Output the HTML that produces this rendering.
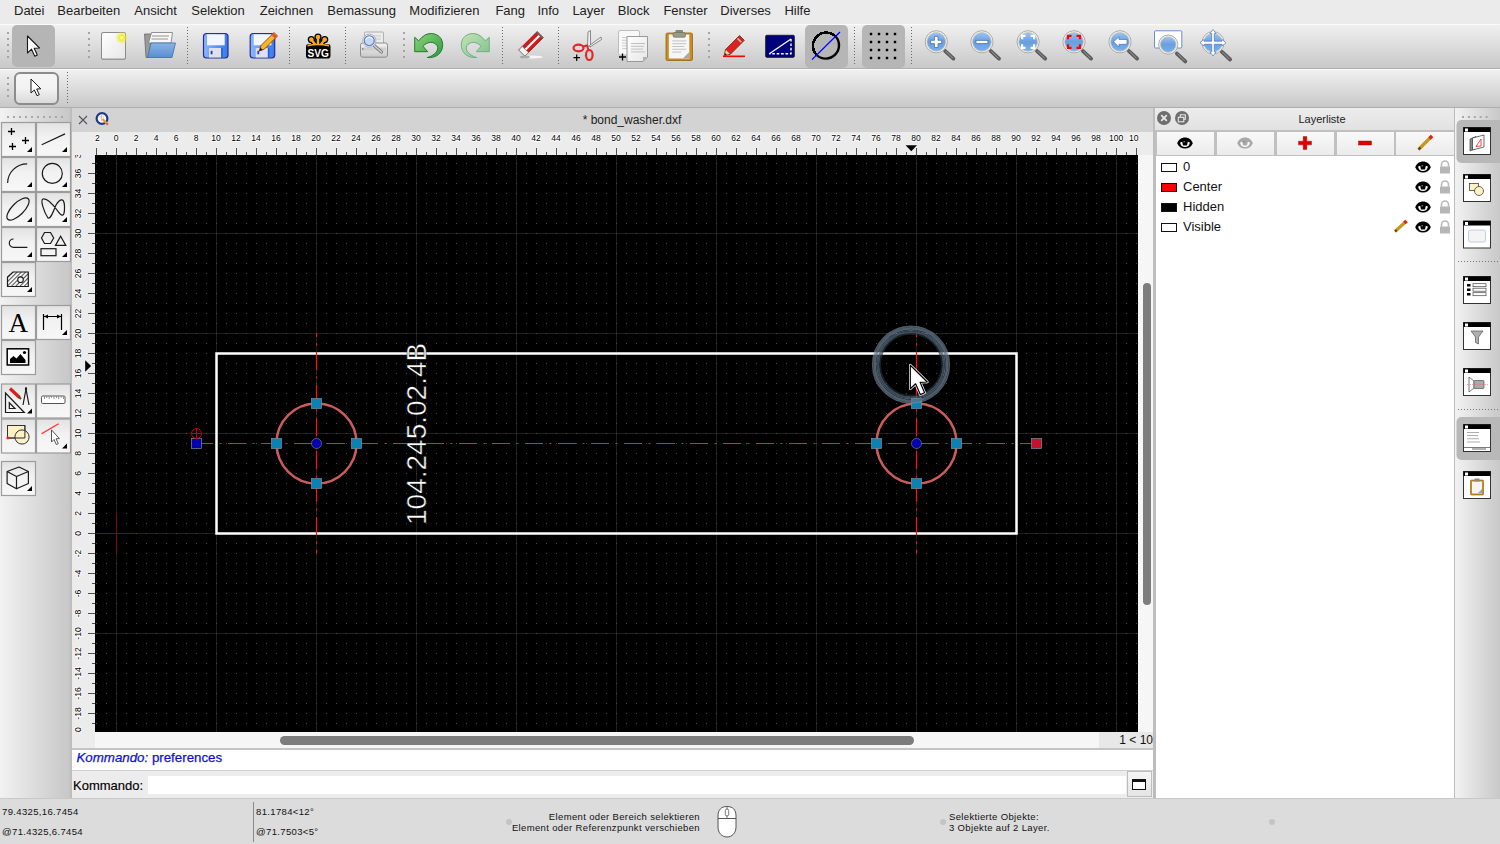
<!DOCTYPE html>
<html><head><meta charset="utf-8">
<style>
html,body{margin:0;padding:0;}
body{width:1500px;height:844px;overflow:hidden;position:relative;background:#ececec;font-family:"Liberation Sans",sans-serif;color:#1a1a1a;}
.a{position:absolute;}
.t{position:absolute;white-space:nowrap;line-height:1;}
svg{position:absolute;overflow:hidden;}
</style></head><body>
<div class="a" style="left:0;top:0;width:1500px;height:24px;background:#ebebeb;"></div><div class="t" style="left:14px;top:4px;font-size:13px;color:#222;">Datei</div><div class="t" style="left:57.3px;top:4px;font-size:13px;color:#222;">Bearbeiten</div><div class="t" style="left:134.3px;top:4px;font-size:13px;color:#222;">Ansicht</div><div class="t" style="left:191.3px;top:4px;font-size:13px;color:#222;">Selektion</div><div class="t" style="left:259.7px;top:4px;font-size:13px;color:#222;">Zeichnen</div><div class="t" style="left:327.3px;top:4px;font-size:13px;color:#222;">Bemassung</div><div class="t" style="left:409.3px;top:4px;font-size:13px;color:#222;">Modifizieren</div><div class="t" style="left:495.4px;top:4px;font-size:13px;color:#222;">Fang</div><div class="t" style="left:537.4px;top:4px;font-size:13px;color:#222;">Info</div><div class="t" style="left:572.4px;top:4px;font-size:13px;color:#222;">Layer</div><div class="t" style="left:617.8px;top:4px;font-size:13px;color:#222;">Block</div><div class="t" style="left:663.4px;top:4px;font-size:13px;color:#222;">Fenster</div><div class="t" style="left:720.3px;top:4px;font-size:13px;color:#222;">Diverses</div><div class="t" style="left:784.4px;top:4px;font-size:13px;color:#222;">Hilfe</div><div class="a" style="left:0;top:24px;width:1500px;height:44px;background:linear-gradient(#f0f0f0,#c8c8c8);border-top:1px solid #fafafa;box-sizing:border-box;"></div><div class="a" style="left:0;top:68px;width:1500px;height:1px;background:#b0b0b0;"></div><div class="a" style="left:0;top:69px;width:1500px;height:38px;background:linear-gradient(#f0f0f0,#c8c8c8);border-top:1px solid #fafafa;box-sizing:border-box;"></div><div class="a" style="left:0;top:107px;width:1500px;height:1px;background:#aeaeae;"></div><div class="a" style="left:0;top:108px;width:71px;height:690px;background:linear-gradient(90deg,#f2f2f2,#c6c6c6);"></div><div class="a" style="left:71px;top:108px;width:1082px;height:24px;background:#d3d3d3;"></div><div class="a" style="left:70px;top:108px;width:2px;height:690px;background:#bdbdbd;"></div><div class="t" style="left:632px;top:114px;font-size:12px;transform:translateX(-50%);color:#222;">* bond_washer.dxf</div><div class="a" style="left:72px;top:132px;width:1081px;height:23px;background:#ececec;"></div><div class="a" style="left:72px;top:155px;width:23px;height:593px;background:#ececec;"></div><div class="a" style="left:1138px;top:155px;width:15px;height:593px;background:#f6f6f6;"></div><div class="a" style="left:95px;top:732px;width:1058px;height:16px;background:#f6f6f6;"></div><svg class="a" style="left:95px;top:155px;" width="1043" height="577" viewBox="0 0 1043 577"><rect x="0" y="0" width="1043" height="577" fill="#000"/><rect x="21" y="0" width="1" height="577" fill="#1f1f1f"/><rect x="121" y="0" width="1" height="577" fill="#1f1f1f"/><rect x="221" y="0" width="1" height="577" fill="#1f1f1f"/><rect x="321" y="0" width="1" height="577" fill="#1f1f1f"/><rect x="421" y="0" width="1" height="577" fill="#1f1f1f"/><rect x="521" y="0" width="1" height="577" fill="#1f1f1f"/><rect x="621" y="0" width="1" height="577" fill="#1f1f1f"/><rect x="721" y="0" width="1" height="577" fill="#1f1f1f"/><rect x="821" y="0" width="1" height="577" fill="#1f1f1f"/><rect x="921" y="0" width="1" height="577" fill="#1f1f1f"/><rect x="1021" y="0" width="1" height="577" fill="#1f1f1f"/><rect x="0" y="478" width="1043" height="1" fill="#1f1f1f"/><rect x="0" y="378" width="1043" height="1" fill="#1f1f1f"/><rect x="0" y="278" width="1043" height="1" fill="#1f1f1f"/><rect x="0" y="178" width="1043" height="1" fill="#1f1f1f"/><rect x="0" y="78" width="1043" height="1" fill="#1f1f1f"/><path d="M1 568h1v1h-1zM1 558h1v1h-1zM1 548h1v1h-1zM1 538h1v1h-1zM1 528h1v1h-1zM1 518h1v1h-1zM1 508h1v1h-1zM1 498h1v1h-1zM1 488h1v1h-1zM1 478h1v1h-1zM1 468h1v1h-1zM1 458h1v1h-1zM1 448h1v1h-1zM1 438h1v1h-1zM1 428h1v1h-1zM1 418h1v1h-1zM1 408h1v1h-1zM1 398h1v1h-1zM1 388h1v1h-1zM1 378h1v1h-1zM1 368h1v1h-1zM1 358h1v1h-1zM1 348h1v1h-1zM1 338h1v1h-1zM1 328h1v1h-1zM1 318h1v1h-1zM1 308h1v1h-1zM1 298h1v1h-1zM1 288h1v1h-1zM1 278h1v1h-1zM1 268h1v1h-1zM1 258h1v1h-1zM1 248h1v1h-1zM1 238h1v1h-1zM1 228h1v1h-1zM1 218h1v1h-1zM1 208h1v1h-1zM1 198h1v1h-1zM1 188h1v1h-1zM1 178h1v1h-1zM1 168h1v1h-1zM1 158h1v1h-1zM1 148h1v1h-1zM1 138h1v1h-1zM1 128h1v1h-1zM1 118h1v1h-1zM1 108h1v1h-1zM1 98h1v1h-1zM1 88h1v1h-1zM1 78h1v1h-1zM1 68h1v1h-1zM1 58h1v1h-1zM1 48h1v1h-1zM1 38h1v1h-1zM1 28h1v1h-1zM1 18h1v1h-1zM1 8h1v1h-1zM11 568h1v1h-1zM11 558h1v1h-1zM11 548h1v1h-1zM11 538h1v1h-1zM11 528h1v1h-1zM11 518h1v1h-1zM11 508h1v1h-1zM11 498h1v1h-1zM11 488h1v1h-1zM11 478h1v1h-1zM11 468h1v1h-1zM11 458h1v1h-1zM11 448h1v1h-1zM11 438h1v1h-1zM11 428h1v1h-1zM11 418h1v1h-1zM11 408h1v1h-1zM11 398h1v1h-1zM11 388h1v1h-1zM11 378h1v1h-1zM11 368h1v1h-1zM11 358h1v1h-1zM11 348h1v1h-1zM11 338h1v1h-1zM11 328h1v1h-1zM11 318h1v1h-1zM11 308h1v1h-1zM11 298h1v1h-1zM11 288h1v1h-1zM11 278h1v1h-1zM11 268h1v1h-1zM11 258h1v1h-1zM11 248h1v1h-1zM11 238h1v1h-1zM11 228h1v1h-1zM11 218h1v1h-1zM11 208h1v1h-1zM11 198h1v1h-1zM11 188h1v1h-1zM11 178h1v1h-1zM11 168h1v1h-1zM11 158h1v1h-1zM11 148h1v1h-1zM11 138h1v1h-1zM11 128h1v1h-1zM11 118h1v1h-1zM11 108h1v1h-1zM11 98h1v1h-1zM11 88h1v1h-1zM11 78h1v1h-1zM11 68h1v1h-1zM11 58h1v1h-1zM11 48h1v1h-1zM11 38h1v1h-1zM11 28h1v1h-1zM11 18h1v1h-1zM11 8h1v1h-1zM21 568h1v1h-1zM21 558h1v1h-1zM21 548h1v1h-1zM21 538h1v1h-1zM21 528h1v1h-1zM21 518h1v1h-1zM21 508h1v1h-1zM21 498h1v1h-1zM21 488h1v1h-1zM21 478h1v1h-1zM21 468h1v1h-1zM21 458h1v1h-1zM21 448h1v1h-1zM21 438h1v1h-1zM21 428h1v1h-1zM21 418h1v1h-1zM21 408h1v1h-1zM21 398h1v1h-1zM21 388h1v1h-1zM21 378h1v1h-1zM21 368h1v1h-1zM21 358h1v1h-1zM21 348h1v1h-1zM21 338h1v1h-1zM21 328h1v1h-1zM21 318h1v1h-1zM21 308h1v1h-1zM21 298h1v1h-1zM21 288h1v1h-1zM21 278h1v1h-1zM21 268h1v1h-1zM21 258h1v1h-1zM21 248h1v1h-1zM21 238h1v1h-1zM21 228h1v1h-1zM21 218h1v1h-1zM21 208h1v1h-1zM21 198h1v1h-1zM21 188h1v1h-1zM21 178h1v1h-1zM21 168h1v1h-1zM21 158h1v1h-1zM21 148h1v1h-1zM21 138h1v1h-1zM21 128h1v1h-1zM21 118h1v1h-1zM21 108h1v1h-1zM21 98h1v1h-1zM21 88h1v1h-1zM21 78h1v1h-1zM21 68h1v1h-1zM21 58h1v1h-1zM21 48h1v1h-1zM21 38h1v1h-1zM21 28h1v1h-1zM21 18h1v1h-1zM21 8h1v1h-1zM31 568h1v1h-1zM31 558h1v1h-1zM31 548h1v1h-1zM31 538h1v1h-1zM31 528h1v1h-1zM31 518h1v1h-1zM31 508h1v1h-1zM31 498h1v1h-1zM31 488h1v1h-1zM31 478h1v1h-1zM31 468h1v1h-1zM31 458h1v1h-1zM31 448h1v1h-1zM31 438h1v1h-1zM31 428h1v1h-1zM31 418h1v1h-1zM31 408h1v1h-1zM31 398h1v1h-1zM31 388h1v1h-1zM31 378h1v1h-1zM31 368h1v1h-1zM31 358h1v1h-1zM31 348h1v1h-1zM31 338h1v1h-1zM31 328h1v1h-1zM31 318h1v1h-1zM31 308h1v1h-1zM31 298h1v1h-1zM31 288h1v1h-1zM31 278h1v1h-1zM31 268h1v1h-1zM31 258h1v1h-1zM31 248h1v1h-1zM31 238h1v1h-1zM31 228h1v1h-1zM31 218h1v1h-1zM31 208h1v1h-1zM31 198h1v1h-1zM31 188h1v1h-1zM31 178h1v1h-1zM31 168h1v1h-1zM31 158h1v1h-1zM31 148h1v1h-1zM31 138h1v1h-1zM31 128h1v1h-1zM31 118h1v1h-1zM31 108h1v1h-1zM31 98h1v1h-1zM31 88h1v1h-1zM31 78h1v1h-1zM31 68h1v1h-1zM31 58h1v1h-1zM31 48h1v1h-1zM31 38h1v1h-1zM31 28h1v1h-1zM31 18h1v1h-1zM31 8h1v1h-1zM41 568h1v1h-1zM41 558h1v1h-1zM41 548h1v1h-1zM41 538h1v1h-1zM41 528h1v1h-1zM41 518h1v1h-1zM41 508h1v1h-1zM41 498h1v1h-1zM41 488h1v1h-1zM41 478h1v1h-1zM41 468h1v1h-1zM41 458h1v1h-1zM41 448h1v1h-1zM41 438h1v1h-1zM41 428h1v1h-1zM41 418h1v1h-1zM41 408h1v1h-1zM41 398h1v1h-1zM41 388h1v1h-1zM41 378h1v1h-1zM41 368h1v1h-1zM41 358h1v1h-1zM41 348h1v1h-1zM41 338h1v1h-1zM41 328h1v1h-1zM41 318h1v1h-1zM41 308h1v1h-1zM41 298h1v1h-1zM41 288h1v1h-1zM41 278h1v1h-1zM41 268h1v1h-1zM41 258h1v1h-1zM41 248h1v1h-1zM41 238h1v1h-1zM41 228h1v1h-1zM41 218h1v1h-1zM41 208h1v1h-1zM41 198h1v1h-1zM41 188h1v1h-1zM41 178h1v1h-1zM41 168h1v1h-1zM41 158h1v1h-1zM41 148h1v1h-1zM41 138h1v1h-1zM41 128h1v1h-1zM41 118h1v1h-1zM41 108h1v1h-1zM41 98h1v1h-1zM41 88h1v1h-1zM41 78h1v1h-1zM41 68h1v1h-1zM41 58h1v1h-1zM41 48h1v1h-1zM41 38h1v1h-1zM41 28h1v1h-1zM41 18h1v1h-1zM41 8h1v1h-1zM51 568h1v1h-1zM51 558h1v1h-1zM51 548h1v1h-1zM51 538h1v1h-1zM51 528h1v1h-1zM51 518h1v1h-1zM51 508h1v1h-1zM51 498h1v1h-1zM51 488h1v1h-1zM51 478h1v1h-1zM51 468h1v1h-1zM51 458h1v1h-1zM51 448h1v1h-1zM51 438h1v1h-1zM51 428h1v1h-1zM51 418h1v1h-1zM51 408h1v1h-1zM51 398h1v1h-1zM51 388h1v1h-1zM51 378h1v1h-1zM51 368h1v1h-1zM51 358h1v1h-1zM51 348h1v1h-1zM51 338h1v1h-1zM51 328h1v1h-1zM51 318h1v1h-1zM51 308h1v1h-1zM51 298h1v1h-1zM51 288h1v1h-1zM51 278h1v1h-1zM51 268h1v1h-1zM51 258h1v1h-1zM51 248h1v1h-1zM51 238h1v1h-1zM51 228h1v1h-1zM51 218h1v1h-1zM51 208h1v1h-1zM51 198h1v1h-1zM51 188h1v1h-1zM51 178h1v1h-1zM51 168h1v1h-1zM51 158h1v1h-1zM51 148h1v1h-1zM51 138h1v1h-1zM51 128h1v1h-1zM51 118h1v1h-1zM51 108h1v1h-1zM51 98h1v1h-1zM51 88h1v1h-1zM51 78h1v1h-1zM51 68h1v1h-1zM51 58h1v1h-1zM51 48h1v1h-1zM51 38h1v1h-1zM51 28h1v1h-1zM51 18h1v1h-1zM51 8h1v1h-1zM61 568h1v1h-1zM61 558h1v1h-1zM61 548h1v1h-1zM61 538h1v1h-1zM61 528h1v1h-1zM61 518h1v1h-1zM61 508h1v1h-1zM61 498h1v1h-1zM61 488h1v1h-1zM61 478h1v1h-1zM61 468h1v1h-1zM61 458h1v1h-1zM61 448h1v1h-1zM61 438h1v1h-1zM61 428h1v1h-1zM61 418h1v1h-1zM61 408h1v1h-1zM61 398h1v1h-1zM61 388h1v1h-1zM61 378h1v1h-1zM61 368h1v1h-1zM61 358h1v1h-1zM61 348h1v1h-1zM61 338h1v1h-1zM61 328h1v1h-1zM61 318h1v1h-1zM61 308h1v1h-1zM61 298h1v1h-1zM61 288h1v1h-1zM61 278h1v1h-1zM61 268h1v1h-1zM61 258h1v1h-1zM61 248h1v1h-1zM61 238h1v1h-1zM61 228h1v1h-1zM61 218h1v1h-1zM61 208h1v1h-1zM61 198h1v1h-1zM61 188h1v1h-1zM61 178h1v1h-1zM61 168h1v1h-1zM61 158h1v1h-1zM61 148h1v1h-1zM61 138h1v1h-1zM61 128h1v1h-1zM61 118h1v1h-1zM61 108h1v1h-1zM61 98h1v1h-1zM61 88h1v1h-1zM61 78h1v1h-1zM61 68h1v1h-1zM61 58h1v1h-1zM61 48h1v1h-1zM61 38h1v1h-1zM61 28h1v1h-1zM61 18h1v1h-1zM61 8h1v1h-1zM71 568h1v1h-1zM71 558h1v1h-1zM71 548h1v1h-1zM71 538h1v1h-1zM71 528h1v1h-1zM71 518h1v1h-1zM71 508h1v1h-1zM71 498h1v1h-1zM71 488h1v1h-1zM71 478h1v1h-1zM71 468h1v1h-1zM71 458h1v1h-1zM71 448h1v1h-1zM71 438h1v1h-1zM71 428h1v1h-1zM71 418h1v1h-1zM71 408h1v1h-1zM71 398h1v1h-1zM71 388h1v1h-1zM71 378h1v1h-1zM71 368h1v1h-1zM71 358h1v1h-1zM71 348h1v1h-1zM71 338h1v1h-1zM71 328h1v1h-1zM71 318h1v1h-1zM71 308h1v1h-1zM71 298h1v1h-1zM71 288h1v1h-1zM71 278h1v1h-1zM71 268h1v1h-1zM71 258h1v1h-1zM71 248h1v1h-1zM71 238h1v1h-1zM71 228h1v1h-1zM71 218h1v1h-1zM71 208h1v1h-1zM71 198h1v1h-1zM71 188h1v1h-1zM71 178h1v1h-1zM71 168h1v1h-1zM71 158h1v1h-1zM71 148h1v1h-1zM71 138h1v1h-1zM71 128h1v1h-1zM71 118h1v1h-1zM71 108h1v1h-1zM71 98h1v1h-1zM71 88h1v1h-1zM71 78h1v1h-1zM71 68h1v1h-1zM71 58h1v1h-1zM71 48h1v1h-1zM71 38h1v1h-1zM71 28h1v1h-1zM71 18h1v1h-1zM71 8h1v1h-1zM81 568h1v1h-1zM81 558h1v1h-1zM81 548h1v1h-1zM81 538h1v1h-1zM81 528h1v1h-1zM81 518h1v1h-1zM81 508h1v1h-1zM81 498h1v1h-1zM81 488h1v1h-1zM81 478h1v1h-1zM81 468h1v1h-1zM81 458h1v1h-1zM81 448h1v1h-1zM81 438h1v1h-1zM81 428h1v1h-1zM81 418h1v1h-1zM81 408h1v1h-1zM81 398h1v1h-1zM81 388h1v1h-1zM81 378h1v1h-1zM81 368h1v1h-1zM81 358h1v1h-1zM81 348h1v1h-1zM81 338h1v1h-1zM81 328h1v1h-1zM81 318h1v1h-1zM81 308h1v1h-1zM81 298h1v1h-1zM81 288h1v1h-1zM81 278h1v1h-1zM81 268h1v1h-1zM81 258h1v1h-1zM81 248h1v1h-1zM81 238h1v1h-1zM81 228h1v1h-1zM81 218h1v1h-1zM81 208h1v1h-1zM81 198h1v1h-1zM81 188h1v1h-1zM81 178h1v1h-1zM81 168h1v1h-1zM81 158h1v1h-1zM81 148h1v1h-1zM81 138h1v1h-1zM81 128h1v1h-1zM81 118h1v1h-1zM81 108h1v1h-1zM81 98h1v1h-1zM81 88h1v1h-1zM81 78h1v1h-1zM81 68h1v1h-1zM81 58h1v1h-1zM81 48h1v1h-1zM81 38h1v1h-1zM81 28h1v1h-1zM81 18h1v1h-1zM81 8h1v1h-1zM91 568h1v1h-1zM91 558h1v1h-1zM91 548h1v1h-1zM91 538h1v1h-1zM91 528h1v1h-1zM91 518h1v1h-1zM91 508h1v1h-1zM91 498h1v1h-1zM91 488h1v1h-1zM91 478h1v1h-1zM91 468h1v1h-1zM91 458h1v1h-1zM91 448h1v1h-1zM91 438h1v1h-1zM91 428h1v1h-1zM91 418h1v1h-1zM91 408h1v1h-1zM91 398h1v1h-1zM91 388h1v1h-1zM91 378h1v1h-1zM91 368h1v1h-1zM91 358h1v1h-1zM91 348h1v1h-1zM91 338h1v1h-1zM91 328h1v1h-1zM91 318h1v1h-1zM91 308h1v1h-1zM91 298h1v1h-1zM91 288h1v1h-1zM91 278h1v1h-1zM91 268h1v1h-1zM91 258h1v1h-1zM91 248h1v1h-1zM91 238h1v1h-1zM91 228h1v1h-1zM91 218h1v1h-1zM91 208h1v1h-1zM91 198h1v1h-1zM91 188h1v1h-1zM91 178h1v1h-1zM91 168h1v1h-1zM91 158h1v1h-1zM91 148h1v1h-1zM91 138h1v1h-1zM91 128h1v1h-1zM91 118h1v1h-1zM91 108h1v1h-1zM91 98h1v1h-1zM91 88h1v1h-1zM91 78h1v1h-1zM91 68h1v1h-1zM91 58h1v1h-1zM91 48h1v1h-1zM91 38h1v1h-1zM91 28h1v1h-1zM91 18h1v1h-1zM91 8h1v1h-1zM101 568h1v1h-1zM101 558h1v1h-1zM101 548h1v1h-1zM101 538h1v1h-1zM101 528h1v1h-1zM101 518h1v1h-1zM101 508h1v1h-1zM101 498h1v1h-1zM101 488h1v1h-1zM101 478h1v1h-1zM101 468h1v1h-1zM101 458h1v1h-1zM101 448h1v1h-1zM101 438h1v1h-1zM101 428h1v1h-1zM101 418h1v1h-1zM101 408h1v1h-1zM101 398h1v1h-1zM101 388h1v1h-1zM101 378h1v1h-1zM101 368h1v1h-1zM101 358h1v1h-1zM101 348h1v1h-1zM101 338h1v1h-1zM101 328h1v1h-1zM101 318h1v1h-1zM101 308h1v1h-1zM101 298h1v1h-1zM101 288h1v1h-1zM101 278h1v1h-1zM101 268h1v1h-1zM101 258h1v1h-1zM101 248h1v1h-1zM101 238h1v1h-1zM101 228h1v1h-1zM101 218h1v1h-1zM101 208h1v1h-1zM101 198h1v1h-1zM101 188h1v1h-1zM101 178h1v1h-1zM101 168h1v1h-1zM101 158h1v1h-1zM101 148h1v1h-1zM101 138h1v1h-1zM101 128h1v1h-1zM101 118h1v1h-1zM101 108h1v1h-1zM101 98h1v1h-1zM101 88h1v1h-1zM101 78h1v1h-1zM101 68h1v1h-1zM101 58h1v1h-1zM101 48h1v1h-1zM101 38h1v1h-1zM101 28h1v1h-1zM101 18h1v1h-1zM101 8h1v1h-1zM111 568h1v1h-1zM111 558h1v1h-1zM111 548h1v1h-1zM111 538h1v1h-1zM111 528h1v1h-1zM111 518h1v1h-1zM111 508h1v1h-1zM111 498h1v1h-1zM111 488h1v1h-1zM111 478h1v1h-1zM111 468h1v1h-1zM111 458h1v1h-1zM111 448h1v1h-1zM111 438h1v1h-1zM111 428h1v1h-1zM111 418h1v1h-1zM111 408h1v1h-1zM111 398h1v1h-1zM111 388h1v1h-1zM111 378h1v1h-1zM111 368h1v1h-1zM111 358h1v1h-1zM111 348h1v1h-1zM111 338h1v1h-1zM111 328h1v1h-1zM111 318h1v1h-1zM111 308h1v1h-1zM111 298h1v1h-1zM111 288h1v1h-1zM111 278h1v1h-1zM111 268h1v1h-1zM111 258h1v1h-1zM111 248h1v1h-1zM111 238h1v1h-1zM111 228h1v1h-1zM111 218h1v1h-1zM111 208h1v1h-1zM111 198h1v1h-1zM111 188h1v1h-1zM111 178h1v1h-1zM111 168h1v1h-1zM111 158h1v1h-1zM111 148h1v1h-1zM111 138h1v1h-1zM111 128h1v1h-1zM111 118h1v1h-1zM111 108h1v1h-1zM111 98h1v1h-1zM111 88h1v1h-1zM111 78h1v1h-1zM111 68h1v1h-1zM111 58h1v1h-1zM111 48h1v1h-1zM111 38h1v1h-1zM111 28h1v1h-1zM111 18h1v1h-1zM111 8h1v1h-1zM121 568h1v1h-1zM121 558h1v1h-1zM121 548h1v1h-1zM121 538h1v1h-1zM121 528h1v1h-1zM121 518h1v1h-1zM121 508h1v1h-1zM121 498h1v1h-1zM121 488h1v1h-1zM121 478h1v1h-1zM121 468h1v1h-1zM121 458h1v1h-1zM121 448h1v1h-1zM121 438h1v1h-1zM121 428h1v1h-1zM121 418h1v1h-1zM121 408h1v1h-1zM121 398h1v1h-1zM121 388h1v1h-1zM121 378h1v1h-1zM121 368h1v1h-1zM121 358h1v1h-1zM121 348h1v1h-1zM121 338h1v1h-1zM121 328h1v1h-1zM121 318h1v1h-1zM121 308h1v1h-1zM121 298h1v1h-1zM121 288h1v1h-1zM121 278h1v1h-1zM121 268h1v1h-1zM121 258h1v1h-1zM121 248h1v1h-1zM121 238h1v1h-1zM121 228h1v1h-1zM121 218h1v1h-1zM121 208h1v1h-1zM121 198h1v1h-1zM121 188h1v1h-1zM121 178h1v1h-1zM121 168h1v1h-1zM121 158h1v1h-1zM121 148h1v1h-1zM121 138h1v1h-1zM121 128h1v1h-1zM121 118h1v1h-1zM121 108h1v1h-1zM121 98h1v1h-1zM121 88h1v1h-1zM121 78h1v1h-1zM121 68h1v1h-1zM121 58h1v1h-1zM121 48h1v1h-1zM121 38h1v1h-1zM121 28h1v1h-1zM121 18h1v1h-1zM121 8h1v1h-1zM131 568h1v1h-1zM131 558h1v1h-1zM131 548h1v1h-1zM131 538h1v1h-1zM131 528h1v1h-1zM131 518h1v1h-1zM131 508h1v1h-1zM131 498h1v1h-1zM131 488h1v1h-1zM131 478h1v1h-1zM131 468h1v1h-1zM131 458h1v1h-1zM131 448h1v1h-1zM131 438h1v1h-1zM131 428h1v1h-1zM131 418h1v1h-1zM131 408h1v1h-1zM131 398h1v1h-1zM131 388h1v1h-1zM131 378h1v1h-1zM131 368h1v1h-1zM131 358h1v1h-1zM131 348h1v1h-1zM131 338h1v1h-1zM131 328h1v1h-1zM131 318h1v1h-1zM131 308h1v1h-1zM131 298h1v1h-1zM131 288h1v1h-1zM131 278h1v1h-1zM131 268h1v1h-1zM131 258h1v1h-1zM131 248h1v1h-1zM131 238h1v1h-1zM131 228h1v1h-1zM131 218h1v1h-1zM131 208h1v1h-1zM131 198h1v1h-1zM131 188h1v1h-1zM131 178h1v1h-1zM131 168h1v1h-1zM131 158h1v1h-1zM131 148h1v1h-1zM131 138h1v1h-1zM131 128h1v1h-1zM131 118h1v1h-1zM131 108h1v1h-1zM131 98h1v1h-1zM131 88h1v1h-1zM131 78h1v1h-1zM131 68h1v1h-1zM131 58h1v1h-1zM131 48h1v1h-1zM131 38h1v1h-1zM131 28h1v1h-1zM131 18h1v1h-1zM131 8h1v1h-1zM141 568h1v1h-1zM141 558h1v1h-1zM141 548h1v1h-1zM141 538h1v1h-1zM141 528h1v1h-1zM141 518h1v1h-1zM141 508h1v1h-1zM141 498h1v1h-1zM141 488h1v1h-1zM141 478h1v1h-1zM141 468h1v1h-1zM141 458h1v1h-1zM141 448h1v1h-1zM141 438h1v1h-1zM141 428h1v1h-1zM141 418h1v1h-1zM141 408h1v1h-1zM141 398h1v1h-1zM141 388h1v1h-1zM141 378h1v1h-1zM141 368h1v1h-1zM141 358h1v1h-1zM141 348h1v1h-1zM141 338h1v1h-1zM141 328h1v1h-1zM141 318h1v1h-1zM141 308h1v1h-1zM141 298h1v1h-1zM141 288h1v1h-1zM141 278h1v1h-1zM141 268h1v1h-1zM141 258h1v1h-1zM141 248h1v1h-1zM141 238h1v1h-1zM141 228h1v1h-1zM141 218h1v1h-1zM141 208h1v1h-1zM141 198h1v1h-1zM141 188h1v1h-1zM141 178h1v1h-1zM141 168h1v1h-1zM141 158h1v1h-1zM141 148h1v1h-1zM141 138h1v1h-1zM141 128h1v1h-1zM141 118h1v1h-1zM141 108h1v1h-1zM141 98h1v1h-1zM141 88h1v1h-1zM141 78h1v1h-1zM141 68h1v1h-1zM141 58h1v1h-1zM141 48h1v1h-1zM141 38h1v1h-1zM141 28h1v1h-1zM141 18h1v1h-1zM141 8h1v1h-1zM151 568h1v1h-1zM151 558h1v1h-1zM151 548h1v1h-1zM151 538h1v1h-1zM151 528h1v1h-1zM151 518h1v1h-1zM151 508h1v1h-1zM151 498h1v1h-1zM151 488h1v1h-1zM151 478h1v1h-1zM151 468h1v1h-1zM151 458h1v1h-1zM151 448h1v1h-1zM151 438h1v1h-1zM151 428h1v1h-1zM151 418h1v1h-1zM151 408h1v1h-1zM151 398h1v1h-1zM151 388h1v1h-1zM151 378h1v1h-1zM151 368h1v1h-1zM151 358h1v1h-1zM151 348h1v1h-1zM151 338h1v1h-1zM151 328h1v1h-1zM151 318h1v1h-1zM151 308h1v1h-1zM151 298h1v1h-1zM151 288h1v1h-1zM151 278h1v1h-1zM151 268h1v1h-1zM151 258h1v1h-1zM151 248h1v1h-1zM151 238h1v1h-1zM151 228h1v1h-1zM151 218h1v1h-1zM151 208h1v1h-1zM151 198h1v1h-1zM151 188h1v1h-1zM151 178h1v1h-1zM151 168h1v1h-1zM151 158h1v1h-1zM151 148h1v1h-1zM151 138h1v1h-1zM151 128h1v1h-1zM151 118h1v1h-1zM151 108h1v1h-1zM151 98h1v1h-1zM151 88h1v1h-1zM151 78h1v1h-1zM151 68h1v1h-1zM151 58h1v1h-1zM151 48h1v1h-1zM151 38h1v1h-1zM151 28h1v1h-1zM151 18h1v1h-1zM151 8h1v1h-1zM161 568h1v1h-1zM161 558h1v1h-1zM161 548h1v1h-1zM161 538h1v1h-1zM161 528h1v1h-1zM161 518h1v1h-1zM161 508h1v1h-1zM161 498h1v1h-1zM161 488h1v1h-1zM161 478h1v1h-1zM161 468h1v1h-1zM161 458h1v1h-1zM161 448h1v1h-1zM161 438h1v1h-1zM161 428h1v1h-1zM161 418h1v1h-1zM161 408h1v1h-1zM161 398h1v1h-1zM161 388h1v1h-1zM161 378h1v1h-1zM161 368h1v1h-1zM161 358h1v1h-1zM161 348h1v1h-1zM161 338h1v1h-1zM161 328h1v1h-1zM161 318h1v1h-1zM161 308h1v1h-1zM161 298h1v1h-1zM161 288h1v1h-1zM161 278h1v1h-1zM161 268h1v1h-1zM161 258h1v1h-1zM161 248h1v1h-1zM161 238h1v1h-1zM161 228h1v1h-1zM161 218h1v1h-1zM161 208h1v1h-1zM161 198h1v1h-1zM161 188h1v1h-1zM161 178h1v1h-1zM161 168h1v1h-1zM161 158h1v1h-1zM161 148h1v1h-1zM161 138h1v1h-1zM161 128h1v1h-1zM161 118h1v1h-1zM161 108h1v1h-1zM161 98h1v1h-1zM161 88h1v1h-1zM161 78h1v1h-1zM161 68h1v1h-1zM161 58h1v1h-1zM161 48h1v1h-1zM161 38h1v1h-1zM161 28h1v1h-1zM161 18h1v1h-1zM161 8h1v1h-1zM171 568h1v1h-1zM171 558h1v1h-1zM171 548h1v1h-1zM171 538h1v1h-1zM171 528h1v1h-1zM171 518h1v1h-1zM171 508h1v1h-1zM171 498h1v1h-1zM171 488h1v1h-1zM171 478h1v1h-1zM171 468h1v1h-1zM171 458h1v1h-1zM171 448h1v1h-1zM171 438h1v1h-1zM171 428h1v1h-1zM171 418h1v1h-1zM171 408h1v1h-1zM171 398h1v1h-1zM171 388h1v1h-1zM171 378h1v1h-1zM171 368h1v1h-1zM171 358h1v1h-1zM171 348h1v1h-1zM171 338h1v1h-1zM171 328h1v1h-1zM171 318h1v1h-1zM171 308h1v1h-1zM171 298h1v1h-1zM171 288h1v1h-1zM171 278h1v1h-1zM171 268h1v1h-1zM171 258h1v1h-1zM171 248h1v1h-1zM171 238h1v1h-1zM171 228h1v1h-1zM171 218h1v1h-1zM171 208h1v1h-1zM171 198h1v1h-1zM171 188h1v1h-1zM171 178h1v1h-1zM171 168h1v1h-1zM171 158h1v1h-1zM171 148h1v1h-1zM171 138h1v1h-1zM171 128h1v1h-1zM171 118h1v1h-1zM171 108h1v1h-1zM171 98h1v1h-1zM171 88h1v1h-1zM171 78h1v1h-1zM171 68h1v1h-1zM171 58h1v1h-1zM171 48h1v1h-1zM171 38h1v1h-1zM171 28h1v1h-1zM171 18h1v1h-1zM171 8h1v1h-1zM181 568h1v1h-1zM181 558h1v1h-1zM181 548h1v1h-1zM181 538h1v1h-1zM181 528h1v1h-1zM181 518h1v1h-1zM181 508h1v1h-1zM181 498h1v1h-1zM181 488h1v1h-1zM181 478h1v1h-1zM181 468h1v1h-1zM181 458h1v1h-1zM181 448h1v1h-1zM181 438h1v1h-1zM181 428h1v1h-1zM181 418h1v1h-1zM181 408h1v1h-1zM181 398h1v1h-1zM181 388h1v1h-1zM181 378h1v1h-1zM181 368h1v1h-1zM181 358h1v1h-1zM181 348h1v1h-1zM181 338h1v1h-1zM181 328h1v1h-1zM181 318h1v1h-1zM181 308h1v1h-1zM181 298h1v1h-1zM181 288h1v1h-1zM181 278h1v1h-1zM181 268h1v1h-1zM181 258h1v1h-1zM181 248h1v1h-1zM181 238h1v1h-1zM181 228h1v1h-1zM181 218h1v1h-1zM181 208h1v1h-1zM181 198h1v1h-1zM181 188h1v1h-1zM181 178h1v1h-1zM181 168h1v1h-1zM181 158h1v1h-1zM181 148h1v1h-1zM181 138h1v1h-1zM181 128h1v1h-1zM181 118h1v1h-1zM181 108h1v1h-1zM181 98h1v1h-1zM181 88h1v1h-1zM181 78h1v1h-1zM181 68h1v1h-1zM181 58h1v1h-1zM181 48h1v1h-1zM181 38h1v1h-1zM181 28h1v1h-1zM181 18h1v1h-1zM181 8h1v1h-1zM191 568h1v1h-1zM191 558h1v1h-1zM191 548h1v1h-1zM191 538h1v1h-1zM191 528h1v1h-1zM191 518h1v1h-1zM191 508h1v1h-1zM191 498h1v1h-1zM191 488h1v1h-1zM191 478h1v1h-1zM191 468h1v1h-1zM191 458h1v1h-1zM191 448h1v1h-1zM191 438h1v1h-1zM191 428h1v1h-1zM191 418h1v1h-1zM191 408h1v1h-1zM191 398h1v1h-1zM191 388h1v1h-1zM191 378h1v1h-1zM191 368h1v1h-1zM191 358h1v1h-1zM191 348h1v1h-1zM191 338h1v1h-1zM191 328h1v1h-1zM191 318h1v1h-1zM191 308h1v1h-1zM191 298h1v1h-1zM191 288h1v1h-1zM191 278h1v1h-1zM191 268h1v1h-1zM191 258h1v1h-1zM191 248h1v1h-1zM191 238h1v1h-1zM191 228h1v1h-1zM191 218h1v1h-1zM191 208h1v1h-1zM191 198h1v1h-1zM191 188h1v1h-1zM191 178h1v1h-1zM191 168h1v1h-1zM191 158h1v1h-1zM191 148h1v1h-1zM191 138h1v1h-1zM191 128h1v1h-1zM191 118h1v1h-1zM191 108h1v1h-1zM191 98h1v1h-1zM191 88h1v1h-1zM191 78h1v1h-1zM191 68h1v1h-1zM191 58h1v1h-1zM191 48h1v1h-1zM191 38h1v1h-1zM191 28h1v1h-1zM191 18h1v1h-1zM191 8h1v1h-1zM201 568h1v1h-1zM201 558h1v1h-1zM201 548h1v1h-1zM201 538h1v1h-1zM201 528h1v1h-1zM201 518h1v1h-1zM201 508h1v1h-1zM201 498h1v1h-1zM201 488h1v1h-1zM201 478h1v1h-1zM201 468h1v1h-1zM201 458h1v1h-1zM201 448h1v1h-1zM201 438h1v1h-1zM201 428h1v1h-1zM201 418h1v1h-1zM201 408h1v1h-1zM201 398h1v1h-1zM201 388h1v1h-1zM201 378h1v1h-1zM201 368h1v1h-1zM201 358h1v1h-1zM201 348h1v1h-1zM201 338h1v1h-1zM201 328h1v1h-1zM201 318h1v1h-1zM201 308h1v1h-1zM201 298h1v1h-1zM201 288h1v1h-1zM201 278h1v1h-1zM201 268h1v1h-1zM201 258h1v1h-1zM201 248h1v1h-1zM201 238h1v1h-1zM201 228h1v1h-1zM201 218h1v1h-1zM201 208h1v1h-1zM201 198h1v1h-1zM201 188h1v1h-1zM201 178h1v1h-1zM201 168h1v1h-1zM201 158h1v1h-1zM201 148h1v1h-1zM201 138h1v1h-1zM201 128h1v1h-1zM201 118h1v1h-1zM201 108h1v1h-1zM201 98h1v1h-1zM201 88h1v1h-1zM201 78h1v1h-1zM201 68h1v1h-1zM201 58h1v1h-1zM201 48h1v1h-1zM201 38h1v1h-1zM201 28h1v1h-1zM201 18h1v1h-1zM201 8h1v1h-1zM211 568h1v1h-1zM211 558h1v1h-1zM211 548h1v1h-1zM211 538h1v1h-1zM211 528h1v1h-1zM211 518h1v1h-1zM211 508h1v1h-1zM211 498h1v1h-1zM211 488h1v1h-1zM211 478h1v1h-1zM211 468h1v1h-1zM211 458h1v1h-1zM211 448h1v1h-1zM211 438h1v1h-1zM211 428h1v1h-1zM211 418h1v1h-1zM211 408h1v1h-1zM211 398h1v1h-1zM211 388h1v1h-1zM211 378h1v1h-1zM211 368h1v1h-1zM211 358h1v1h-1zM211 348h1v1h-1zM211 338h1v1h-1zM211 328h1v1h-1zM211 318h1v1h-1zM211 308h1v1h-1zM211 298h1v1h-1zM211 288h1v1h-1zM211 278h1v1h-1zM211 268h1v1h-1zM211 258h1v1h-1zM211 248h1v1h-1zM211 238h1v1h-1zM211 228h1v1h-1zM211 218h1v1h-1zM211 208h1v1h-1zM211 198h1v1h-1zM211 188h1v1h-1zM211 178h1v1h-1zM211 168h1v1h-1zM211 158h1v1h-1zM211 148h1v1h-1zM211 138h1v1h-1zM211 128h1v1h-1zM211 118h1v1h-1zM211 108h1v1h-1zM211 98h1v1h-1zM211 88h1v1h-1zM211 78h1v1h-1zM211 68h1v1h-1zM211 58h1v1h-1zM211 48h1v1h-1zM211 38h1v1h-1zM211 28h1v1h-1zM211 18h1v1h-1zM211 8h1v1h-1zM221 568h1v1h-1zM221 558h1v1h-1zM221 548h1v1h-1zM221 538h1v1h-1zM221 528h1v1h-1zM221 518h1v1h-1zM221 508h1v1h-1zM221 498h1v1h-1zM221 488h1v1h-1zM221 478h1v1h-1zM221 468h1v1h-1zM221 458h1v1h-1zM221 448h1v1h-1zM221 438h1v1h-1zM221 428h1v1h-1zM221 418h1v1h-1zM221 408h1v1h-1zM221 398h1v1h-1zM221 388h1v1h-1zM221 378h1v1h-1zM221 368h1v1h-1zM221 358h1v1h-1zM221 348h1v1h-1zM221 338h1v1h-1zM221 328h1v1h-1zM221 318h1v1h-1zM221 308h1v1h-1zM221 298h1v1h-1zM221 288h1v1h-1zM221 278h1v1h-1zM221 268h1v1h-1zM221 258h1v1h-1zM221 248h1v1h-1zM221 238h1v1h-1zM221 228h1v1h-1zM221 218h1v1h-1zM221 208h1v1h-1zM221 198h1v1h-1zM221 188h1v1h-1zM221 178h1v1h-1zM221 168h1v1h-1zM221 158h1v1h-1zM221 148h1v1h-1zM221 138h1v1h-1zM221 128h1v1h-1zM221 118h1v1h-1zM221 108h1v1h-1zM221 98h1v1h-1zM221 88h1v1h-1zM221 78h1v1h-1zM221 68h1v1h-1zM221 58h1v1h-1zM221 48h1v1h-1zM221 38h1v1h-1zM221 28h1v1h-1zM221 18h1v1h-1zM221 8h1v1h-1zM231 568h1v1h-1zM231 558h1v1h-1zM231 548h1v1h-1zM231 538h1v1h-1zM231 528h1v1h-1zM231 518h1v1h-1zM231 508h1v1h-1zM231 498h1v1h-1zM231 488h1v1h-1zM231 478h1v1h-1zM231 468h1v1h-1zM231 458h1v1h-1zM231 448h1v1h-1zM231 438h1v1h-1zM231 428h1v1h-1zM231 418h1v1h-1zM231 408h1v1h-1zM231 398h1v1h-1zM231 388h1v1h-1zM231 378h1v1h-1zM231 368h1v1h-1zM231 358h1v1h-1zM231 348h1v1h-1zM231 338h1v1h-1zM231 328h1v1h-1zM231 318h1v1h-1zM231 308h1v1h-1zM231 298h1v1h-1zM231 288h1v1h-1zM231 278h1v1h-1zM231 268h1v1h-1zM231 258h1v1h-1zM231 248h1v1h-1zM231 238h1v1h-1zM231 228h1v1h-1zM231 218h1v1h-1zM231 208h1v1h-1zM231 198h1v1h-1zM231 188h1v1h-1zM231 178h1v1h-1zM231 168h1v1h-1zM231 158h1v1h-1zM231 148h1v1h-1zM231 138h1v1h-1zM231 128h1v1h-1zM231 118h1v1h-1zM231 108h1v1h-1zM231 98h1v1h-1zM231 88h1v1h-1zM231 78h1v1h-1zM231 68h1v1h-1zM231 58h1v1h-1zM231 48h1v1h-1zM231 38h1v1h-1zM231 28h1v1h-1zM231 18h1v1h-1zM231 8h1v1h-1zM241 568h1v1h-1zM241 558h1v1h-1zM241 548h1v1h-1zM241 538h1v1h-1zM241 528h1v1h-1zM241 518h1v1h-1zM241 508h1v1h-1zM241 498h1v1h-1zM241 488h1v1h-1zM241 478h1v1h-1zM241 468h1v1h-1zM241 458h1v1h-1zM241 448h1v1h-1zM241 438h1v1h-1zM241 428h1v1h-1zM241 418h1v1h-1zM241 408h1v1h-1zM241 398h1v1h-1zM241 388h1v1h-1zM241 378h1v1h-1zM241 368h1v1h-1zM241 358h1v1h-1zM241 348h1v1h-1zM241 338h1v1h-1zM241 328h1v1h-1zM241 318h1v1h-1zM241 308h1v1h-1zM241 298h1v1h-1zM241 288h1v1h-1zM241 278h1v1h-1zM241 268h1v1h-1zM241 258h1v1h-1zM241 248h1v1h-1zM241 238h1v1h-1zM241 228h1v1h-1zM241 218h1v1h-1zM241 208h1v1h-1zM241 198h1v1h-1zM241 188h1v1h-1zM241 178h1v1h-1zM241 168h1v1h-1zM241 158h1v1h-1zM241 148h1v1h-1zM241 138h1v1h-1zM241 128h1v1h-1zM241 118h1v1h-1zM241 108h1v1h-1zM241 98h1v1h-1zM241 88h1v1h-1zM241 78h1v1h-1zM241 68h1v1h-1zM241 58h1v1h-1zM241 48h1v1h-1zM241 38h1v1h-1zM241 28h1v1h-1zM241 18h1v1h-1zM241 8h1v1h-1zM251 568h1v1h-1zM251 558h1v1h-1zM251 548h1v1h-1zM251 538h1v1h-1zM251 528h1v1h-1zM251 518h1v1h-1zM251 508h1v1h-1zM251 498h1v1h-1zM251 488h1v1h-1zM251 478h1v1h-1zM251 468h1v1h-1zM251 458h1v1h-1zM251 448h1v1h-1zM251 438h1v1h-1zM251 428h1v1h-1zM251 418h1v1h-1zM251 408h1v1h-1zM251 398h1v1h-1zM251 388h1v1h-1zM251 378h1v1h-1zM251 368h1v1h-1zM251 358h1v1h-1zM251 348h1v1h-1zM251 338h1v1h-1zM251 328h1v1h-1zM251 318h1v1h-1zM251 308h1v1h-1zM251 298h1v1h-1zM251 288h1v1h-1zM251 278h1v1h-1zM251 268h1v1h-1zM251 258h1v1h-1zM251 248h1v1h-1zM251 238h1v1h-1zM251 228h1v1h-1zM251 218h1v1h-1zM251 208h1v1h-1zM251 198h1v1h-1zM251 188h1v1h-1zM251 178h1v1h-1zM251 168h1v1h-1zM251 158h1v1h-1zM251 148h1v1h-1zM251 138h1v1h-1zM251 128h1v1h-1zM251 118h1v1h-1zM251 108h1v1h-1zM251 98h1v1h-1zM251 88h1v1h-1zM251 78h1v1h-1zM251 68h1v1h-1zM251 58h1v1h-1zM251 48h1v1h-1zM251 38h1v1h-1zM251 28h1v1h-1zM251 18h1v1h-1zM251 8h1v1h-1zM261 568h1v1h-1zM261 558h1v1h-1zM261 548h1v1h-1zM261 538h1v1h-1zM261 528h1v1h-1zM261 518h1v1h-1zM261 508h1v1h-1zM261 498h1v1h-1zM261 488h1v1h-1zM261 478h1v1h-1zM261 468h1v1h-1zM261 458h1v1h-1zM261 448h1v1h-1zM261 438h1v1h-1zM261 428h1v1h-1zM261 418h1v1h-1zM261 408h1v1h-1zM261 398h1v1h-1zM261 388h1v1h-1zM261 378h1v1h-1zM261 368h1v1h-1zM261 358h1v1h-1zM261 348h1v1h-1zM261 338h1v1h-1zM261 328h1v1h-1zM261 318h1v1h-1zM261 308h1v1h-1zM261 298h1v1h-1zM261 288h1v1h-1zM261 278h1v1h-1zM261 268h1v1h-1zM261 258h1v1h-1zM261 248h1v1h-1zM261 238h1v1h-1zM261 228h1v1h-1zM261 218h1v1h-1zM261 208h1v1h-1zM261 198h1v1h-1zM261 188h1v1h-1zM261 178h1v1h-1zM261 168h1v1h-1zM261 158h1v1h-1zM261 148h1v1h-1zM261 138h1v1h-1zM261 128h1v1h-1zM261 118h1v1h-1zM261 108h1v1h-1zM261 98h1v1h-1zM261 88h1v1h-1zM261 78h1v1h-1zM261 68h1v1h-1zM261 58h1v1h-1zM261 48h1v1h-1zM261 38h1v1h-1zM261 28h1v1h-1zM261 18h1v1h-1zM261 8h1v1h-1zM271 568h1v1h-1zM271 558h1v1h-1zM271 548h1v1h-1zM271 538h1v1h-1zM271 528h1v1h-1zM271 518h1v1h-1zM271 508h1v1h-1zM271 498h1v1h-1zM271 488h1v1h-1zM271 478h1v1h-1zM271 468h1v1h-1zM271 458h1v1h-1zM271 448h1v1h-1zM271 438h1v1h-1zM271 428h1v1h-1zM271 418h1v1h-1zM271 408h1v1h-1zM271 398h1v1h-1zM271 388h1v1h-1zM271 378h1v1h-1zM271 368h1v1h-1zM271 358h1v1h-1zM271 348h1v1h-1zM271 338h1v1h-1zM271 328h1v1h-1zM271 318h1v1h-1zM271 308h1v1h-1zM271 298h1v1h-1zM271 288h1v1h-1zM271 278h1v1h-1zM271 268h1v1h-1zM271 258h1v1h-1zM271 248h1v1h-1zM271 238h1v1h-1zM271 228h1v1h-1zM271 218h1v1h-1zM271 208h1v1h-1zM271 198h1v1h-1zM271 188h1v1h-1zM271 178h1v1h-1zM271 168h1v1h-1zM271 158h1v1h-1zM271 148h1v1h-1zM271 138h1v1h-1zM271 128h1v1h-1zM271 118h1v1h-1zM271 108h1v1h-1zM271 98h1v1h-1zM271 88h1v1h-1zM271 78h1v1h-1zM271 68h1v1h-1zM271 58h1v1h-1zM271 48h1v1h-1zM271 38h1v1h-1zM271 28h1v1h-1zM271 18h1v1h-1zM271 8h1v1h-1zM281 568h1v1h-1zM281 558h1v1h-1zM281 548h1v1h-1zM281 538h1v1h-1zM281 528h1v1h-1zM281 518h1v1h-1zM281 508h1v1h-1zM281 498h1v1h-1zM281 488h1v1h-1zM281 478h1v1h-1zM281 468h1v1h-1zM281 458h1v1h-1zM281 448h1v1h-1zM281 438h1v1h-1zM281 428h1v1h-1zM281 418h1v1h-1zM281 408h1v1h-1zM281 398h1v1h-1zM281 388h1v1h-1zM281 378h1v1h-1zM281 368h1v1h-1zM281 358h1v1h-1zM281 348h1v1h-1zM281 338h1v1h-1zM281 328h1v1h-1zM281 318h1v1h-1zM281 308h1v1h-1zM281 298h1v1h-1zM281 288h1v1h-1zM281 278h1v1h-1zM281 268h1v1h-1zM281 258h1v1h-1zM281 248h1v1h-1zM281 238h1v1h-1zM281 228h1v1h-1zM281 218h1v1h-1zM281 208h1v1h-1zM281 198h1v1h-1zM281 188h1v1h-1zM281 178h1v1h-1zM281 168h1v1h-1zM281 158h1v1h-1zM281 148h1v1h-1zM281 138h1v1h-1zM281 128h1v1h-1zM281 118h1v1h-1zM281 108h1v1h-1zM281 98h1v1h-1zM281 88h1v1h-1zM281 78h1v1h-1zM281 68h1v1h-1zM281 58h1v1h-1zM281 48h1v1h-1zM281 38h1v1h-1zM281 28h1v1h-1zM281 18h1v1h-1zM281 8h1v1h-1zM291 568h1v1h-1zM291 558h1v1h-1zM291 548h1v1h-1zM291 538h1v1h-1zM291 528h1v1h-1zM291 518h1v1h-1zM291 508h1v1h-1zM291 498h1v1h-1zM291 488h1v1h-1zM291 478h1v1h-1zM291 468h1v1h-1zM291 458h1v1h-1zM291 448h1v1h-1zM291 438h1v1h-1zM291 428h1v1h-1zM291 418h1v1h-1zM291 408h1v1h-1zM291 398h1v1h-1zM291 388h1v1h-1zM291 378h1v1h-1zM291 368h1v1h-1zM291 358h1v1h-1zM291 348h1v1h-1zM291 338h1v1h-1zM291 328h1v1h-1zM291 318h1v1h-1zM291 308h1v1h-1zM291 298h1v1h-1zM291 288h1v1h-1zM291 278h1v1h-1zM291 268h1v1h-1zM291 258h1v1h-1zM291 248h1v1h-1zM291 238h1v1h-1zM291 228h1v1h-1zM291 218h1v1h-1zM291 208h1v1h-1zM291 198h1v1h-1zM291 188h1v1h-1zM291 178h1v1h-1zM291 168h1v1h-1zM291 158h1v1h-1zM291 148h1v1h-1zM291 138h1v1h-1zM291 128h1v1h-1zM291 118h1v1h-1zM291 108h1v1h-1zM291 98h1v1h-1zM291 88h1v1h-1zM291 78h1v1h-1zM291 68h1v1h-1zM291 58h1v1h-1zM291 48h1v1h-1zM291 38h1v1h-1zM291 28h1v1h-1zM291 18h1v1h-1zM291 8h1v1h-1zM301 568h1v1h-1zM301 558h1v1h-1zM301 548h1v1h-1zM301 538h1v1h-1zM301 528h1v1h-1zM301 518h1v1h-1zM301 508h1v1h-1zM301 498h1v1h-1zM301 488h1v1h-1zM301 478h1v1h-1zM301 468h1v1h-1zM301 458h1v1h-1zM301 448h1v1h-1zM301 438h1v1h-1zM301 428h1v1h-1zM301 418h1v1h-1zM301 408h1v1h-1zM301 398h1v1h-1zM301 388h1v1h-1zM301 378h1v1h-1zM301 368h1v1h-1zM301 358h1v1h-1zM301 348h1v1h-1zM301 338h1v1h-1zM301 328h1v1h-1zM301 318h1v1h-1zM301 308h1v1h-1zM301 298h1v1h-1zM301 288h1v1h-1zM301 278h1v1h-1zM301 268h1v1h-1zM301 258h1v1h-1zM301 248h1v1h-1zM301 238h1v1h-1zM301 228h1v1h-1zM301 218h1v1h-1zM301 208h1v1h-1zM301 198h1v1h-1zM301 188h1v1h-1zM301 178h1v1h-1zM301 168h1v1h-1zM301 158h1v1h-1zM301 148h1v1h-1zM301 138h1v1h-1zM301 128h1v1h-1zM301 118h1v1h-1zM301 108h1v1h-1zM301 98h1v1h-1zM301 88h1v1h-1zM301 78h1v1h-1zM301 68h1v1h-1zM301 58h1v1h-1zM301 48h1v1h-1zM301 38h1v1h-1zM301 28h1v1h-1zM301 18h1v1h-1zM301 8h1v1h-1zM311 568h1v1h-1zM311 558h1v1h-1zM311 548h1v1h-1zM311 538h1v1h-1zM311 528h1v1h-1zM311 518h1v1h-1zM311 508h1v1h-1zM311 498h1v1h-1zM311 488h1v1h-1zM311 478h1v1h-1zM311 468h1v1h-1zM311 458h1v1h-1zM311 448h1v1h-1zM311 438h1v1h-1zM311 428h1v1h-1zM311 418h1v1h-1zM311 408h1v1h-1zM311 398h1v1h-1zM311 388h1v1h-1zM311 378h1v1h-1zM311 368h1v1h-1zM311 358h1v1h-1zM311 348h1v1h-1zM311 338h1v1h-1zM311 328h1v1h-1zM311 318h1v1h-1zM311 308h1v1h-1zM311 298h1v1h-1zM311 288h1v1h-1zM311 278h1v1h-1zM311 268h1v1h-1zM311 258h1v1h-1zM311 248h1v1h-1zM311 238h1v1h-1zM311 228h1v1h-1zM311 218h1v1h-1zM311 208h1v1h-1zM311 198h1v1h-1zM311 188h1v1h-1zM311 178h1v1h-1zM311 168h1v1h-1zM311 158h1v1h-1zM311 148h1v1h-1zM311 138h1v1h-1zM311 128h1v1h-1zM311 118h1v1h-1zM311 108h1v1h-1zM311 98h1v1h-1zM311 88h1v1h-1zM311 78h1v1h-1zM311 68h1v1h-1zM311 58h1v1h-1zM311 48h1v1h-1zM311 38h1v1h-1zM311 28h1v1h-1zM311 18h1v1h-1zM311 8h1v1h-1zM321 568h1v1h-1zM321 558h1v1h-1zM321 548h1v1h-1zM321 538h1v1h-1zM321 528h1v1h-1zM321 518h1v1h-1zM321 508h1v1h-1zM321 498h1v1h-1zM321 488h1v1h-1zM321 478h1v1h-1zM321 468h1v1h-1zM321 458h1v1h-1zM321 448h1v1h-1zM321 438h1v1h-1zM321 428h1v1h-1zM321 418h1v1h-1zM321 408h1v1h-1zM321 398h1v1h-1zM321 388h1v1h-1zM321 378h1v1h-1zM321 368h1v1h-1zM321 358h1v1h-1zM321 348h1v1h-1zM321 338h1v1h-1zM321 328h1v1h-1zM321 318h1v1h-1zM321 308h1v1h-1zM321 298h1v1h-1zM321 288h1v1h-1zM321 278h1v1h-1zM321 268h1v1h-1zM321 258h1v1h-1zM321 248h1v1h-1zM321 238h1v1h-1zM321 228h1v1h-1zM321 218h1v1h-1zM321 208h1v1h-1zM321 198h1v1h-1zM321 188h1v1h-1zM321 178h1v1h-1zM321 168h1v1h-1zM321 158h1v1h-1zM321 148h1v1h-1zM321 138h1v1h-1zM321 128h1v1h-1zM321 118h1v1h-1zM321 108h1v1h-1zM321 98h1v1h-1zM321 88h1v1h-1zM321 78h1v1h-1zM321 68h1v1h-1zM321 58h1v1h-1zM321 48h1v1h-1zM321 38h1v1h-1zM321 28h1v1h-1zM321 18h1v1h-1zM321 8h1v1h-1zM331 568h1v1h-1zM331 558h1v1h-1zM331 548h1v1h-1zM331 538h1v1h-1zM331 528h1v1h-1zM331 518h1v1h-1zM331 508h1v1h-1zM331 498h1v1h-1zM331 488h1v1h-1zM331 478h1v1h-1zM331 468h1v1h-1zM331 458h1v1h-1zM331 448h1v1h-1zM331 438h1v1h-1zM331 428h1v1h-1zM331 418h1v1h-1zM331 408h1v1h-1zM331 398h1v1h-1zM331 388h1v1h-1zM331 378h1v1h-1zM331 368h1v1h-1zM331 358h1v1h-1zM331 348h1v1h-1zM331 338h1v1h-1zM331 328h1v1h-1zM331 318h1v1h-1zM331 308h1v1h-1zM331 298h1v1h-1zM331 288h1v1h-1zM331 278h1v1h-1zM331 268h1v1h-1zM331 258h1v1h-1zM331 248h1v1h-1zM331 238h1v1h-1zM331 228h1v1h-1zM331 218h1v1h-1zM331 208h1v1h-1zM331 198h1v1h-1zM331 188h1v1h-1zM331 178h1v1h-1zM331 168h1v1h-1zM331 158h1v1h-1zM331 148h1v1h-1zM331 138h1v1h-1zM331 128h1v1h-1zM331 118h1v1h-1zM331 108h1v1h-1zM331 98h1v1h-1zM331 88h1v1h-1zM331 78h1v1h-1zM331 68h1v1h-1zM331 58h1v1h-1zM331 48h1v1h-1zM331 38h1v1h-1zM331 28h1v1h-1zM331 18h1v1h-1zM331 8h1v1h-1zM341 568h1v1h-1zM341 558h1v1h-1zM341 548h1v1h-1zM341 538h1v1h-1zM341 528h1v1h-1zM341 518h1v1h-1zM341 508h1v1h-1zM341 498h1v1h-1zM341 488h1v1h-1zM341 478h1v1h-1zM341 468h1v1h-1zM341 458h1v1h-1zM341 448h1v1h-1zM341 438h1v1h-1zM341 428h1v1h-1zM341 418h1v1h-1zM341 408h1v1h-1zM341 398h1v1h-1zM341 388h1v1h-1zM341 378h1v1h-1zM341 368h1v1h-1zM341 358h1v1h-1zM341 348h1v1h-1zM341 338h1v1h-1zM341 328h1v1h-1zM341 318h1v1h-1zM341 308h1v1h-1zM341 298h1v1h-1zM341 288h1v1h-1zM341 278h1v1h-1zM341 268h1v1h-1zM341 258h1v1h-1zM341 248h1v1h-1zM341 238h1v1h-1zM341 228h1v1h-1zM341 218h1v1h-1zM341 208h1v1h-1zM341 198h1v1h-1zM341 188h1v1h-1zM341 178h1v1h-1zM341 168h1v1h-1zM341 158h1v1h-1zM341 148h1v1h-1zM341 138h1v1h-1zM341 128h1v1h-1zM341 118h1v1h-1zM341 108h1v1h-1zM341 98h1v1h-1zM341 88h1v1h-1zM341 78h1v1h-1zM341 68h1v1h-1zM341 58h1v1h-1zM341 48h1v1h-1zM341 38h1v1h-1zM341 28h1v1h-1zM341 18h1v1h-1zM341 8h1v1h-1zM351 568h1v1h-1zM351 558h1v1h-1zM351 548h1v1h-1zM351 538h1v1h-1zM351 528h1v1h-1zM351 518h1v1h-1zM351 508h1v1h-1zM351 498h1v1h-1zM351 488h1v1h-1zM351 478h1v1h-1zM351 468h1v1h-1zM351 458h1v1h-1zM351 448h1v1h-1zM351 438h1v1h-1zM351 428h1v1h-1zM351 418h1v1h-1zM351 408h1v1h-1zM351 398h1v1h-1zM351 388h1v1h-1zM351 378h1v1h-1zM351 368h1v1h-1zM351 358h1v1h-1zM351 348h1v1h-1zM351 338h1v1h-1zM351 328h1v1h-1zM351 318h1v1h-1zM351 308h1v1h-1zM351 298h1v1h-1zM351 288h1v1h-1zM351 278h1v1h-1zM351 268h1v1h-1zM351 258h1v1h-1zM351 248h1v1h-1zM351 238h1v1h-1zM351 228h1v1h-1zM351 218h1v1h-1zM351 208h1v1h-1zM351 198h1v1h-1zM351 188h1v1h-1zM351 178h1v1h-1zM351 168h1v1h-1zM351 158h1v1h-1zM351 148h1v1h-1zM351 138h1v1h-1zM351 128h1v1h-1zM351 118h1v1h-1zM351 108h1v1h-1zM351 98h1v1h-1zM351 88h1v1h-1zM351 78h1v1h-1zM351 68h1v1h-1zM351 58h1v1h-1zM351 48h1v1h-1zM351 38h1v1h-1zM351 28h1v1h-1zM351 18h1v1h-1zM351 8h1v1h-1zM361 568h1v1h-1zM361 558h1v1h-1zM361 548h1v1h-1zM361 538h1v1h-1zM361 528h1v1h-1zM361 518h1v1h-1zM361 508h1v1h-1zM361 498h1v1h-1zM361 488h1v1h-1zM361 478h1v1h-1zM361 468h1v1h-1zM361 458h1v1h-1zM361 448h1v1h-1zM361 438h1v1h-1zM361 428h1v1h-1zM361 418h1v1h-1zM361 408h1v1h-1zM361 398h1v1h-1zM361 388h1v1h-1zM361 378h1v1h-1zM361 368h1v1h-1zM361 358h1v1h-1zM361 348h1v1h-1zM361 338h1v1h-1zM361 328h1v1h-1zM361 318h1v1h-1zM361 308h1v1h-1zM361 298h1v1h-1zM361 288h1v1h-1zM361 278h1v1h-1zM361 268h1v1h-1zM361 258h1v1h-1zM361 248h1v1h-1zM361 238h1v1h-1zM361 228h1v1h-1zM361 218h1v1h-1zM361 208h1v1h-1zM361 198h1v1h-1zM361 188h1v1h-1zM361 178h1v1h-1zM361 168h1v1h-1zM361 158h1v1h-1zM361 148h1v1h-1zM361 138h1v1h-1zM361 128h1v1h-1zM361 118h1v1h-1zM361 108h1v1h-1zM361 98h1v1h-1zM361 88h1v1h-1zM361 78h1v1h-1zM361 68h1v1h-1zM361 58h1v1h-1zM361 48h1v1h-1zM361 38h1v1h-1zM361 28h1v1h-1zM361 18h1v1h-1zM361 8h1v1h-1zM371 568h1v1h-1zM371 558h1v1h-1zM371 548h1v1h-1zM371 538h1v1h-1zM371 528h1v1h-1zM371 518h1v1h-1zM371 508h1v1h-1zM371 498h1v1h-1zM371 488h1v1h-1zM371 478h1v1h-1zM371 468h1v1h-1zM371 458h1v1h-1zM371 448h1v1h-1zM371 438h1v1h-1zM371 428h1v1h-1zM371 418h1v1h-1zM371 408h1v1h-1zM371 398h1v1h-1zM371 388h1v1h-1zM371 378h1v1h-1zM371 368h1v1h-1zM371 358h1v1h-1zM371 348h1v1h-1zM371 338h1v1h-1zM371 328h1v1h-1zM371 318h1v1h-1zM371 308h1v1h-1zM371 298h1v1h-1zM371 288h1v1h-1zM371 278h1v1h-1zM371 268h1v1h-1zM371 258h1v1h-1zM371 248h1v1h-1zM371 238h1v1h-1zM371 228h1v1h-1zM371 218h1v1h-1zM371 208h1v1h-1zM371 198h1v1h-1zM371 188h1v1h-1zM371 178h1v1h-1zM371 168h1v1h-1zM371 158h1v1h-1zM371 148h1v1h-1zM371 138h1v1h-1zM371 128h1v1h-1zM371 118h1v1h-1zM371 108h1v1h-1zM371 98h1v1h-1zM371 88h1v1h-1zM371 78h1v1h-1zM371 68h1v1h-1zM371 58h1v1h-1zM371 48h1v1h-1zM371 38h1v1h-1zM371 28h1v1h-1zM371 18h1v1h-1zM371 8h1v1h-1zM381 568h1v1h-1zM381 558h1v1h-1zM381 548h1v1h-1zM381 538h1v1h-1zM381 528h1v1h-1zM381 518h1v1h-1zM381 508h1v1h-1zM381 498h1v1h-1zM381 488h1v1h-1zM381 478h1v1h-1zM381 468h1v1h-1zM381 458h1v1h-1zM381 448h1v1h-1zM381 438h1v1h-1zM381 428h1v1h-1zM381 418h1v1h-1zM381 408h1v1h-1zM381 398h1v1h-1zM381 388h1v1h-1zM381 378h1v1h-1zM381 368h1v1h-1zM381 358h1v1h-1zM381 348h1v1h-1zM381 338h1v1h-1zM381 328h1v1h-1zM381 318h1v1h-1zM381 308h1v1h-1zM381 298h1v1h-1zM381 288h1v1h-1zM381 278h1v1h-1zM381 268h1v1h-1zM381 258h1v1h-1zM381 248h1v1h-1zM381 238h1v1h-1zM381 228h1v1h-1zM381 218h1v1h-1zM381 208h1v1h-1zM381 198h1v1h-1zM381 188h1v1h-1zM381 178h1v1h-1zM381 168h1v1h-1zM381 158h1v1h-1zM381 148h1v1h-1zM381 138h1v1h-1zM381 128h1v1h-1zM381 118h1v1h-1zM381 108h1v1h-1zM381 98h1v1h-1zM381 88h1v1h-1zM381 78h1v1h-1zM381 68h1v1h-1zM381 58h1v1h-1zM381 48h1v1h-1zM381 38h1v1h-1zM381 28h1v1h-1zM381 18h1v1h-1zM381 8h1v1h-1zM391 568h1v1h-1zM391 558h1v1h-1zM391 548h1v1h-1zM391 538h1v1h-1zM391 528h1v1h-1zM391 518h1v1h-1zM391 508h1v1h-1zM391 498h1v1h-1zM391 488h1v1h-1zM391 478h1v1h-1zM391 468h1v1h-1zM391 458h1v1h-1zM391 448h1v1h-1zM391 438h1v1h-1zM391 428h1v1h-1zM391 418h1v1h-1zM391 408h1v1h-1zM391 398h1v1h-1zM391 388h1v1h-1zM391 378h1v1h-1zM391 368h1v1h-1zM391 358h1v1h-1zM391 348h1v1h-1zM391 338h1v1h-1zM391 328h1v1h-1zM391 318h1v1h-1zM391 308h1v1h-1zM391 298h1v1h-1zM391 288h1v1h-1zM391 278h1v1h-1zM391 268h1v1h-1zM391 258h1v1h-1zM391 248h1v1h-1zM391 238h1v1h-1zM391 228h1v1h-1zM391 218h1v1h-1zM391 208h1v1h-1zM391 198h1v1h-1zM391 188h1v1h-1zM391 178h1v1h-1zM391 168h1v1h-1zM391 158h1v1h-1zM391 148h1v1h-1zM391 138h1v1h-1zM391 128h1v1h-1zM391 118h1v1h-1zM391 108h1v1h-1zM391 98h1v1h-1zM391 88h1v1h-1zM391 78h1v1h-1zM391 68h1v1h-1zM391 58h1v1h-1zM391 48h1v1h-1zM391 38h1v1h-1zM391 28h1v1h-1zM391 18h1v1h-1zM391 8h1v1h-1zM401 568h1v1h-1zM401 558h1v1h-1zM401 548h1v1h-1zM401 538h1v1h-1zM401 528h1v1h-1zM401 518h1v1h-1zM401 508h1v1h-1zM401 498h1v1h-1zM401 488h1v1h-1zM401 478h1v1h-1zM401 468h1v1h-1zM401 458h1v1h-1zM401 448h1v1h-1zM401 438h1v1h-1zM401 428h1v1h-1zM401 418h1v1h-1zM401 408h1v1h-1zM401 398h1v1h-1zM401 388h1v1h-1zM401 378h1v1h-1zM401 368h1v1h-1zM401 358h1v1h-1zM401 348h1v1h-1zM401 338h1v1h-1zM401 328h1v1h-1zM401 318h1v1h-1zM401 308h1v1h-1zM401 298h1v1h-1zM401 288h1v1h-1zM401 278h1v1h-1zM401 268h1v1h-1zM401 258h1v1h-1zM401 248h1v1h-1zM401 238h1v1h-1zM401 228h1v1h-1zM401 218h1v1h-1zM401 208h1v1h-1zM401 198h1v1h-1zM401 188h1v1h-1zM401 178h1v1h-1zM401 168h1v1h-1zM401 158h1v1h-1zM401 148h1v1h-1zM401 138h1v1h-1zM401 128h1v1h-1zM401 118h1v1h-1zM401 108h1v1h-1zM401 98h1v1h-1zM401 88h1v1h-1zM401 78h1v1h-1zM401 68h1v1h-1zM401 58h1v1h-1zM401 48h1v1h-1zM401 38h1v1h-1zM401 28h1v1h-1zM401 18h1v1h-1zM401 8h1v1h-1zM411 568h1v1h-1zM411 558h1v1h-1zM411 548h1v1h-1zM411 538h1v1h-1zM411 528h1v1h-1zM411 518h1v1h-1zM411 508h1v1h-1zM411 498h1v1h-1zM411 488h1v1h-1zM411 478h1v1h-1zM411 468h1v1h-1zM411 458h1v1h-1zM411 448h1v1h-1zM411 438h1v1h-1zM411 428h1v1h-1zM411 418h1v1h-1zM411 408h1v1h-1zM411 398h1v1h-1zM411 388h1v1h-1zM411 378h1v1h-1zM411 368h1v1h-1zM411 358h1v1h-1zM411 348h1v1h-1zM411 338h1v1h-1zM411 328h1v1h-1zM411 318h1v1h-1zM411 308h1v1h-1zM411 298h1v1h-1zM411 288h1v1h-1zM411 278h1v1h-1zM411 268h1v1h-1zM411 258h1v1h-1zM411 248h1v1h-1zM411 238h1v1h-1zM411 228h1v1h-1zM411 218h1v1h-1zM411 208h1v1h-1zM411 198h1v1h-1zM411 188h1v1h-1zM411 178h1v1h-1zM411 168h1v1h-1zM411 158h1v1h-1zM411 148h1v1h-1zM411 138h1v1h-1zM411 128h1v1h-1zM411 118h1v1h-1zM411 108h1v1h-1zM411 98h1v1h-1zM411 88h1v1h-1zM411 78h1v1h-1zM411 68h1v1h-1zM411 58h1v1h-1zM411 48h1v1h-1zM411 38h1v1h-1zM411 28h1v1h-1zM411 18h1v1h-1zM411 8h1v1h-1zM421 568h1v1h-1zM421 558h1v1h-1zM421 548h1v1h-1zM421 538h1v1h-1zM421 528h1v1h-1zM421 518h1v1h-1zM421 508h1v1h-1zM421 498h1v1h-1zM421 488h1v1h-1zM421 478h1v1h-1zM421 468h1v1h-1zM421 458h1v1h-1zM421 448h1v1h-1zM421 438h1v1h-1zM421 428h1v1h-1zM421 418h1v1h-1zM421 408h1v1h-1zM421 398h1v1h-1zM421 388h1v1h-1zM421 378h1v1h-1zM421 368h1v1h-1zM421 358h1v1h-1zM421 348h1v1h-1zM421 338h1v1h-1zM421 328h1v1h-1zM421 318h1v1h-1zM421 308h1v1h-1zM421 298h1v1h-1zM421 288h1v1h-1zM421 278h1v1h-1zM421 268h1v1h-1zM421 258h1v1h-1zM421 248h1v1h-1zM421 238h1v1h-1zM421 228h1v1h-1zM421 218h1v1h-1zM421 208h1v1h-1zM421 198h1v1h-1zM421 188h1v1h-1zM421 178h1v1h-1zM421 168h1v1h-1zM421 158h1v1h-1zM421 148h1v1h-1zM421 138h1v1h-1zM421 128h1v1h-1zM421 118h1v1h-1zM421 108h1v1h-1zM421 98h1v1h-1zM421 88h1v1h-1zM421 78h1v1h-1zM421 68h1v1h-1zM421 58h1v1h-1zM421 48h1v1h-1zM421 38h1v1h-1zM421 28h1v1h-1zM421 18h1v1h-1zM421 8h1v1h-1zM431 568h1v1h-1zM431 558h1v1h-1zM431 548h1v1h-1zM431 538h1v1h-1zM431 528h1v1h-1zM431 518h1v1h-1zM431 508h1v1h-1zM431 498h1v1h-1zM431 488h1v1h-1zM431 478h1v1h-1zM431 468h1v1h-1zM431 458h1v1h-1zM431 448h1v1h-1zM431 438h1v1h-1zM431 428h1v1h-1zM431 418h1v1h-1zM431 408h1v1h-1zM431 398h1v1h-1zM431 388h1v1h-1zM431 378h1v1h-1zM431 368h1v1h-1zM431 358h1v1h-1zM431 348h1v1h-1zM431 338h1v1h-1zM431 328h1v1h-1zM431 318h1v1h-1zM431 308h1v1h-1zM431 298h1v1h-1zM431 288h1v1h-1zM431 278h1v1h-1zM431 268h1v1h-1zM431 258h1v1h-1zM431 248h1v1h-1zM431 238h1v1h-1zM431 228h1v1h-1zM431 218h1v1h-1zM431 208h1v1h-1zM431 198h1v1h-1zM431 188h1v1h-1zM431 178h1v1h-1zM431 168h1v1h-1zM431 158h1v1h-1zM431 148h1v1h-1zM431 138h1v1h-1zM431 128h1v1h-1zM431 118h1v1h-1zM431 108h1v1h-1zM431 98h1v1h-1zM431 88h1v1h-1zM431 78h1v1h-1zM431 68h1v1h-1zM431 58h1v1h-1zM431 48h1v1h-1zM431 38h1v1h-1zM431 28h1v1h-1zM431 18h1v1h-1zM431 8h1v1h-1zM441 568h1v1h-1zM441 558h1v1h-1zM441 548h1v1h-1zM441 538h1v1h-1zM441 528h1v1h-1zM441 518h1v1h-1zM441 508h1v1h-1zM441 498h1v1h-1zM441 488h1v1h-1zM441 478h1v1h-1zM441 468h1v1h-1zM441 458h1v1h-1zM441 448h1v1h-1zM441 438h1v1h-1zM441 428h1v1h-1zM441 418h1v1h-1zM441 408h1v1h-1zM441 398h1v1h-1zM441 388h1v1h-1zM441 378h1v1h-1zM441 368h1v1h-1zM441 358h1v1h-1zM441 348h1v1h-1zM441 338h1v1h-1zM441 328h1v1h-1zM441 318h1v1h-1zM441 308h1v1h-1zM441 298h1v1h-1zM441 288h1v1h-1zM441 278h1v1h-1zM441 268h1v1h-1zM441 258h1v1h-1zM441 248h1v1h-1zM441 238h1v1h-1zM441 228h1v1h-1zM441 218h1v1h-1zM441 208h1v1h-1zM441 198h1v1h-1zM441 188h1v1h-1zM441 178h1v1h-1zM441 168h1v1h-1zM441 158h1v1h-1zM441 148h1v1h-1zM441 138h1v1h-1zM441 128h1v1h-1zM441 118h1v1h-1zM441 108h1v1h-1zM441 98h1v1h-1zM441 88h1v1h-1zM441 78h1v1h-1zM441 68h1v1h-1zM441 58h1v1h-1zM441 48h1v1h-1zM441 38h1v1h-1zM441 28h1v1h-1zM441 18h1v1h-1zM441 8h1v1h-1zM451 568h1v1h-1zM451 558h1v1h-1zM451 548h1v1h-1zM451 538h1v1h-1zM451 528h1v1h-1zM451 518h1v1h-1zM451 508h1v1h-1zM451 498h1v1h-1zM451 488h1v1h-1zM451 478h1v1h-1zM451 468h1v1h-1zM451 458h1v1h-1zM451 448h1v1h-1zM451 438h1v1h-1zM451 428h1v1h-1zM451 418h1v1h-1zM451 408h1v1h-1zM451 398h1v1h-1zM451 388h1v1h-1zM451 378h1v1h-1zM451 368h1v1h-1zM451 358h1v1h-1zM451 348h1v1h-1zM451 338h1v1h-1zM451 328h1v1h-1zM451 318h1v1h-1zM451 308h1v1h-1zM451 298h1v1h-1zM451 288h1v1h-1zM451 278h1v1h-1zM451 268h1v1h-1zM451 258h1v1h-1zM451 248h1v1h-1zM451 238h1v1h-1zM451 228h1v1h-1zM451 218h1v1h-1zM451 208h1v1h-1zM451 198h1v1h-1zM451 188h1v1h-1zM451 178h1v1h-1zM451 168h1v1h-1zM451 158h1v1h-1zM451 148h1v1h-1zM451 138h1v1h-1zM451 128h1v1h-1zM451 118h1v1h-1zM451 108h1v1h-1zM451 98h1v1h-1zM451 88h1v1h-1zM451 78h1v1h-1zM451 68h1v1h-1zM451 58h1v1h-1zM451 48h1v1h-1zM451 38h1v1h-1zM451 28h1v1h-1zM451 18h1v1h-1zM451 8h1v1h-1zM461 568h1v1h-1zM461 558h1v1h-1zM461 548h1v1h-1zM461 538h1v1h-1zM461 528h1v1h-1zM461 518h1v1h-1zM461 508h1v1h-1zM461 498h1v1h-1zM461 488h1v1h-1zM461 478h1v1h-1zM461 468h1v1h-1zM461 458h1v1h-1zM461 448h1v1h-1zM461 438h1v1h-1zM461 428h1v1h-1zM461 418h1v1h-1zM461 408h1v1h-1zM461 398h1v1h-1zM461 388h1v1h-1zM461 378h1v1h-1zM461 368h1v1h-1zM461 358h1v1h-1zM461 348h1v1h-1zM461 338h1v1h-1zM461 328h1v1h-1zM461 318h1v1h-1zM461 308h1v1h-1zM461 298h1v1h-1zM461 288h1v1h-1zM461 278h1v1h-1zM461 268h1v1h-1zM461 258h1v1h-1zM461 248h1v1h-1zM461 238h1v1h-1zM461 228h1v1h-1zM461 218h1v1h-1zM461 208h1v1h-1zM461 198h1v1h-1zM461 188h1v1h-1zM461 178h1v1h-1zM461 168h1v1h-1zM461 158h1v1h-1zM461 148h1v1h-1zM461 138h1v1h-1zM461 128h1v1h-1zM461 118h1v1h-1zM461 108h1v1h-1zM461 98h1v1h-1zM461 88h1v1h-1zM461 78h1v1h-1zM461 68h1v1h-1zM461 58h1v1h-1zM461 48h1v1h-1zM461 38h1v1h-1zM461 28h1v1h-1zM461 18h1v1h-1zM461 8h1v1h-1zM471 568h1v1h-1zM471 558h1v1h-1zM471 548h1v1h-1zM471 538h1v1h-1zM471 528h1v1h-1zM471 518h1v1h-1zM471 508h1v1h-1zM471 498h1v1h-1zM471 488h1v1h-1zM471 478h1v1h-1zM471 468h1v1h-1zM471 458h1v1h-1zM471 448h1v1h-1zM471 438h1v1h-1zM471 428h1v1h-1zM471 418h1v1h-1zM471 408h1v1h-1zM471 398h1v1h-1zM471 388h1v1h-1zM471 378h1v1h-1zM471 368h1v1h-1zM471 358h1v1h-1zM471 348h1v1h-1zM471 338h1v1h-1zM471 328h1v1h-1zM471 318h1v1h-1zM471 308h1v1h-1zM471 298h1v1h-1zM471 288h1v1h-1zM471 278h1v1h-1zM471 268h1v1h-1zM471 258h1v1h-1zM471 248h1v1h-1zM471 238h1v1h-1zM471 228h1v1h-1zM471 218h1v1h-1zM471 208h1v1h-1zM471 198h1v1h-1zM471 188h1v1h-1zM471 178h1v1h-1zM471 168h1v1h-1zM471 158h1v1h-1zM471 148h1v1h-1zM471 138h1v1h-1zM471 128h1v1h-1zM471 118h1v1h-1zM471 108h1v1h-1zM471 98h1v1h-1zM471 88h1v1h-1zM471 78h1v1h-1zM471 68h1v1h-1zM471 58h1v1h-1zM471 48h1v1h-1zM471 38h1v1h-1zM471 28h1v1h-1zM471 18h1v1h-1zM471 8h1v1h-1zM481 568h1v1h-1zM481 558h1v1h-1zM481 548h1v1h-1zM481 538h1v1h-1zM481 528h1v1h-1zM481 518h1v1h-1zM481 508h1v1h-1zM481 498h1v1h-1zM481 488h1v1h-1zM481 478h1v1h-1zM481 468h1v1h-1zM481 458h1v1h-1zM481 448h1v1h-1zM481 438h1v1h-1zM481 428h1v1h-1zM481 418h1v1h-1zM481 408h1v1h-1zM481 398h1v1h-1zM481 388h1v1h-1zM481 378h1v1h-1zM481 368h1v1h-1zM481 358h1v1h-1zM481 348h1v1h-1zM481 338h1v1h-1zM481 328h1v1h-1zM481 318h1v1h-1zM481 308h1v1h-1zM481 298h1v1h-1zM481 288h1v1h-1zM481 278h1v1h-1zM481 268h1v1h-1zM481 258h1v1h-1zM481 248h1v1h-1zM481 238h1v1h-1zM481 228h1v1h-1zM481 218h1v1h-1zM481 208h1v1h-1zM481 198h1v1h-1zM481 188h1v1h-1zM481 178h1v1h-1zM481 168h1v1h-1zM481 158h1v1h-1zM481 148h1v1h-1zM481 138h1v1h-1zM481 128h1v1h-1zM481 118h1v1h-1zM481 108h1v1h-1zM481 98h1v1h-1zM481 88h1v1h-1zM481 78h1v1h-1zM481 68h1v1h-1zM481 58h1v1h-1zM481 48h1v1h-1zM481 38h1v1h-1zM481 28h1v1h-1zM481 18h1v1h-1zM481 8h1v1h-1zM491 568h1v1h-1zM491 558h1v1h-1zM491 548h1v1h-1zM491 538h1v1h-1zM491 528h1v1h-1zM491 518h1v1h-1zM491 508h1v1h-1zM491 498h1v1h-1zM491 488h1v1h-1zM491 478h1v1h-1zM491 468h1v1h-1zM491 458h1v1h-1zM491 448h1v1h-1zM491 438h1v1h-1zM491 428h1v1h-1zM491 418h1v1h-1zM491 408h1v1h-1zM491 398h1v1h-1zM491 388h1v1h-1zM491 378h1v1h-1zM491 368h1v1h-1zM491 358h1v1h-1zM491 348h1v1h-1zM491 338h1v1h-1zM491 328h1v1h-1zM491 318h1v1h-1zM491 308h1v1h-1zM491 298h1v1h-1zM491 288h1v1h-1zM491 278h1v1h-1zM491 268h1v1h-1zM491 258h1v1h-1zM491 248h1v1h-1zM491 238h1v1h-1zM491 228h1v1h-1zM491 218h1v1h-1zM491 208h1v1h-1zM491 198h1v1h-1zM491 188h1v1h-1zM491 178h1v1h-1zM491 168h1v1h-1zM491 158h1v1h-1zM491 148h1v1h-1zM491 138h1v1h-1zM491 128h1v1h-1zM491 118h1v1h-1zM491 108h1v1h-1zM491 98h1v1h-1zM491 88h1v1h-1zM491 78h1v1h-1zM491 68h1v1h-1zM491 58h1v1h-1zM491 48h1v1h-1zM491 38h1v1h-1zM491 28h1v1h-1zM491 18h1v1h-1zM491 8h1v1h-1zM501 568h1v1h-1zM501 558h1v1h-1zM501 548h1v1h-1zM501 538h1v1h-1zM501 528h1v1h-1zM501 518h1v1h-1zM501 508h1v1h-1zM501 498h1v1h-1zM501 488h1v1h-1zM501 478h1v1h-1zM501 468h1v1h-1zM501 458h1v1h-1zM501 448h1v1h-1zM501 438h1v1h-1zM501 428h1v1h-1zM501 418h1v1h-1zM501 408h1v1h-1zM501 398h1v1h-1zM501 388h1v1h-1zM501 378h1v1h-1zM501 368h1v1h-1zM501 358h1v1h-1zM501 348h1v1h-1zM501 338h1v1h-1zM501 328h1v1h-1zM501 318h1v1h-1zM501 308h1v1h-1zM501 298h1v1h-1zM501 288h1v1h-1zM501 278h1v1h-1zM501 268h1v1h-1zM501 258h1v1h-1zM501 248h1v1h-1zM501 238h1v1h-1zM501 228h1v1h-1zM501 218h1v1h-1zM501 208h1v1h-1zM501 198h1v1h-1zM501 188h1v1h-1zM501 178h1v1h-1zM501 168h1v1h-1zM501 158h1v1h-1zM501 148h1v1h-1zM501 138h1v1h-1zM501 128h1v1h-1zM501 118h1v1h-1zM501 108h1v1h-1zM501 98h1v1h-1zM501 88h1v1h-1zM501 78h1v1h-1zM501 68h1v1h-1zM501 58h1v1h-1zM501 48h1v1h-1zM501 38h1v1h-1zM501 28h1v1h-1zM501 18h1v1h-1zM501 8h1v1h-1zM511 568h1v1h-1zM511 558h1v1h-1zM511 548h1v1h-1zM511 538h1v1h-1zM511 528h1v1h-1zM511 518h1v1h-1zM511 508h1v1h-1zM511 498h1v1h-1zM511 488h1v1h-1zM511 478h1v1h-1zM511 468h1v1h-1zM511 458h1v1h-1zM511 448h1v1h-1zM511 438h1v1h-1zM511 428h1v1h-1zM511 418h1v1h-1zM511 408h1v1h-1zM511 398h1v1h-1zM511 388h1v1h-1zM511 378h1v1h-1zM511 368h1v1h-1zM511 358h1v1h-1zM511 348h1v1h-1zM511 338h1v1h-1zM511 328h1v1h-1zM511 318h1v1h-1zM511 308h1v1h-1zM511 298h1v1h-1zM511 288h1v1h-1zM511 278h1v1h-1zM511 268h1v1h-1zM511 258h1v1h-1zM511 248h1v1h-1zM511 238h1v1h-1zM511 228h1v1h-1zM511 218h1v1h-1zM511 208h1v1h-1zM511 198h1v1h-1zM511 188h1v1h-1zM511 178h1v1h-1zM511 168h1v1h-1zM511 158h1v1h-1zM511 148h1v1h-1zM511 138h1v1h-1zM511 128h1v1h-1zM511 118h1v1h-1zM511 108h1v1h-1zM511 98h1v1h-1zM511 88h1v1h-1zM511 78h1v1h-1zM511 68h1v1h-1zM511 58h1v1h-1zM511 48h1v1h-1zM511 38h1v1h-1zM511 28h1v1h-1zM511 18h1v1h-1zM511 8h1v1h-1zM521 568h1v1h-1zM521 558h1v1h-1zM521 548h1v1h-1zM521 538h1v1h-1zM521 528h1v1h-1zM521 518h1v1h-1zM521 508h1v1h-1zM521 498h1v1h-1zM521 488h1v1h-1zM521 478h1v1h-1zM521 468h1v1h-1zM521 458h1v1h-1zM521 448h1v1h-1zM521 438h1v1h-1zM521 428h1v1h-1zM521 418h1v1h-1zM521 408h1v1h-1zM521 398h1v1h-1zM521 388h1v1h-1zM521 378h1v1h-1zM521 368h1v1h-1zM521 358h1v1h-1zM521 348h1v1h-1zM521 338h1v1h-1zM521 328h1v1h-1zM521 318h1v1h-1zM521 308h1v1h-1zM521 298h1v1h-1zM521 288h1v1h-1zM521 278h1v1h-1zM521 268h1v1h-1zM521 258h1v1h-1zM521 248h1v1h-1zM521 238h1v1h-1zM521 228h1v1h-1zM521 218h1v1h-1zM521 208h1v1h-1zM521 198h1v1h-1zM521 188h1v1h-1zM521 178h1v1h-1zM521 168h1v1h-1zM521 158h1v1h-1zM521 148h1v1h-1zM521 138h1v1h-1zM521 128h1v1h-1zM521 118h1v1h-1zM521 108h1v1h-1zM521 98h1v1h-1zM521 88h1v1h-1zM521 78h1v1h-1zM521 68h1v1h-1zM521 58h1v1h-1zM521 48h1v1h-1zM521 38h1v1h-1zM521 28h1v1h-1zM521 18h1v1h-1zM521 8h1v1h-1zM531 568h1v1h-1zM531 558h1v1h-1zM531 548h1v1h-1zM531 538h1v1h-1zM531 528h1v1h-1zM531 518h1v1h-1zM531 508h1v1h-1zM531 498h1v1h-1zM531 488h1v1h-1zM531 478h1v1h-1zM531 468h1v1h-1zM531 458h1v1h-1zM531 448h1v1h-1zM531 438h1v1h-1zM531 428h1v1h-1zM531 418h1v1h-1zM531 408h1v1h-1zM531 398h1v1h-1zM531 388h1v1h-1zM531 378h1v1h-1zM531 368h1v1h-1zM531 358h1v1h-1zM531 348h1v1h-1zM531 338h1v1h-1zM531 328h1v1h-1zM531 318h1v1h-1zM531 308h1v1h-1zM531 298h1v1h-1zM531 288h1v1h-1zM531 278h1v1h-1zM531 268h1v1h-1zM531 258h1v1h-1zM531 248h1v1h-1zM531 238h1v1h-1zM531 228h1v1h-1zM531 218h1v1h-1zM531 208h1v1h-1zM531 198h1v1h-1zM531 188h1v1h-1zM531 178h1v1h-1zM531 168h1v1h-1zM531 158h1v1h-1zM531 148h1v1h-1zM531 138h1v1h-1zM531 128h1v1h-1zM531 118h1v1h-1zM531 108h1v1h-1zM531 98h1v1h-1zM531 88h1v1h-1zM531 78h1v1h-1zM531 68h1v1h-1zM531 58h1v1h-1zM531 48h1v1h-1zM531 38h1v1h-1zM531 28h1v1h-1zM531 18h1v1h-1zM531 8h1v1h-1zM541 568h1v1h-1zM541 558h1v1h-1zM541 548h1v1h-1zM541 538h1v1h-1zM541 528h1v1h-1zM541 518h1v1h-1zM541 508h1v1h-1zM541 498h1v1h-1zM541 488h1v1h-1zM541 478h1v1h-1zM541 468h1v1h-1zM541 458h1v1h-1zM541 448h1v1h-1zM541 438h1v1h-1zM541 428h1v1h-1zM541 418h1v1h-1zM541 408h1v1h-1zM541 398h1v1h-1zM541 388h1v1h-1zM541 378h1v1h-1zM541 368h1v1h-1zM541 358h1v1h-1zM541 348h1v1h-1zM541 338h1v1h-1zM541 328h1v1h-1zM541 318h1v1h-1zM541 308h1v1h-1zM541 298h1v1h-1zM541 288h1v1h-1zM541 278h1v1h-1zM541 268h1v1h-1zM541 258h1v1h-1zM541 248h1v1h-1zM541 238h1v1h-1zM541 228h1v1h-1zM541 218h1v1h-1zM541 208h1v1h-1zM541 198h1v1h-1zM541 188h1v1h-1zM541 178h1v1h-1zM541 168h1v1h-1zM541 158h1v1h-1zM541 148h1v1h-1zM541 138h1v1h-1zM541 128h1v1h-1zM541 118h1v1h-1zM541 108h1v1h-1zM541 98h1v1h-1zM541 88h1v1h-1zM541 78h1v1h-1zM541 68h1v1h-1zM541 58h1v1h-1zM541 48h1v1h-1zM541 38h1v1h-1zM541 28h1v1h-1zM541 18h1v1h-1zM541 8h1v1h-1zM551 568h1v1h-1zM551 558h1v1h-1zM551 548h1v1h-1zM551 538h1v1h-1zM551 528h1v1h-1zM551 518h1v1h-1zM551 508h1v1h-1zM551 498h1v1h-1zM551 488h1v1h-1zM551 478h1v1h-1zM551 468h1v1h-1zM551 458h1v1h-1zM551 448h1v1h-1zM551 438h1v1h-1zM551 428h1v1h-1zM551 418h1v1h-1zM551 408h1v1h-1zM551 398h1v1h-1zM551 388h1v1h-1zM551 378h1v1h-1zM551 368h1v1h-1zM551 358h1v1h-1zM551 348h1v1h-1zM551 338h1v1h-1zM551 328h1v1h-1zM551 318h1v1h-1zM551 308h1v1h-1zM551 298h1v1h-1zM551 288h1v1h-1zM551 278h1v1h-1zM551 268h1v1h-1zM551 258h1v1h-1zM551 248h1v1h-1zM551 238h1v1h-1zM551 228h1v1h-1zM551 218h1v1h-1zM551 208h1v1h-1zM551 198h1v1h-1zM551 188h1v1h-1zM551 178h1v1h-1zM551 168h1v1h-1zM551 158h1v1h-1zM551 148h1v1h-1zM551 138h1v1h-1zM551 128h1v1h-1zM551 118h1v1h-1zM551 108h1v1h-1zM551 98h1v1h-1zM551 88h1v1h-1zM551 78h1v1h-1zM551 68h1v1h-1zM551 58h1v1h-1zM551 48h1v1h-1zM551 38h1v1h-1zM551 28h1v1h-1zM551 18h1v1h-1zM551 8h1v1h-1zM561 568h1v1h-1zM561 558h1v1h-1zM561 548h1v1h-1zM561 538h1v1h-1zM561 528h1v1h-1zM561 518h1v1h-1zM561 508h1v1h-1zM561 498h1v1h-1zM561 488h1v1h-1zM561 478h1v1h-1zM561 468h1v1h-1zM561 458h1v1h-1zM561 448h1v1h-1zM561 438h1v1h-1zM561 428h1v1h-1zM561 418h1v1h-1zM561 408h1v1h-1zM561 398h1v1h-1zM561 388h1v1h-1zM561 378h1v1h-1zM561 368h1v1h-1zM561 358h1v1h-1zM561 348h1v1h-1zM561 338h1v1h-1zM561 328h1v1h-1zM561 318h1v1h-1zM561 308h1v1h-1zM561 298h1v1h-1zM561 288h1v1h-1zM561 278h1v1h-1zM561 268h1v1h-1zM561 258h1v1h-1zM561 248h1v1h-1zM561 238h1v1h-1zM561 228h1v1h-1zM561 218h1v1h-1zM561 208h1v1h-1zM561 198h1v1h-1zM561 188h1v1h-1zM561 178h1v1h-1zM561 168h1v1h-1zM561 158h1v1h-1zM561 148h1v1h-1zM561 138h1v1h-1zM561 128h1v1h-1zM561 118h1v1h-1zM561 108h1v1h-1zM561 98h1v1h-1zM561 88h1v1h-1zM561 78h1v1h-1zM561 68h1v1h-1zM561 58h1v1h-1zM561 48h1v1h-1zM561 38h1v1h-1zM561 28h1v1h-1zM561 18h1v1h-1zM561 8h1v1h-1zM571 568h1v1h-1zM571 558h1v1h-1zM571 548h1v1h-1zM571 538h1v1h-1zM571 528h1v1h-1zM571 518h1v1h-1zM571 508h1v1h-1zM571 498h1v1h-1zM571 488h1v1h-1zM571 478h1v1h-1zM571 468h1v1h-1zM571 458h1v1h-1zM571 448h1v1h-1zM571 438h1v1h-1zM571 428h1v1h-1zM571 418h1v1h-1zM571 408h1v1h-1zM571 398h1v1h-1zM571 388h1v1h-1zM571 378h1v1h-1zM571 368h1v1h-1zM571 358h1v1h-1zM571 348h1v1h-1zM571 338h1v1h-1zM571 328h1v1h-1zM571 318h1v1h-1zM571 308h1v1h-1zM571 298h1v1h-1zM571 288h1v1h-1zM571 278h1v1h-1zM571 268h1v1h-1zM571 258h1v1h-1zM571 248h1v1h-1zM571 238h1v1h-1zM571 228h1v1h-1zM571 218h1v1h-1zM571 208h1v1h-1zM571 198h1v1h-1zM571 188h1v1h-1zM571 178h1v1h-1zM571 168h1v1h-1zM571 158h1v1h-1zM571 148h1v1h-1zM571 138h1v1h-1zM571 128h1v1h-1zM571 118h1v1h-1zM571 108h1v1h-1zM571 98h1v1h-1zM571 88h1v1h-1zM571 78h1v1h-1zM571 68h1v1h-1zM571 58h1v1h-1zM571 48h1v1h-1zM571 38h1v1h-1zM571 28h1v1h-1zM571 18h1v1h-1zM571 8h1v1h-1zM581 568h1v1h-1zM581 558h1v1h-1zM581 548h1v1h-1zM581 538h1v1h-1zM581 528h1v1h-1zM581 518h1v1h-1zM581 508h1v1h-1zM581 498h1v1h-1zM581 488h1v1h-1zM581 478h1v1h-1zM581 468h1v1h-1zM581 458h1v1h-1zM581 448h1v1h-1zM581 438h1v1h-1zM581 428h1v1h-1zM581 418h1v1h-1zM581 408h1v1h-1zM581 398h1v1h-1zM581 388h1v1h-1zM581 378h1v1h-1zM581 368h1v1h-1zM581 358h1v1h-1zM581 348h1v1h-1zM581 338h1v1h-1zM581 328h1v1h-1zM581 318h1v1h-1zM581 308h1v1h-1zM581 298h1v1h-1zM581 288h1v1h-1zM581 278h1v1h-1zM581 268h1v1h-1zM581 258h1v1h-1zM581 248h1v1h-1zM581 238h1v1h-1zM581 228h1v1h-1zM581 218h1v1h-1zM581 208h1v1h-1zM581 198h1v1h-1zM581 188h1v1h-1zM581 178h1v1h-1zM581 168h1v1h-1zM581 158h1v1h-1zM581 148h1v1h-1zM581 138h1v1h-1zM581 128h1v1h-1zM581 118h1v1h-1zM581 108h1v1h-1zM581 98h1v1h-1zM581 88h1v1h-1zM581 78h1v1h-1zM581 68h1v1h-1zM581 58h1v1h-1zM581 48h1v1h-1zM581 38h1v1h-1zM581 28h1v1h-1zM581 18h1v1h-1zM581 8h1v1h-1zM591 568h1v1h-1zM591 558h1v1h-1zM591 548h1v1h-1zM591 538h1v1h-1zM591 528h1v1h-1zM591 518h1v1h-1zM591 508h1v1h-1zM591 498h1v1h-1zM591 488h1v1h-1zM591 478h1v1h-1zM591 468h1v1h-1zM591 458h1v1h-1zM591 448h1v1h-1zM591 438h1v1h-1zM591 428h1v1h-1zM591 418h1v1h-1zM591 408h1v1h-1zM591 398h1v1h-1zM591 388h1v1h-1zM591 378h1v1h-1zM591 368h1v1h-1zM591 358h1v1h-1zM591 348h1v1h-1zM591 338h1v1h-1zM591 328h1v1h-1zM591 318h1v1h-1zM591 308h1v1h-1zM591 298h1v1h-1zM591 288h1v1h-1zM591 278h1v1h-1zM591 268h1v1h-1zM591 258h1v1h-1zM591 248h1v1h-1zM591 238h1v1h-1zM591 228h1v1h-1zM591 218h1v1h-1zM591 208h1v1h-1zM591 198h1v1h-1zM591 188h1v1h-1zM591 178h1v1h-1zM591 168h1v1h-1zM591 158h1v1h-1zM591 148h1v1h-1zM591 138h1v1h-1zM591 128h1v1h-1zM591 118h1v1h-1zM591 108h1v1h-1zM591 98h1v1h-1zM591 88h1v1h-1zM591 78h1v1h-1zM591 68h1v1h-1zM591 58h1v1h-1zM591 48h1v1h-1zM591 38h1v1h-1zM591 28h1v1h-1zM591 18h1v1h-1zM591 8h1v1h-1zM601 568h1v1h-1zM601 558h1v1h-1zM601 548h1v1h-1zM601 538h1v1h-1zM601 528h1v1h-1zM601 518h1v1h-1zM601 508h1v1h-1zM601 498h1v1h-1zM601 488h1v1h-1zM601 478h1v1h-1zM601 468h1v1h-1zM601 458h1v1h-1zM601 448h1v1h-1zM601 438h1v1h-1zM601 428h1v1h-1zM601 418h1v1h-1zM601 408h1v1h-1zM601 398h1v1h-1zM601 388h1v1h-1zM601 378h1v1h-1zM601 368h1v1h-1zM601 358h1v1h-1zM601 348h1v1h-1zM601 338h1v1h-1zM601 328h1v1h-1zM601 318h1v1h-1zM601 308h1v1h-1zM601 298h1v1h-1zM601 288h1v1h-1zM601 278h1v1h-1zM601 268h1v1h-1zM601 258h1v1h-1zM601 248h1v1h-1zM601 238h1v1h-1zM601 228h1v1h-1zM601 218h1v1h-1zM601 208h1v1h-1zM601 198h1v1h-1zM601 188h1v1h-1zM601 178h1v1h-1zM601 168h1v1h-1zM601 158h1v1h-1zM601 148h1v1h-1zM601 138h1v1h-1zM601 128h1v1h-1zM601 118h1v1h-1zM601 108h1v1h-1zM601 98h1v1h-1zM601 88h1v1h-1zM601 78h1v1h-1zM601 68h1v1h-1zM601 58h1v1h-1zM601 48h1v1h-1zM601 38h1v1h-1zM601 28h1v1h-1zM601 18h1v1h-1zM601 8h1v1h-1zM611 568h1v1h-1zM611 558h1v1h-1zM611 548h1v1h-1zM611 538h1v1h-1zM611 528h1v1h-1zM611 518h1v1h-1zM611 508h1v1h-1zM611 498h1v1h-1zM611 488h1v1h-1zM611 478h1v1h-1zM611 468h1v1h-1zM611 458h1v1h-1zM611 448h1v1h-1zM611 438h1v1h-1zM611 428h1v1h-1zM611 418h1v1h-1zM611 408h1v1h-1zM611 398h1v1h-1zM611 388h1v1h-1zM611 378h1v1h-1zM611 368h1v1h-1zM611 358h1v1h-1zM611 348h1v1h-1zM611 338h1v1h-1zM611 328h1v1h-1zM611 318h1v1h-1zM611 308h1v1h-1zM611 298h1v1h-1zM611 288h1v1h-1zM611 278h1v1h-1zM611 268h1v1h-1zM611 258h1v1h-1zM611 248h1v1h-1zM611 238h1v1h-1zM611 228h1v1h-1zM611 218h1v1h-1zM611 208h1v1h-1zM611 198h1v1h-1zM611 188h1v1h-1zM611 178h1v1h-1zM611 168h1v1h-1zM611 158h1v1h-1zM611 148h1v1h-1zM611 138h1v1h-1zM611 128h1v1h-1zM611 118h1v1h-1zM611 108h1v1h-1zM611 98h1v1h-1zM611 88h1v1h-1zM611 78h1v1h-1zM611 68h1v1h-1zM611 58h1v1h-1zM611 48h1v1h-1zM611 38h1v1h-1zM611 28h1v1h-1zM611 18h1v1h-1zM611 8h1v1h-1zM621 568h1v1h-1zM621 558h1v1h-1zM621 548h1v1h-1zM621 538h1v1h-1zM621 528h1v1h-1zM621 518h1v1h-1zM621 508h1v1h-1zM621 498h1v1h-1zM621 488h1v1h-1zM621 478h1v1h-1zM621 468h1v1h-1zM621 458h1v1h-1zM621 448h1v1h-1zM621 438h1v1h-1zM621 428h1v1h-1zM621 418h1v1h-1zM621 408h1v1h-1zM621 398h1v1h-1zM621 388h1v1h-1zM621 378h1v1h-1zM621 368h1v1h-1zM621 358h1v1h-1zM621 348h1v1h-1zM621 338h1v1h-1zM621 328h1v1h-1zM621 318h1v1h-1zM621 308h1v1h-1zM621 298h1v1h-1zM621 288h1v1h-1zM621 278h1v1h-1zM621 268h1v1h-1zM621 258h1v1h-1zM621 248h1v1h-1zM621 238h1v1h-1zM621 228h1v1h-1zM621 218h1v1h-1zM621 208h1v1h-1zM621 198h1v1h-1zM621 188h1v1h-1zM621 178h1v1h-1zM621 168h1v1h-1zM621 158h1v1h-1zM621 148h1v1h-1zM621 138h1v1h-1zM621 128h1v1h-1zM621 118h1v1h-1zM621 108h1v1h-1zM621 98h1v1h-1zM621 88h1v1h-1zM621 78h1v1h-1zM621 68h1v1h-1zM621 58h1v1h-1zM621 48h1v1h-1zM621 38h1v1h-1zM621 28h1v1h-1zM621 18h1v1h-1zM621 8h1v1h-1zM631 568h1v1h-1zM631 558h1v1h-1zM631 548h1v1h-1zM631 538h1v1h-1zM631 528h1v1h-1zM631 518h1v1h-1zM631 508h1v1h-1zM631 498h1v1h-1zM631 488h1v1h-1zM631 478h1v1h-1zM631 468h1v1h-1zM631 458h1v1h-1zM631 448h1v1h-1zM631 438h1v1h-1zM631 428h1v1h-1zM631 418h1v1h-1zM631 408h1v1h-1zM631 398h1v1h-1zM631 388h1v1h-1zM631 378h1v1h-1zM631 368h1v1h-1zM631 358h1v1h-1zM631 348h1v1h-1zM631 338h1v1h-1zM631 328h1v1h-1zM631 318h1v1h-1zM631 308h1v1h-1zM631 298h1v1h-1zM631 288h1v1h-1zM631 278h1v1h-1zM631 268h1v1h-1zM631 258h1v1h-1zM631 248h1v1h-1zM631 238h1v1h-1zM631 228h1v1h-1zM631 218h1v1h-1zM631 208h1v1h-1zM631 198h1v1h-1zM631 188h1v1h-1zM631 178h1v1h-1zM631 168h1v1h-1zM631 158h1v1h-1zM631 148h1v1h-1zM631 138h1v1h-1zM631 128h1v1h-1zM631 118h1v1h-1zM631 108h1v1h-1zM631 98h1v1h-1zM631 88h1v1h-1zM631 78h1v1h-1zM631 68h1v1h-1zM631 58h1v1h-1zM631 48h1v1h-1zM631 38h1v1h-1zM631 28h1v1h-1zM631 18h1v1h-1zM631 8h1v1h-1zM641 568h1v1h-1zM641 558h1v1h-1zM641 548h1v1h-1zM641 538h1v1h-1zM641 528h1v1h-1zM641 518h1v1h-1zM641 508h1v1h-1zM641 498h1v1h-1zM641 488h1v1h-1zM641 478h1v1h-1zM641 468h1v1h-1zM641 458h1v1h-1zM641 448h1v1h-1zM641 438h1v1h-1zM641 428h1v1h-1zM641 418h1v1h-1zM641 408h1v1h-1zM641 398h1v1h-1zM641 388h1v1h-1zM641 378h1v1h-1zM641 368h1v1h-1zM641 358h1v1h-1zM641 348h1v1h-1zM641 338h1v1h-1zM641 328h1v1h-1zM641 318h1v1h-1zM641 308h1v1h-1zM641 298h1v1h-1zM641 288h1v1h-1zM641 278h1v1h-1zM641 268h1v1h-1zM641 258h1v1h-1zM641 248h1v1h-1zM641 238h1v1h-1zM641 228h1v1h-1zM641 218h1v1h-1zM641 208h1v1h-1zM641 198h1v1h-1zM641 188h1v1h-1zM641 178h1v1h-1zM641 168h1v1h-1zM641 158h1v1h-1zM641 148h1v1h-1zM641 138h1v1h-1zM641 128h1v1h-1zM641 118h1v1h-1zM641 108h1v1h-1zM641 98h1v1h-1zM641 88h1v1h-1zM641 78h1v1h-1zM641 68h1v1h-1zM641 58h1v1h-1zM641 48h1v1h-1zM641 38h1v1h-1zM641 28h1v1h-1zM641 18h1v1h-1zM641 8h1v1h-1zM651 568h1v1h-1zM651 558h1v1h-1zM651 548h1v1h-1zM651 538h1v1h-1zM651 528h1v1h-1zM651 518h1v1h-1zM651 508h1v1h-1zM651 498h1v1h-1zM651 488h1v1h-1zM651 478h1v1h-1zM651 468h1v1h-1zM651 458h1v1h-1zM651 448h1v1h-1zM651 438h1v1h-1zM651 428h1v1h-1zM651 418h1v1h-1zM651 408h1v1h-1zM651 398h1v1h-1zM651 388h1v1h-1zM651 378h1v1h-1zM651 368h1v1h-1zM651 358h1v1h-1zM651 348h1v1h-1zM651 338h1v1h-1zM651 328h1v1h-1zM651 318h1v1h-1zM651 308h1v1h-1zM651 298h1v1h-1zM651 288h1v1h-1zM651 278h1v1h-1zM651 268h1v1h-1zM651 258h1v1h-1zM651 248h1v1h-1zM651 238h1v1h-1zM651 228h1v1h-1zM651 218h1v1h-1zM651 208h1v1h-1zM651 198h1v1h-1zM651 188h1v1h-1zM651 178h1v1h-1zM651 168h1v1h-1zM651 158h1v1h-1zM651 148h1v1h-1zM651 138h1v1h-1zM651 128h1v1h-1zM651 118h1v1h-1zM651 108h1v1h-1zM651 98h1v1h-1zM651 88h1v1h-1zM651 78h1v1h-1zM651 68h1v1h-1zM651 58h1v1h-1zM651 48h1v1h-1zM651 38h1v1h-1zM651 28h1v1h-1zM651 18h1v1h-1zM651 8h1v1h-1zM661 568h1v1h-1zM661 558h1v1h-1zM661 548h1v1h-1zM661 538h1v1h-1zM661 528h1v1h-1zM661 518h1v1h-1zM661 508h1v1h-1zM661 498h1v1h-1zM661 488h1v1h-1zM661 478h1v1h-1zM661 468h1v1h-1zM661 458h1v1h-1zM661 448h1v1h-1zM661 438h1v1h-1zM661 428h1v1h-1zM661 418h1v1h-1zM661 408h1v1h-1zM661 398h1v1h-1zM661 388h1v1h-1zM661 378h1v1h-1zM661 368h1v1h-1zM661 358h1v1h-1zM661 348h1v1h-1zM661 338h1v1h-1zM661 328h1v1h-1zM661 318h1v1h-1zM661 308h1v1h-1zM661 298h1v1h-1zM661 288h1v1h-1zM661 278h1v1h-1zM661 268h1v1h-1zM661 258h1v1h-1zM661 248h1v1h-1zM661 238h1v1h-1zM661 228h1v1h-1zM661 218h1v1h-1zM661 208h1v1h-1zM661 198h1v1h-1zM661 188h1v1h-1zM661 178h1v1h-1zM661 168h1v1h-1zM661 158h1v1h-1zM661 148h1v1h-1zM661 138h1v1h-1zM661 128h1v1h-1zM661 118h1v1h-1zM661 108h1v1h-1zM661 98h1v1h-1zM661 88h1v1h-1zM661 78h1v1h-1zM661 68h1v1h-1zM661 58h1v1h-1zM661 48h1v1h-1zM661 38h1v1h-1zM661 28h1v1h-1zM661 18h1v1h-1zM661 8h1v1h-1zM671 568h1v1h-1zM671 558h1v1h-1zM671 548h1v1h-1zM671 538h1v1h-1zM671 528h1v1h-1zM671 518h1v1h-1zM671 508h1v1h-1zM671 498h1v1h-1zM671 488h1v1h-1zM671 478h1v1h-1zM671 468h1v1h-1zM671 458h1v1h-1zM671 448h1v1h-1zM671 438h1v1h-1zM671 428h1v1h-1zM671 418h1v1h-1zM671 408h1v1h-1zM671 398h1v1h-1zM671 388h1v1h-1zM671 378h1v1h-1zM671 368h1v1h-1zM671 358h1v1h-1zM671 348h1v1h-1zM671 338h1v1h-1zM671 328h1v1h-1zM671 318h1v1h-1zM671 308h1v1h-1zM671 298h1v1h-1zM671 288h1v1h-1zM671 278h1v1h-1zM671 268h1v1h-1zM671 258h1v1h-1zM671 248h1v1h-1zM671 238h1v1h-1zM671 228h1v1h-1zM671 218h1v1h-1zM671 208h1v1h-1zM671 198h1v1h-1zM671 188h1v1h-1zM671 178h1v1h-1zM671 168h1v1h-1zM671 158h1v1h-1zM671 148h1v1h-1zM671 138h1v1h-1zM671 128h1v1h-1zM671 118h1v1h-1zM671 108h1v1h-1zM671 98h1v1h-1zM671 88h1v1h-1zM671 78h1v1h-1zM671 68h1v1h-1zM671 58h1v1h-1zM671 48h1v1h-1zM671 38h1v1h-1zM671 28h1v1h-1zM671 18h1v1h-1zM671 8h1v1h-1zM681 568h1v1h-1zM681 558h1v1h-1zM681 548h1v1h-1zM681 538h1v1h-1zM681 528h1v1h-1zM681 518h1v1h-1zM681 508h1v1h-1zM681 498h1v1h-1zM681 488h1v1h-1zM681 478h1v1h-1zM681 468h1v1h-1zM681 458h1v1h-1zM681 448h1v1h-1zM681 438h1v1h-1zM681 428h1v1h-1zM681 418h1v1h-1zM681 408h1v1h-1zM681 398h1v1h-1zM681 388h1v1h-1zM681 378h1v1h-1zM681 368h1v1h-1zM681 358h1v1h-1zM681 348h1v1h-1zM681 338h1v1h-1zM681 328h1v1h-1zM681 318h1v1h-1zM681 308h1v1h-1zM681 298h1v1h-1zM681 288h1v1h-1zM681 278h1v1h-1zM681 268h1v1h-1zM681 258h1v1h-1zM681 248h1v1h-1zM681 238h1v1h-1zM681 228h1v1h-1zM681 218h1v1h-1zM681 208h1v1h-1zM681 198h1v1h-1zM681 188h1v1h-1zM681 178h1v1h-1zM681 168h1v1h-1zM681 158h1v1h-1zM681 148h1v1h-1zM681 138h1v1h-1zM681 128h1v1h-1zM681 118h1v1h-1zM681 108h1v1h-1zM681 98h1v1h-1zM681 88h1v1h-1zM681 78h1v1h-1zM681 68h1v1h-1zM681 58h1v1h-1zM681 48h1v1h-1zM681 38h1v1h-1zM681 28h1v1h-1zM681 18h1v1h-1zM681 8h1v1h-1zM691 568h1v1h-1zM691 558h1v1h-1zM691 548h1v1h-1zM691 538h1v1h-1zM691 528h1v1h-1zM691 518h1v1h-1zM691 508h1v1h-1zM691 498h1v1h-1zM691 488h1v1h-1zM691 478h1v1h-1zM691 468h1v1h-1zM691 458h1v1h-1zM691 448h1v1h-1zM691 438h1v1h-1zM691 428h1v1h-1zM691 418h1v1h-1zM691 408h1v1h-1zM691 398h1v1h-1zM691 388h1v1h-1zM691 378h1v1h-1zM691 368h1v1h-1zM691 358h1v1h-1zM691 348h1v1h-1zM691 338h1v1h-1zM691 328h1v1h-1zM691 318h1v1h-1zM691 308h1v1h-1zM691 298h1v1h-1zM691 288h1v1h-1zM691 278h1v1h-1zM691 268h1v1h-1zM691 258h1v1h-1zM691 248h1v1h-1zM691 238h1v1h-1zM691 228h1v1h-1zM691 218h1v1h-1zM691 208h1v1h-1zM691 198h1v1h-1zM691 188h1v1h-1zM691 178h1v1h-1zM691 168h1v1h-1zM691 158h1v1h-1zM691 148h1v1h-1zM691 138h1v1h-1zM691 128h1v1h-1zM691 118h1v1h-1zM691 108h1v1h-1zM691 98h1v1h-1zM691 88h1v1h-1zM691 78h1v1h-1zM691 68h1v1h-1zM691 58h1v1h-1zM691 48h1v1h-1zM691 38h1v1h-1zM691 28h1v1h-1zM691 18h1v1h-1zM691 8h1v1h-1zM701 568h1v1h-1zM701 558h1v1h-1zM701 548h1v1h-1zM701 538h1v1h-1zM701 528h1v1h-1zM701 518h1v1h-1zM701 508h1v1h-1zM701 498h1v1h-1zM701 488h1v1h-1zM701 478h1v1h-1zM701 468h1v1h-1zM701 458h1v1h-1zM701 448h1v1h-1zM701 438h1v1h-1zM701 428h1v1h-1zM701 418h1v1h-1zM701 408h1v1h-1zM701 398h1v1h-1zM701 388h1v1h-1zM701 378h1v1h-1zM701 368h1v1h-1zM701 358h1v1h-1zM701 348h1v1h-1zM701 338h1v1h-1zM701 328h1v1h-1zM701 318h1v1h-1zM701 308h1v1h-1zM701 298h1v1h-1zM701 288h1v1h-1zM701 278h1v1h-1zM701 268h1v1h-1zM701 258h1v1h-1zM701 248h1v1h-1zM701 238h1v1h-1zM701 228h1v1h-1zM701 218h1v1h-1zM701 208h1v1h-1zM701 198h1v1h-1zM701 188h1v1h-1zM701 178h1v1h-1zM701 168h1v1h-1zM701 158h1v1h-1zM701 148h1v1h-1zM701 138h1v1h-1zM701 128h1v1h-1zM701 118h1v1h-1zM701 108h1v1h-1zM701 98h1v1h-1zM701 88h1v1h-1zM701 78h1v1h-1zM701 68h1v1h-1zM701 58h1v1h-1zM701 48h1v1h-1zM701 38h1v1h-1zM701 28h1v1h-1zM701 18h1v1h-1zM701 8h1v1h-1zM711 568h1v1h-1zM711 558h1v1h-1zM711 548h1v1h-1zM711 538h1v1h-1zM711 528h1v1h-1zM711 518h1v1h-1zM711 508h1v1h-1zM711 498h1v1h-1zM711 488h1v1h-1zM711 478h1v1h-1zM711 468h1v1h-1zM711 458h1v1h-1zM711 448h1v1h-1zM711 438h1v1h-1zM711 428h1v1h-1zM711 418h1v1h-1zM711 408h1v1h-1zM711 398h1v1h-1zM711 388h1v1h-1zM711 378h1v1h-1zM711 368h1v1h-1zM711 358h1v1h-1zM711 348h1v1h-1zM711 338h1v1h-1zM711 328h1v1h-1zM711 318h1v1h-1zM711 308h1v1h-1zM711 298h1v1h-1zM711 288h1v1h-1zM711 278h1v1h-1zM711 268h1v1h-1zM711 258h1v1h-1zM711 248h1v1h-1zM711 238h1v1h-1zM711 228h1v1h-1zM711 218h1v1h-1zM711 208h1v1h-1zM711 198h1v1h-1zM711 188h1v1h-1zM711 178h1v1h-1zM711 168h1v1h-1zM711 158h1v1h-1zM711 148h1v1h-1zM711 138h1v1h-1zM711 128h1v1h-1zM711 118h1v1h-1zM711 108h1v1h-1zM711 98h1v1h-1zM711 88h1v1h-1zM711 78h1v1h-1zM711 68h1v1h-1zM711 58h1v1h-1zM711 48h1v1h-1zM711 38h1v1h-1zM711 28h1v1h-1zM711 18h1v1h-1zM711 8h1v1h-1zM721 568h1v1h-1zM721 558h1v1h-1zM721 548h1v1h-1zM721 538h1v1h-1zM721 528h1v1h-1zM721 518h1v1h-1zM721 508h1v1h-1zM721 498h1v1h-1zM721 488h1v1h-1zM721 478h1v1h-1zM721 468h1v1h-1zM721 458h1v1h-1zM721 448h1v1h-1zM721 438h1v1h-1zM721 428h1v1h-1zM721 418h1v1h-1zM721 408h1v1h-1zM721 398h1v1h-1zM721 388h1v1h-1zM721 378h1v1h-1zM721 368h1v1h-1zM721 358h1v1h-1zM721 348h1v1h-1zM721 338h1v1h-1zM721 328h1v1h-1zM721 318h1v1h-1zM721 308h1v1h-1zM721 298h1v1h-1zM721 288h1v1h-1zM721 278h1v1h-1zM721 268h1v1h-1zM721 258h1v1h-1zM721 248h1v1h-1zM721 238h1v1h-1zM721 228h1v1h-1zM721 218h1v1h-1zM721 208h1v1h-1zM721 198h1v1h-1zM721 188h1v1h-1zM721 178h1v1h-1zM721 168h1v1h-1zM721 158h1v1h-1zM721 148h1v1h-1zM721 138h1v1h-1zM721 128h1v1h-1zM721 118h1v1h-1zM721 108h1v1h-1zM721 98h1v1h-1zM721 88h1v1h-1zM721 78h1v1h-1zM721 68h1v1h-1zM721 58h1v1h-1zM721 48h1v1h-1zM721 38h1v1h-1zM721 28h1v1h-1zM721 18h1v1h-1zM721 8h1v1h-1zM731 568h1v1h-1zM731 558h1v1h-1zM731 548h1v1h-1zM731 538h1v1h-1zM731 528h1v1h-1zM731 518h1v1h-1zM731 508h1v1h-1zM731 498h1v1h-1zM731 488h1v1h-1zM731 478h1v1h-1zM731 468h1v1h-1zM731 458h1v1h-1zM731 448h1v1h-1zM731 438h1v1h-1zM731 428h1v1h-1zM731 418h1v1h-1zM731 408h1v1h-1zM731 398h1v1h-1zM731 388h1v1h-1zM731 378h1v1h-1zM731 368h1v1h-1zM731 358h1v1h-1zM731 348h1v1h-1zM731 338h1v1h-1zM731 328h1v1h-1zM731 318h1v1h-1zM731 308h1v1h-1zM731 298h1v1h-1zM731 288h1v1h-1zM731 278h1v1h-1zM731 268h1v1h-1zM731 258h1v1h-1zM731 248h1v1h-1zM731 238h1v1h-1zM731 228h1v1h-1zM731 218h1v1h-1zM731 208h1v1h-1zM731 198h1v1h-1zM731 188h1v1h-1zM731 178h1v1h-1zM731 168h1v1h-1zM731 158h1v1h-1zM731 148h1v1h-1zM731 138h1v1h-1zM731 128h1v1h-1zM731 118h1v1h-1zM731 108h1v1h-1zM731 98h1v1h-1zM731 88h1v1h-1zM731 78h1v1h-1zM731 68h1v1h-1zM731 58h1v1h-1zM731 48h1v1h-1zM731 38h1v1h-1zM731 28h1v1h-1zM731 18h1v1h-1zM731 8h1v1h-1zM741 568h1v1h-1zM741 558h1v1h-1zM741 548h1v1h-1zM741 538h1v1h-1zM741 528h1v1h-1zM741 518h1v1h-1zM741 508h1v1h-1zM741 498h1v1h-1zM741 488h1v1h-1zM741 478h1v1h-1zM741 468h1v1h-1zM741 458h1v1h-1zM741 448h1v1h-1zM741 438h1v1h-1zM741 428h1v1h-1zM741 418h1v1h-1zM741 408h1v1h-1zM741 398h1v1h-1zM741 388h1v1h-1zM741 378h1v1h-1zM741 368h1v1h-1zM741 358h1v1h-1zM741 348h1v1h-1zM741 338h1v1h-1zM741 328h1v1h-1zM741 318h1v1h-1zM741 308h1v1h-1zM741 298h1v1h-1zM741 288h1v1h-1zM741 278h1v1h-1zM741 268h1v1h-1zM741 258h1v1h-1zM741 248h1v1h-1zM741 238h1v1h-1zM741 228h1v1h-1zM741 218h1v1h-1zM741 208h1v1h-1zM741 198h1v1h-1zM741 188h1v1h-1zM741 178h1v1h-1zM741 168h1v1h-1zM741 158h1v1h-1zM741 148h1v1h-1zM741 138h1v1h-1zM741 128h1v1h-1zM741 118h1v1h-1zM741 108h1v1h-1zM741 98h1v1h-1zM741 88h1v1h-1zM741 78h1v1h-1zM741 68h1v1h-1zM741 58h1v1h-1zM741 48h1v1h-1zM741 38h1v1h-1zM741 28h1v1h-1zM741 18h1v1h-1zM741 8h1v1h-1zM751 568h1v1h-1zM751 558h1v1h-1zM751 548h1v1h-1zM751 538h1v1h-1zM751 528h1v1h-1zM751 518h1v1h-1zM751 508h1v1h-1zM751 498h1v1h-1zM751 488h1v1h-1zM751 478h1v1h-1zM751 468h1v1h-1zM751 458h1v1h-1zM751 448h1v1h-1zM751 438h1v1h-1zM751 428h1v1h-1zM751 418h1v1h-1zM751 408h1v1h-1zM751 398h1v1h-1zM751 388h1v1h-1zM751 378h1v1h-1zM751 368h1v1h-1zM751 358h1v1h-1zM751 348h1v1h-1zM751 338h1v1h-1zM751 328h1v1h-1zM751 318h1v1h-1zM751 308h1v1h-1zM751 298h1v1h-1zM751 288h1v1h-1zM751 278h1v1h-1zM751 268h1v1h-1zM751 258h1v1h-1zM751 248h1v1h-1zM751 238h1v1h-1zM751 228h1v1h-1zM751 218h1v1h-1zM751 208h1v1h-1zM751 198h1v1h-1zM751 188h1v1h-1zM751 178h1v1h-1zM751 168h1v1h-1zM751 158h1v1h-1zM751 148h1v1h-1zM751 138h1v1h-1zM751 128h1v1h-1zM751 118h1v1h-1zM751 108h1v1h-1zM751 98h1v1h-1zM751 88h1v1h-1zM751 78h1v1h-1zM751 68h1v1h-1zM751 58h1v1h-1zM751 48h1v1h-1zM751 38h1v1h-1zM751 28h1v1h-1zM751 18h1v1h-1zM751 8h1v1h-1zM761 568h1v1h-1zM761 558h1v1h-1zM761 548h1v1h-1zM761 538h1v1h-1zM761 528h1v1h-1zM761 518h1v1h-1zM761 508h1v1h-1zM761 498h1v1h-1zM761 488h1v1h-1zM761 478h1v1h-1zM761 468h1v1h-1zM761 458h1v1h-1zM761 448h1v1h-1zM761 438h1v1h-1zM761 428h1v1h-1zM761 418h1v1h-1zM761 408h1v1h-1zM761 398h1v1h-1zM761 388h1v1h-1zM761 378h1v1h-1zM761 368h1v1h-1zM761 358h1v1h-1zM761 348h1v1h-1zM761 338h1v1h-1zM761 328h1v1h-1zM761 318h1v1h-1zM761 308h1v1h-1zM761 298h1v1h-1zM761 288h1v1h-1zM761 278h1v1h-1zM761 268h1v1h-1zM761 258h1v1h-1zM761 248h1v1h-1zM761 238h1v1h-1zM761 228h1v1h-1zM761 218h1v1h-1zM761 208h1v1h-1zM761 198h1v1h-1zM761 188h1v1h-1zM761 178h1v1h-1zM761 168h1v1h-1zM761 158h1v1h-1zM761 148h1v1h-1zM761 138h1v1h-1zM761 128h1v1h-1zM761 118h1v1h-1zM761 108h1v1h-1zM761 98h1v1h-1zM761 88h1v1h-1zM761 78h1v1h-1zM761 68h1v1h-1zM761 58h1v1h-1zM761 48h1v1h-1zM761 38h1v1h-1zM761 28h1v1h-1zM761 18h1v1h-1zM761 8h1v1h-1zM771 568h1v1h-1zM771 558h1v1h-1zM771 548h1v1h-1zM771 538h1v1h-1zM771 528h1v1h-1zM771 518h1v1h-1zM771 508h1v1h-1zM771 498h1v1h-1zM771 488h1v1h-1zM771 478h1v1h-1zM771 468h1v1h-1zM771 458h1v1h-1zM771 448h1v1h-1zM771 438h1v1h-1zM771 428h1v1h-1zM771 418h1v1h-1zM771 408h1v1h-1zM771 398h1v1h-1zM771 388h1v1h-1zM771 378h1v1h-1zM771 368h1v1h-1zM771 358h1v1h-1zM771 348h1v1h-1zM771 338h1v1h-1zM771 328h1v1h-1zM771 318h1v1h-1zM771 308h1v1h-1zM771 298h1v1h-1zM771 288h1v1h-1zM771 278h1v1h-1zM771 268h1v1h-1zM771 258h1v1h-1zM771 248h1v1h-1zM771 238h1v1h-1zM771 228h1v1h-1zM771 218h1v1h-1zM771 208h1v1h-1zM771 198h1v1h-1zM771 188h1v1h-1zM771 178h1v1h-1zM771 168h1v1h-1zM771 158h1v1h-1zM771 148h1v1h-1zM771 138h1v1h-1zM771 128h1v1h-1zM771 118h1v1h-1zM771 108h1v1h-1zM771 98h1v1h-1zM771 88h1v1h-1zM771 78h1v1h-1zM771 68h1v1h-1zM771 58h1v1h-1zM771 48h1v1h-1zM771 38h1v1h-1zM771 28h1v1h-1zM771 18h1v1h-1zM771 8h1v1h-1zM781 568h1v1h-1zM781 558h1v1h-1zM781 548h1v1h-1zM781 538h1v1h-1zM781 528h1v1h-1zM781 518h1v1h-1zM781 508h1v1h-1zM781 498h1v1h-1zM781 488h1v1h-1zM781 478h1v1h-1zM781 468h1v1h-1zM781 458h1v1h-1zM781 448h1v1h-1zM781 438h1v1h-1zM781 428h1v1h-1zM781 418h1v1h-1zM781 408h1v1h-1zM781 398h1v1h-1zM781 388h1v1h-1zM781 378h1v1h-1zM781 368h1v1h-1zM781 358h1v1h-1zM781 348h1v1h-1zM781 338h1v1h-1zM781 328h1v1h-1zM781 318h1v1h-1zM781 308h1v1h-1zM781 298h1v1h-1zM781 288h1v1h-1zM781 278h1v1h-1zM781 268h1v1h-1zM781 258h1v1h-1zM781 248h1v1h-1zM781 238h1v1h-1zM781 228h1v1h-1zM781 218h1v1h-1zM781 208h1v1h-1zM781 198h1v1h-1zM781 188h1v1h-1zM781 178h1v1h-1zM781 168h1v1h-1zM781 158h1v1h-1zM781 148h1v1h-1zM781 138h1v1h-1zM781 128h1v1h-1zM781 118h1v1h-1zM781 108h1v1h-1zM781 98h1v1h-1zM781 88h1v1h-1zM781 78h1v1h-1zM781 68h1v1h-1zM781 58h1v1h-1zM781 48h1v1h-1zM781 38h1v1h-1zM781 28h1v1h-1zM781 18h1v1h-1zM781 8h1v1h-1zM791 568h1v1h-1zM791 558h1v1h-1zM791 548h1v1h-1zM791 538h1v1h-1zM791 528h1v1h-1zM791 518h1v1h-1zM791 508h1v1h-1zM791 498h1v1h-1zM791 488h1v1h-1zM791 478h1v1h-1zM791 468h1v1h-1zM791 458h1v1h-1zM791 448h1v1h-1zM791 438h1v1h-1zM791 428h1v1h-1zM791 418h1v1h-1zM791 408h1v1h-1zM791 398h1v1h-1zM791 388h1v1h-1zM791 378h1v1h-1zM791 368h1v1h-1zM791 358h1v1h-1zM791 348h1v1h-1zM791 338h1v1h-1zM791 328h1v1h-1zM791 318h1v1h-1zM791 308h1v1h-1zM791 298h1v1h-1zM791 288h1v1h-1zM791 278h1v1h-1zM791 268h1v1h-1zM791 258h1v1h-1zM791 248h1v1h-1zM791 238h1v1h-1zM791 228h1v1h-1zM791 218h1v1h-1zM791 208h1v1h-1zM791 198h1v1h-1zM791 188h1v1h-1zM791 178h1v1h-1zM791 168h1v1h-1zM791 158h1v1h-1zM791 148h1v1h-1zM791 138h1v1h-1zM791 128h1v1h-1zM791 118h1v1h-1zM791 108h1v1h-1zM791 98h1v1h-1zM791 88h1v1h-1zM791 78h1v1h-1zM791 68h1v1h-1zM791 58h1v1h-1zM791 48h1v1h-1zM791 38h1v1h-1zM791 28h1v1h-1zM791 18h1v1h-1zM791 8h1v1h-1zM801 568h1v1h-1zM801 558h1v1h-1zM801 548h1v1h-1zM801 538h1v1h-1zM801 528h1v1h-1zM801 518h1v1h-1zM801 508h1v1h-1zM801 498h1v1h-1zM801 488h1v1h-1zM801 478h1v1h-1zM801 468h1v1h-1zM801 458h1v1h-1zM801 448h1v1h-1zM801 438h1v1h-1zM801 428h1v1h-1zM801 418h1v1h-1zM801 408h1v1h-1zM801 398h1v1h-1zM801 388h1v1h-1zM801 378h1v1h-1zM801 368h1v1h-1zM801 358h1v1h-1zM801 348h1v1h-1zM801 338h1v1h-1zM801 328h1v1h-1zM801 318h1v1h-1zM801 308h1v1h-1zM801 298h1v1h-1zM801 288h1v1h-1zM801 278h1v1h-1zM801 268h1v1h-1zM801 258h1v1h-1zM801 248h1v1h-1zM801 238h1v1h-1zM801 228h1v1h-1zM801 218h1v1h-1zM801 208h1v1h-1zM801 198h1v1h-1zM801 188h1v1h-1zM801 178h1v1h-1zM801 168h1v1h-1zM801 158h1v1h-1zM801 148h1v1h-1zM801 138h1v1h-1zM801 128h1v1h-1zM801 118h1v1h-1zM801 108h1v1h-1zM801 98h1v1h-1zM801 88h1v1h-1zM801 78h1v1h-1zM801 68h1v1h-1zM801 58h1v1h-1zM801 48h1v1h-1zM801 38h1v1h-1zM801 28h1v1h-1zM801 18h1v1h-1zM801 8h1v1h-1zM811 568h1v1h-1zM811 558h1v1h-1zM811 548h1v1h-1zM811 538h1v1h-1zM811 528h1v1h-1zM811 518h1v1h-1zM811 508h1v1h-1zM811 498h1v1h-1zM811 488h1v1h-1zM811 478h1v1h-1zM811 468h1v1h-1zM811 458h1v1h-1zM811 448h1v1h-1zM811 438h1v1h-1zM811 428h1v1h-1zM811 418h1v1h-1zM811 408h1v1h-1zM811 398h1v1h-1zM811 388h1v1h-1zM811 378h1v1h-1zM811 368h1v1h-1zM811 358h1v1h-1zM811 348h1v1h-1zM811 338h1v1h-1zM811 328h1v1h-1zM811 318h1v1h-1zM811 308h1v1h-1zM811 298h1v1h-1zM811 288h1v1h-1zM811 278h1v1h-1zM811 268h1v1h-1zM811 258h1v1h-1zM811 248h1v1h-1zM811 238h1v1h-1zM811 228h1v1h-1zM811 218h1v1h-1zM811 208h1v1h-1zM811 198h1v1h-1zM811 188h1v1h-1zM811 178h1v1h-1zM811 168h1v1h-1zM811 158h1v1h-1zM811 148h1v1h-1zM811 138h1v1h-1zM811 128h1v1h-1zM811 118h1v1h-1zM811 108h1v1h-1zM811 98h1v1h-1zM811 88h1v1h-1zM811 78h1v1h-1zM811 68h1v1h-1zM811 58h1v1h-1zM811 48h1v1h-1zM811 38h1v1h-1zM811 28h1v1h-1zM811 18h1v1h-1zM811 8h1v1h-1zM821 568h1v1h-1zM821 558h1v1h-1zM821 548h1v1h-1zM821 538h1v1h-1zM821 528h1v1h-1zM821 518h1v1h-1zM821 508h1v1h-1zM821 498h1v1h-1zM821 488h1v1h-1zM821 478h1v1h-1zM821 468h1v1h-1zM821 458h1v1h-1zM821 448h1v1h-1zM821 438h1v1h-1zM821 428h1v1h-1zM821 418h1v1h-1zM821 408h1v1h-1zM821 398h1v1h-1zM821 388h1v1h-1zM821 378h1v1h-1zM821 368h1v1h-1zM821 358h1v1h-1zM821 348h1v1h-1zM821 338h1v1h-1zM821 328h1v1h-1zM821 318h1v1h-1zM821 308h1v1h-1zM821 298h1v1h-1zM821 288h1v1h-1zM821 278h1v1h-1zM821 268h1v1h-1zM821 258h1v1h-1zM821 248h1v1h-1zM821 238h1v1h-1zM821 228h1v1h-1zM821 218h1v1h-1zM821 208h1v1h-1zM821 198h1v1h-1zM821 188h1v1h-1zM821 178h1v1h-1zM821 168h1v1h-1zM821 158h1v1h-1zM821 148h1v1h-1zM821 138h1v1h-1zM821 128h1v1h-1zM821 118h1v1h-1zM821 108h1v1h-1zM821 98h1v1h-1zM821 88h1v1h-1zM821 78h1v1h-1zM821 68h1v1h-1zM821 58h1v1h-1zM821 48h1v1h-1zM821 38h1v1h-1zM821 28h1v1h-1zM821 18h1v1h-1zM821 8h1v1h-1zM831 568h1v1h-1zM831 558h1v1h-1zM831 548h1v1h-1zM831 538h1v1h-1zM831 528h1v1h-1zM831 518h1v1h-1zM831 508h1v1h-1zM831 498h1v1h-1zM831 488h1v1h-1zM831 478h1v1h-1zM831 468h1v1h-1zM831 458h1v1h-1zM831 448h1v1h-1zM831 438h1v1h-1zM831 428h1v1h-1zM831 418h1v1h-1zM831 408h1v1h-1zM831 398h1v1h-1zM831 388h1v1h-1zM831 378h1v1h-1zM831 368h1v1h-1zM831 358h1v1h-1zM831 348h1v1h-1zM831 338h1v1h-1zM831 328h1v1h-1zM831 318h1v1h-1zM831 308h1v1h-1zM831 298h1v1h-1zM831 288h1v1h-1zM831 278h1v1h-1zM831 268h1v1h-1zM831 258h1v1h-1zM831 248h1v1h-1zM831 238h1v1h-1zM831 228h1v1h-1zM831 218h1v1h-1zM831 208h1v1h-1zM831 198h1v1h-1zM831 188h1v1h-1zM831 178h1v1h-1zM831 168h1v1h-1zM831 158h1v1h-1zM831 148h1v1h-1zM831 138h1v1h-1zM831 128h1v1h-1zM831 118h1v1h-1zM831 108h1v1h-1zM831 98h1v1h-1zM831 88h1v1h-1zM831 78h1v1h-1zM831 68h1v1h-1zM831 58h1v1h-1zM831 48h1v1h-1zM831 38h1v1h-1zM831 28h1v1h-1zM831 18h1v1h-1zM831 8h1v1h-1zM841 568h1v1h-1zM841 558h1v1h-1zM841 548h1v1h-1zM841 538h1v1h-1zM841 528h1v1h-1zM841 518h1v1h-1zM841 508h1v1h-1zM841 498h1v1h-1zM841 488h1v1h-1zM841 478h1v1h-1zM841 468h1v1h-1zM841 458h1v1h-1zM841 448h1v1h-1zM841 438h1v1h-1zM841 428h1v1h-1zM841 418h1v1h-1zM841 408h1v1h-1zM841 398h1v1h-1zM841 388h1v1h-1zM841 378h1v1h-1zM841 368h1v1h-1zM841 358h1v1h-1zM841 348h1v1h-1zM841 338h1v1h-1zM841 328h1v1h-1zM841 318h1v1h-1zM841 308h1v1h-1zM841 298h1v1h-1zM841 288h1v1h-1zM841 278h1v1h-1zM841 268h1v1h-1zM841 258h1v1h-1zM841 248h1v1h-1zM841 238h1v1h-1zM841 228h1v1h-1zM841 218h1v1h-1zM841 208h1v1h-1zM841 198h1v1h-1zM841 188h1v1h-1zM841 178h1v1h-1zM841 168h1v1h-1zM841 158h1v1h-1zM841 148h1v1h-1zM841 138h1v1h-1zM841 128h1v1h-1zM841 118h1v1h-1zM841 108h1v1h-1zM841 98h1v1h-1zM841 88h1v1h-1zM841 78h1v1h-1zM841 68h1v1h-1zM841 58h1v1h-1zM841 48h1v1h-1zM841 38h1v1h-1zM841 28h1v1h-1zM841 18h1v1h-1zM841 8h1v1h-1zM851 568h1v1h-1zM851 558h1v1h-1zM851 548h1v1h-1zM851 538h1v1h-1zM851 528h1v1h-1zM851 518h1v1h-1zM851 508h1v1h-1zM851 498h1v1h-1zM851 488h1v1h-1zM851 478h1v1h-1zM851 468h1v1h-1zM851 458h1v1h-1zM851 448h1v1h-1zM851 438h1v1h-1zM851 428h1v1h-1zM851 418h1v1h-1zM851 408h1v1h-1zM851 398h1v1h-1zM851 388h1v1h-1zM851 378h1v1h-1zM851 368h1v1h-1zM851 358h1v1h-1zM851 348h1v1h-1zM851 338h1v1h-1zM851 328h1v1h-1zM851 318h1v1h-1zM851 308h1v1h-1zM851 298h1v1h-1zM851 288h1v1h-1zM851 278h1v1h-1zM851 268h1v1h-1zM851 258h1v1h-1zM851 248h1v1h-1zM851 238h1v1h-1zM851 228h1v1h-1zM851 218h1v1h-1zM851 208h1v1h-1zM851 198h1v1h-1zM851 188h1v1h-1zM851 178h1v1h-1zM851 168h1v1h-1zM851 158h1v1h-1zM851 148h1v1h-1zM851 138h1v1h-1zM851 128h1v1h-1zM851 118h1v1h-1zM851 108h1v1h-1zM851 98h1v1h-1zM851 88h1v1h-1zM851 78h1v1h-1zM851 68h1v1h-1zM851 58h1v1h-1zM851 48h1v1h-1zM851 38h1v1h-1zM851 28h1v1h-1zM851 18h1v1h-1zM851 8h1v1h-1zM861 568h1v1h-1zM861 558h1v1h-1zM861 548h1v1h-1zM861 538h1v1h-1zM861 528h1v1h-1zM861 518h1v1h-1zM861 508h1v1h-1zM861 498h1v1h-1zM861 488h1v1h-1zM861 478h1v1h-1zM861 468h1v1h-1zM861 458h1v1h-1zM861 448h1v1h-1zM861 438h1v1h-1zM861 428h1v1h-1zM861 418h1v1h-1zM861 408h1v1h-1zM861 398h1v1h-1zM861 388h1v1h-1zM861 378h1v1h-1zM861 368h1v1h-1zM861 358h1v1h-1zM861 348h1v1h-1zM861 338h1v1h-1zM861 328h1v1h-1zM861 318h1v1h-1zM861 308h1v1h-1zM861 298h1v1h-1zM861 288h1v1h-1zM861 278h1v1h-1zM861 268h1v1h-1zM861 258h1v1h-1zM861 248h1v1h-1zM861 238h1v1h-1zM861 228h1v1h-1zM861 218h1v1h-1zM861 208h1v1h-1zM861 198h1v1h-1zM861 188h1v1h-1zM861 178h1v1h-1zM861 168h1v1h-1zM861 158h1v1h-1zM861 148h1v1h-1zM861 138h1v1h-1zM861 128h1v1h-1zM861 118h1v1h-1zM861 108h1v1h-1zM861 98h1v1h-1zM861 88h1v1h-1zM861 78h1v1h-1zM861 68h1v1h-1zM861 58h1v1h-1zM861 48h1v1h-1zM861 38h1v1h-1zM861 28h1v1h-1zM861 18h1v1h-1zM861 8h1v1h-1zM871 568h1v1h-1zM871 558h1v1h-1zM871 548h1v1h-1zM871 538h1v1h-1zM871 528h1v1h-1zM871 518h1v1h-1zM871 508h1v1h-1zM871 498h1v1h-1zM871 488h1v1h-1zM871 478h1v1h-1zM871 468h1v1h-1zM871 458h1v1h-1zM871 448h1v1h-1zM871 438h1v1h-1zM871 428h1v1h-1zM871 418h1v1h-1zM871 408h1v1h-1zM871 398h1v1h-1zM871 388h1v1h-1zM871 378h1v1h-1zM871 368h1v1h-1zM871 358h1v1h-1zM871 348h1v1h-1zM871 338h1v1h-1zM871 328h1v1h-1zM871 318h1v1h-1zM871 308h1v1h-1zM871 298h1v1h-1zM871 288h1v1h-1zM871 278h1v1h-1zM871 268h1v1h-1zM871 258h1v1h-1zM871 248h1v1h-1zM871 238h1v1h-1zM871 228h1v1h-1zM871 218h1v1h-1zM871 208h1v1h-1zM871 198h1v1h-1zM871 188h1v1h-1zM871 178h1v1h-1zM871 168h1v1h-1zM871 158h1v1h-1zM871 148h1v1h-1zM871 138h1v1h-1zM871 128h1v1h-1zM871 118h1v1h-1zM871 108h1v1h-1zM871 98h1v1h-1zM871 88h1v1h-1zM871 78h1v1h-1zM871 68h1v1h-1zM871 58h1v1h-1zM871 48h1v1h-1zM871 38h1v1h-1zM871 28h1v1h-1zM871 18h1v1h-1zM871 8h1v1h-1zM881 568h1v1h-1zM881 558h1v1h-1zM881 548h1v1h-1zM881 538h1v1h-1zM881 528h1v1h-1zM881 518h1v1h-1zM881 508h1v1h-1zM881 498h1v1h-1zM881 488h1v1h-1zM881 478h1v1h-1zM881 468h1v1h-1zM881 458h1v1h-1zM881 448h1v1h-1zM881 438h1v1h-1zM881 428h1v1h-1zM881 418h1v1h-1zM881 408h1v1h-1zM881 398h1v1h-1zM881 388h1v1h-1zM881 378h1v1h-1zM881 368h1v1h-1zM881 358h1v1h-1zM881 348h1v1h-1zM881 338h1v1h-1zM881 328h1v1h-1zM881 318h1v1h-1zM881 308h1v1h-1zM881 298h1v1h-1zM881 288h1v1h-1zM881 278h1v1h-1zM881 268h1v1h-1zM881 258h1v1h-1zM881 248h1v1h-1zM881 238h1v1h-1zM881 228h1v1h-1zM881 218h1v1h-1zM881 208h1v1h-1zM881 198h1v1h-1zM881 188h1v1h-1zM881 178h1v1h-1zM881 168h1v1h-1zM881 158h1v1h-1zM881 148h1v1h-1zM881 138h1v1h-1zM881 128h1v1h-1zM881 118h1v1h-1zM881 108h1v1h-1zM881 98h1v1h-1zM881 88h1v1h-1zM881 78h1v1h-1zM881 68h1v1h-1zM881 58h1v1h-1zM881 48h1v1h-1zM881 38h1v1h-1zM881 28h1v1h-1zM881 18h1v1h-1zM881 8h1v1h-1zM891 568h1v1h-1zM891 558h1v1h-1zM891 548h1v1h-1zM891 538h1v1h-1zM891 528h1v1h-1zM891 518h1v1h-1zM891 508h1v1h-1zM891 498h1v1h-1zM891 488h1v1h-1zM891 478h1v1h-1zM891 468h1v1h-1zM891 458h1v1h-1zM891 448h1v1h-1zM891 438h1v1h-1zM891 428h1v1h-1zM891 418h1v1h-1zM891 408h1v1h-1zM891 398h1v1h-1zM891 388h1v1h-1zM891 378h1v1h-1zM891 368h1v1h-1zM891 358h1v1h-1zM891 348h1v1h-1zM891 338h1v1h-1zM891 328h1v1h-1zM891 318h1v1h-1zM891 308h1v1h-1zM891 298h1v1h-1zM891 288h1v1h-1zM891 278h1v1h-1zM891 268h1v1h-1zM891 258h1v1h-1zM891 248h1v1h-1zM891 238h1v1h-1zM891 228h1v1h-1zM891 218h1v1h-1zM891 208h1v1h-1zM891 198h1v1h-1zM891 188h1v1h-1zM891 178h1v1h-1zM891 168h1v1h-1zM891 158h1v1h-1zM891 148h1v1h-1zM891 138h1v1h-1zM891 128h1v1h-1zM891 118h1v1h-1zM891 108h1v1h-1zM891 98h1v1h-1zM891 88h1v1h-1zM891 78h1v1h-1zM891 68h1v1h-1zM891 58h1v1h-1zM891 48h1v1h-1zM891 38h1v1h-1zM891 28h1v1h-1zM891 18h1v1h-1zM891 8h1v1h-1zM901 568h1v1h-1zM901 558h1v1h-1zM901 548h1v1h-1zM901 538h1v1h-1zM901 528h1v1h-1zM901 518h1v1h-1zM901 508h1v1h-1zM901 498h1v1h-1zM901 488h1v1h-1zM901 478h1v1h-1zM901 468h1v1h-1zM901 458h1v1h-1zM901 448h1v1h-1zM901 438h1v1h-1zM901 428h1v1h-1zM901 418h1v1h-1zM901 408h1v1h-1zM901 398h1v1h-1zM901 388h1v1h-1zM901 378h1v1h-1zM901 368h1v1h-1zM901 358h1v1h-1zM901 348h1v1h-1zM901 338h1v1h-1zM901 328h1v1h-1zM901 318h1v1h-1zM901 308h1v1h-1zM901 298h1v1h-1zM901 288h1v1h-1zM901 278h1v1h-1zM901 268h1v1h-1zM901 258h1v1h-1zM901 248h1v1h-1zM901 238h1v1h-1zM901 228h1v1h-1zM901 218h1v1h-1zM901 208h1v1h-1zM901 198h1v1h-1zM901 188h1v1h-1zM901 178h1v1h-1zM901 168h1v1h-1zM901 158h1v1h-1zM901 148h1v1h-1zM901 138h1v1h-1zM901 128h1v1h-1zM901 118h1v1h-1zM901 108h1v1h-1zM901 98h1v1h-1zM901 88h1v1h-1zM901 78h1v1h-1zM901 68h1v1h-1zM901 58h1v1h-1zM901 48h1v1h-1zM901 38h1v1h-1zM901 28h1v1h-1zM901 18h1v1h-1zM901 8h1v1h-1zM911 568h1v1h-1zM911 558h1v1h-1zM911 548h1v1h-1zM911 538h1v1h-1zM911 528h1v1h-1zM911 518h1v1h-1zM911 508h1v1h-1zM911 498h1v1h-1zM911 488h1v1h-1zM911 478h1v1h-1zM911 468h1v1h-1zM911 458h1v1h-1zM911 448h1v1h-1zM911 438h1v1h-1zM911 428h1v1h-1zM911 418h1v1h-1zM911 408h1v1h-1zM911 398h1v1h-1zM911 388h1v1h-1zM911 378h1v1h-1zM911 368h1v1h-1zM911 358h1v1h-1zM911 348h1v1h-1zM911 338h1v1h-1zM911 328h1v1h-1zM911 318h1v1h-1zM911 308h1v1h-1zM911 298h1v1h-1zM911 288h1v1h-1zM911 278h1v1h-1zM911 268h1v1h-1zM911 258h1v1h-1zM911 248h1v1h-1zM911 238h1v1h-1zM911 228h1v1h-1zM911 218h1v1h-1zM911 208h1v1h-1zM911 198h1v1h-1zM911 188h1v1h-1zM911 178h1v1h-1zM911 168h1v1h-1zM911 158h1v1h-1zM911 148h1v1h-1zM911 138h1v1h-1zM911 128h1v1h-1zM911 118h1v1h-1zM911 108h1v1h-1zM911 98h1v1h-1zM911 88h1v1h-1zM911 78h1v1h-1zM911 68h1v1h-1zM911 58h1v1h-1zM911 48h1v1h-1zM911 38h1v1h-1zM911 28h1v1h-1zM911 18h1v1h-1zM911 8h1v1h-1zM921 568h1v1h-1zM921 558h1v1h-1zM921 548h1v1h-1zM921 538h1v1h-1zM921 528h1v1h-1zM921 518h1v1h-1zM921 508h1v1h-1zM921 498h1v1h-1zM921 488h1v1h-1zM921 478h1v1h-1zM921 468h1v1h-1zM921 458h1v1h-1zM921 448h1v1h-1zM921 438h1v1h-1zM921 428h1v1h-1zM921 418h1v1h-1zM921 408h1v1h-1zM921 398h1v1h-1zM921 388h1v1h-1zM921 378h1v1h-1zM921 368h1v1h-1zM921 358h1v1h-1zM921 348h1v1h-1zM921 338h1v1h-1zM921 328h1v1h-1zM921 318h1v1h-1zM921 308h1v1h-1zM921 298h1v1h-1zM921 288h1v1h-1zM921 278h1v1h-1zM921 268h1v1h-1zM921 258h1v1h-1zM921 248h1v1h-1zM921 238h1v1h-1zM921 228h1v1h-1zM921 218h1v1h-1zM921 208h1v1h-1zM921 198h1v1h-1zM921 188h1v1h-1zM921 178h1v1h-1zM921 168h1v1h-1zM921 158h1v1h-1zM921 148h1v1h-1zM921 138h1v1h-1zM921 128h1v1h-1zM921 118h1v1h-1zM921 108h1v1h-1zM921 98h1v1h-1zM921 88h1v1h-1zM921 78h1v1h-1zM921 68h1v1h-1zM921 58h1v1h-1zM921 48h1v1h-1zM921 38h1v1h-1zM921 28h1v1h-1zM921 18h1v1h-1zM921 8h1v1h-1zM931 568h1v1h-1zM931 558h1v1h-1zM931 548h1v1h-1zM931 538h1v1h-1zM931 528h1v1h-1zM931 518h1v1h-1zM931 508h1v1h-1zM931 498h1v1h-1zM931 488h1v1h-1zM931 478h1v1h-1zM931 468h1v1h-1zM931 458h1v1h-1zM931 448h1v1h-1zM931 438h1v1h-1zM931 428h1v1h-1zM931 418h1v1h-1zM931 408h1v1h-1zM931 398h1v1h-1zM931 388h1v1h-1zM931 378h1v1h-1zM931 368h1v1h-1zM931 358h1v1h-1zM931 348h1v1h-1zM931 338h1v1h-1zM931 328h1v1h-1zM931 318h1v1h-1zM931 308h1v1h-1zM931 298h1v1h-1zM931 288h1v1h-1zM931 278h1v1h-1zM931 268h1v1h-1zM931 258h1v1h-1zM931 248h1v1h-1zM931 238h1v1h-1zM931 228h1v1h-1zM931 218h1v1h-1zM931 208h1v1h-1zM931 198h1v1h-1zM931 188h1v1h-1zM931 178h1v1h-1zM931 168h1v1h-1zM931 158h1v1h-1zM931 148h1v1h-1zM931 138h1v1h-1zM931 128h1v1h-1zM931 118h1v1h-1zM931 108h1v1h-1zM931 98h1v1h-1zM931 88h1v1h-1zM931 78h1v1h-1zM931 68h1v1h-1zM931 58h1v1h-1zM931 48h1v1h-1zM931 38h1v1h-1zM931 28h1v1h-1zM931 18h1v1h-1zM931 8h1v1h-1zM941 568h1v1h-1zM941 558h1v1h-1zM941 548h1v1h-1zM941 538h1v1h-1zM941 528h1v1h-1zM941 518h1v1h-1zM941 508h1v1h-1zM941 498h1v1h-1zM941 488h1v1h-1zM941 478h1v1h-1zM941 468h1v1h-1zM941 458h1v1h-1zM941 448h1v1h-1zM941 438h1v1h-1zM941 428h1v1h-1zM941 418h1v1h-1zM941 408h1v1h-1zM941 398h1v1h-1zM941 388h1v1h-1zM941 378h1v1h-1zM941 368h1v1h-1zM941 358h1v1h-1zM941 348h1v1h-1zM941 338h1v1h-1zM941 328h1v1h-1zM941 318h1v1h-1zM941 308h1v1h-1zM941 298h1v1h-1zM941 288h1v1h-1zM941 278h1v1h-1zM941 268h1v1h-1zM941 258h1v1h-1zM941 248h1v1h-1zM941 238h1v1h-1zM941 228h1v1h-1zM941 218h1v1h-1zM941 208h1v1h-1zM941 198h1v1h-1zM941 188h1v1h-1zM941 178h1v1h-1zM941 168h1v1h-1zM941 158h1v1h-1zM941 148h1v1h-1zM941 138h1v1h-1zM941 128h1v1h-1zM941 118h1v1h-1zM941 108h1v1h-1zM941 98h1v1h-1zM941 88h1v1h-1zM941 78h1v1h-1zM941 68h1v1h-1zM941 58h1v1h-1zM941 48h1v1h-1zM941 38h1v1h-1zM941 28h1v1h-1zM941 18h1v1h-1zM941 8h1v1h-1zM951 568h1v1h-1zM951 558h1v1h-1zM951 548h1v1h-1zM951 538h1v1h-1zM951 528h1v1h-1zM951 518h1v1h-1zM951 508h1v1h-1zM951 498h1v1h-1zM951 488h1v1h-1zM951 478h1v1h-1zM951 468h1v1h-1zM951 458h1v1h-1zM951 448h1v1h-1zM951 438h1v1h-1zM951 428h1v1h-1zM951 418h1v1h-1zM951 408h1v1h-1zM951 398h1v1h-1zM951 388h1v1h-1zM951 378h1v1h-1zM951 368h1v1h-1zM951 358h1v1h-1zM951 348h1v1h-1zM951 338h1v1h-1zM951 328h1v1h-1zM951 318h1v1h-1zM951 308h1v1h-1zM951 298h1v1h-1zM951 288h1v1h-1zM951 278h1v1h-1zM951 268h1v1h-1zM951 258h1v1h-1zM951 248h1v1h-1zM951 238h1v1h-1zM951 228h1v1h-1zM951 218h1v1h-1zM951 208h1v1h-1zM951 198h1v1h-1zM951 188h1v1h-1zM951 178h1v1h-1zM951 168h1v1h-1zM951 158h1v1h-1zM951 148h1v1h-1zM951 138h1v1h-1zM951 128h1v1h-1zM951 118h1v1h-1zM951 108h1v1h-1zM951 98h1v1h-1zM951 88h1v1h-1zM951 78h1v1h-1zM951 68h1v1h-1zM951 58h1v1h-1zM951 48h1v1h-1zM951 38h1v1h-1zM951 28h1v1h-1zM951 18h1v1h-1zM951 8h1v1h-1zM961 568h1v1h-1zM961 558h1v1h-1zM961 548h1v1h-1zM961 538h1v1h-1zM961 528h1v1h-1zM961 518h1v1h-1zM961 508h1v1h-1zM961 498h1v1h-1zM961 488h1v1h-1zM961 478h1v1h-1zM961 468h1v1h-1zM961 458h1v1h-1zM961 448h1v1h-1zM961 438h1v1h-1zM961 428h1v1h-1zM961 418h1v1h-1zM961 408h1v1h-1zM961 398h1v1h-1zM961 388h1v1h-1zM961 378h1v1h-1zM961 368h1v1h-1zM961 358h1v1h-1zM961 348h1v1h-1zM961 338h1v1h-1zM961 328h1v1h-1zM961 318h1v1h-1zM961 308h1v1h-1zM961 298h1v1h-1zM961 288h1v1h-1zM961 278h1v1h-1zM961 268h1v1h-1zM961 258h1v1h-1zM961 248h1v1h-1zM961 238h1v1h-1zM961 228h1v1h-1zM961 218h1v1h-1zM961 208h1v1h-1zM961 198h1v1h-1zM961 188h1v1h-1zM961 178h1v1h-1zM961 168h1v1h-1zM961 158h1v1h-1zM961 148h1v1h-1zM961 138h1v1h-1zM961 128h1v1h-1zM961 118h1v1h-1zM961 108h1v1h-1zM961 98h1v1h-1zM961 88h1v1h-1zM961 78h1v1h-1zM961 68h1v1h-1zM961 58h1v1h-1zM961 48h1v1h-1zM961 38h1v1h-1zM961 28h1v1h-1zM961 18h1v1h-1zM961 8h1v1h-1zM971 568h1v1h-1zM971 558h1v1h-1zM971 548h1v1h-1zM971 538h1v1h-1zM971 528h1v1h-1zM971 518h1v1h-1zM971 508h1v1h-1zM971 498h1v1h-1zM971 488h1v1h-1zM971 478h1v1h-1zM971 468h1v1h-1zM971 458h1v1h-1zM971 448h1v1h-1zM971 438h1v1h-1zM971 428h1v1h-1zM971 418h1v1h-1zM971 408h1v1h-1zM971 398h1v1h-1zM971 388h1v1h-1zM971 378h1v1h-1zM971 368h1v1h-1zM971 358h1v1h-1zM971 348h1v1h-1zM971 338h1v1h-1zM971 328h1v1h-1zM971 318h1v1h-1zM971 308h1v1h-1zM971 298h1v1h-1zM971 288h1v1h-1zM971 278h1v1h-1zM971 268h1v1h-1zM971 258h1v1h-1zM971 248h1v1h-1zM971 238h1v1h-1zM971 228h1v1h-1zM971 218h1v1h-1zM971 208h1v1h-1zM971 198h1v1h-1zM971 188h1v1h-1zM971 178h1v1h-1zM971 168h1v1h-1zM971 158h1v1h-1zM971 148h1v1h-1zM971 138h1v1h-1zM971 128h1v1h-1zM971 118h1v1h-1zM971 108h1v1h-1zM971 98h1v1h-1zM971 88h1v1h-1zM971 78h1v1h-1zM971 68h1v1h-1zM971 58h1v1h-1zM971 48h1v1h-1zM971 38h1v1h-1zM971 28h1v1h-1zM971 18h1v1h-1zM971 8h1v1h-1zM981 568h1v1h-1zM981 558h1v1h-1zM981 548h1v1h-1zM981 538h1v1h-1zM981 528h1v1h-1zM981 518h1v1h-1zM981 508h1v1h-1zM981 498h1v1h-1zM981 488h1v1h-1zM981 478h1v1h-1zM981 468h1v1h-1zM981 458h1v1h-1zM981 448h1v1h-1zM981 438h1v1h-1zM981 428h1v1h-1zM981 418h1v1h-1zM981 408h1v1h-1zM981 398h1v1h-1zM981 388h1v1h-1zM981 378h1v1h-1zM981 368h1v1h-1zM981 358h1v1h-1zM981 348h1v1h-1zM981 338h1v1h-1zM981 328h1v1h-1zM981 318h1v1h-1zM981 308h1v1h-1zM981 298h1v1h-1zM981 288h1v1h-1zM981 278h1v1h-1zM981 268h1v1h-1zM981 258h1v1h-1zM981 248h1v1h-1zM981 238h1v1h-1zM981 228h1v1h-1zM981 218h1v1h-1zM981 208h1v1h-1zM981 198h1v1h-1zM981 188h1v1h-1zM981 178h1v1h-1zM981 168h1v1h-1zM981 158h1v1h-1zM981 148h1v1h-1zM981 138h1v1h-1zM981 128h1v1h-1zM981 118h1v1h-1zM981 108h1v1h-1zM981 98h1v1h-1zM981 88h1v1h-1zM981 78h1v1h-1zM981 68h1v1h-1zM981 58h1v1h-1zM981 48h1v1h-1zM981 38h1v1h-1zM981 28h1v1h-1zM981 18h1v1h-1zM981 8h1v1h-1zM991 568h1v1h-1zM991 558h1v1h-1zM991 548h1v1h-1zM991 538h1v1h-1zM991 528h1v1h-1zM991 518h1v1h-1zM991 508h1v1h-1zM991 498h1v1h-1zM991 488h1v1h-1zM991 478h1v1h-1zM991 468h1v1h-1zM991 458h1v1h-1zM991 448h1v1h-1zM991 438h1v1h-1zM991 428h1v1h-1zM991 418h1v1h-1zM991 408h1v1h-1zM991 398h1v1h-1zM991 388h1v1h-1zM991 378h1v1h-1zM991 368h1v1h-1zM991 358h1v1h-1zM991 348h1v1h-1zM991 338h1v1h-1zM991 328h1v1h-1zM991 318h1v1h-1zM991 308h1v1h-1zM991 298h1v1h-1zM991 288h1v1h-1zM991 278h1v1h-1zM991 268h1v1h-1zM991 258h1v1h-1zM991 248h1v1h-1zM991 238h1v1h-1zM991 228h1v1h-1zM991 218h1v1h-1zM991 208h1v1h-1zM991 198h1v1h-1zM991 188h1v1h-1zM991 178h1v1h-1zM991 168h1v1h-1zM991 158h1v1h-1zM991 148h1v1h-1zM991 138h1v1h-1zM991 128h1v1h-1zM991 118h1v1h-1zM991 108h1v1h-1zM991 98h1v1h-1zM991 88h1v1h-1zM991 78h1v1h-1zM991 68h1v1h-1zM991 58h1v1h-1zM991 48h1v1h-1zM991 38h1v1h-1zM991 28h1v1h-1zM991 18h1v1h-1zM991 8h1v1h-1zM1001 568h1v1h-1zM1001 558h1v1h-1zM1001 548h1v1h-1zM1001 538h1v1h-1zM1001 528h1v1h-1zM1001 518h1v1h-1zM1001 508h1v1h-1zM1001 498h1v1h-1zM1001 488h1v1h-1zM1001 478h1v1h-1zM1001 468h1v1h-1zM1001 458h1v1h-1zM1001 448h1v1h-1zM1001 438h1v1h-1zM1001 428h1v1h-1zM1001 418h1v1h-1zM1001 408h1v1h-1zM1001 398h1v1h-1zM1001 388h1v1h-1zM1001 378h1v1h-1zM1001 368h1v1h-1zM1001 358h1v1h-1zM1001 348h1v1h-1zM1001 338h1v1h-1zM1001 328h1v1h-1zM1001 318h1v1h-1zM1001 308h1v1h-1zM1001 298h1v1h-1zM1001 288h1v1h-1zM1001 278h1v1h-1zM1001 268h1v1h-1zM1001 258h1v1h-1zM1001 248h1v1h-1zM1001 238h1v1h-1zM1001 228h1v1h-1zM1001 218h1v1h-1zM1001 208h1v1h-1zM1001 198h1v1h-1zM1001 188h1v1h-1zM1001 178h1v1h-1zM1001 168h1v1h-1zM1001 158h1v1h-1zM1001 148h1v1h-1zM1001 138h1v1h-1zM1001 128h1v1h-1zM1001 118h1v1h-1zM1001 108h1v1h-1zM1001 98h1v1h-1zM1001 88h1v1h-1zM1001 78h1v1h-1zM1001 68h1v1h-1zM1001 58h1v1h-1zM1001 48h1v1h-1zM1001 38h1v1h-1zM1001 28h1v1h-1zM1001 18h1v1h-1zM1001 8h1v1h-1zM1011 568h1v1h-1zM1011 558h1v1h-1zM1011 548h1v1h-1zM1011 538h1v1h-1zM1011 528h1v1h-1zM1011 518h1v1h-1zM1011 508h1v1h-1zM1011 498h1v1h-1zM1011 488h1v1h-1zM1011 478h1v1h-1zM1011 468h1v1h-1zM1011 458h1v1h-1zM1011 448h1v1h-1zM1011 438h1v1h-1zM1011 428h1v1h-1zM1011 418h1v1h-1zM1011 408h1v1h-1zM1011 398h1v1h-1zM1011 388h1v1h-1zM1011 378h1v1h-1zM1011 368h1v1h-1zM1011 358h1v1h-1zM1011 348h1v1h-1zM1011 338h1v1h-1zM1011 328h1v1h-1zM1011 318h1v1h-1zM1011 308h1v1h-1zM1011 298h1v1h-1zM1011 288h1v1h-1zM1011 278h1v1h-1zM1011 268h1v1h-1zM1011 258h1v1h-1zM1011 248h1v1h-1zM1011 238h1v1h-1zM1011 228h1v1h-1zM1011 218h1v1h-1zM1011 208h1v1h-1zM1011 198h1v1h-1zM1011 188h1v1h-1zM1011 178h1v1h-1zM1011 168h1v1h-1zM1011 158h1v1h-1zM1011 148h1v1h-1zM1011 138h1v1h-1zM1011 128h1v1h-1zM1011 118h1v1h-1zM1011 108h1v1h-1zM1011 98h1v1h-1zM1011 88h1v1h-1zM1011 78h1v1h-1zM1011 68h1v1h-1zM1011 58h1v1h-1zM1011 48h1v1h-1zM1011 38h1v1h-1zM1011 28h1v1h-1zM1011 18h1v1h-1zM1011 8h1v1h-1zM1021 568h1v1h-1zM1021 558h1v1h-1zM1021 548h1v1h-1zM1021 538h1v1h-1zM1021 528h1v1h-1zM1021 518h1v1h-1zM1021 508h1v1h-1zM1021 498h1v1h-1zM1021 488h1v1h-1zM1021 478h1v1h-1zM1021 468h1v1h-1zM1021 458h1v1h-1zM1021 448h1v1h-1zM1021 438h1v1h-1zM1021 428h1v1h-1zM1021 418h1v1h-1zM1021 408h1v1h-1zM1021 398h1v1h-1zM1021 388h1v1h-1zM1021 378h1v1h-1zM1021 368h1v1h-1zM1021 358h1v1h-1zM1021 348h1v1h-1zM1021 338h1v1h-1zM1021 328h1v1h-1zM1021 318h1v1h-1zM1021 308h1v1h-1zM1021 298h1v1h-1zM1021 288h1v1h-1zM1021 278h1v1h-1zM1021 268h1v1h-1zM1021 258h1v1h-1zM1021 248h1v1h-1zM1021 238h1v1h-1zM1021 228h1v1h-1zM1021 218h1v1h-1zM1021 208h1v1h-1zM1021 198h1v1h-1zM1021 188h1v1h-1zM1021 178h1v1h-1zM1021 168h1v1h-1zM1021 158h1v1h-1zM1021 148h1v1h-1zM1021 138h1v1h-1zM1021 128h1v1h-1zM1021 118h1v1h-1zM1021 108h1v1h-1zM1021 98h1v1h-1zM1021 88h1v1h-1zM1021 78h1v1h-1zM1021 68h1v1h-1zM1021 58h1v1h-1zM1021 48h1v1h-1zM1021 38h1v1h-1zM1021 28h1v1h-1zM1021 18h1v1h-1zM1021 8h1v1h-1zM1031 568h1v1h-1zM1031 558h1v1h-1zM1031 548h1v1h-1zM1031 538h1v1h-1zM1031 528h1v1h-1zM1031 518h1v1h-1zM1031 508h1v1h-1zM1031 498h1v1h-1zM1031 488h1v1h-1zM1031 478h1v1h-1zM1031 468h1v1h-1zM1031 458h1v1h-1zM1031 448h1v1h-1zM1031 438h1v1h-1zM1031 428h1v1h-1zM1031 418h1v1h-1zM1031 408h1v1h-1zM1031 398h1v1h-1zM1031 388h1v1h-1zM1031 378h1v1h-1zM1031 368h1v1h-1zM1031 358h1v1h-1zM1031 348h1v1h-1zM1031 338h1v1h-1zM1031 328h1v1h-1zM1031 318h1v1h-1zM1031 308h1v1h-1zM1031 298h1v1h-1zM1031 288h1v1h-1zM1031 278h1v1h-1zM1031 268h1v1h-1zM1031 258h1v1h-1zM1031 248h1v1h-1zM1031 238h1v1h-1zM1031 228h1v1h-1zM1031 218h1v1h-1zM1031 208h1v1h-1zM1031 198h1v1h-1zM1031 188h1v1h-1zM1031 178h1v1h-1zM1031 168h1v1h-1zM1031 158h1v1h-1zM1031 148h1v1h-1zM1031 138h1v1h-1zM1031 128h1v1h-1zM1031 118h1v1h-1zM1031 108h1v1h-1zM1031 98h1v1h-1zM1031 88h1v1h-1zM1031 78h1v1h-1zM1031 68h1v1h-1zM1031 58h1v1h-1zM1031 48h1v1h-1zM1031 38h1v1h-1zM1031 28h1v1h-1zM1031 18h1v1h-1zM1031 8h1v1h-1zM1041 568h1v1h-1zM1041 558h1v1h-1zM1041 548h1v1h-1zM1041 538h1v1h-1zM1041 528h1v1h-1zM1041 518h1v1h-1zM1041 508h1v1h-1zM1041 498h1v1h-1zM1041 488h1v1h-1zM1041 478h1v1h-1zM1041 468h1v1h-1zM1041 458h1v1h-1zM1041 448h1v1h-1zM1041 438h1v1h-1zM1041 428h1v1h-1zM1041 418h1v1h-1zM1041 408h1v1h-1zM1041 398h1v1h-1zM1041 388h1v1h-1zM1041 378h1v1h-1zM1041 368h1v1h-1zM1041 358h1v1h-1zM1041 348h1v1h-1zM1041 338h1v1h-1zM1041 328h1v1h-1zM1041 318h1v1h-1zM1041 308h1v1h-1zM1041 298h1v1h-1zM1041 288h1v1h-1zM1041 278h1v1h-1zM1041 268h1v1h-1zM1041 258h1v1h-1zM1041 248h1v1h-1zM1041 238h1v1h-1zM1041 228h1v1h-1zM1041 218h1v1h-1zM1041 208h1v1h-1zM1041 198h1v1h-1zM1041 188h1v1h-1zM1041 178h1v1h-1zM1041 168h1v1h-1zM1041 158h1v1h-1zM1041 148h1v1h-1zM1041 138h1v1h-1zM1041 128h1v1h-1zM1041 118h1v1h-1zM1041 108h1v1h-1zM1041 98h1v1h-1zM1041 88h1v1h-1zM1041 78h1v1h-1zM1041 68h1v1h-1zM1041 58h1v1h-1zM1041 48h1v1h-1zM1041 38h1v1h-1zM1041 28h1v1h-1zM1041 18h1v1h-1zM1041 8h1v1h-1z" fill="#474747"/></svg><svg class="a" style="left:95px;top:155px;" width="1043" height="577" viewBox="95 155 1043 577"><g><rect x="216.5" y="353.5" width="800" height="180" fill="none" stroke="#fff" stroke-width="2.5"/><line x1="196" y1="443.5" x2="1036" y2="443.5" stroke="#9a4646" stroke-width="1.2" stroke-dasharray="18 6.5 2 6.5" stroke-dashoffset="1"/><line x1="316.5" y1="333" x2="316.5" y2="553" stroke="#ff1010" stroke-width="1.2" stroke-dasharray="18 6.5 2 6.5" stroke-dashoffset="14"/><line x1="916.5" y1="333" x2="916.5" y2="553" stroke="#ff1010" stroke-width="1.2" stroke-dasharray="18 6.5 2 6.5" stroke-dashoffset="14"/><circle cx="316.5" cy="443.5" r="40" fill="none" stroke="#cc5c5c" stroke-width="2.5"/><circle cx="916.5" cy="443.5" r="40" fill="none" stroke="#cc5c5c" stroke-width="2.5"/><text x="0" y="0" transform="translate(425.5 525) rotate(-90)" font-family="Liberation Sans" font-size="28" fill="#fff" stroke="#000" stroke-width="0.45">104.245.02.4B</text><rect x="311.5" y="398.5" width="10" height="10" fill="#0a82b4" stroke="#7890a0" stroke-width="0.7"/><rect x="311.5" y="478.5" width="10" height="10" fill="#0a82b4" stroke="#7890a0" stroke-width="0.7"/><rect x="271.5" y="438.5" width="10" height="10" fill="#0a82b4" stroke="#7890a0" stroke-width="0.7"/><rect x="351.5" y="438.5" width="10" height="10" fill="#0a82b4" stroke="#7890a0" stroke-width="0.7"/><circle cx="316.5" cy="443.5" r="5" fill="#0000b0" stroke="#8890a0" stroke-width="0.6"/><rect x="911.5" y="398.5" width="10" height="10" fill="#0a82b4" stroke="#7890a0" stroke-width="0.7"/><rect x="911.5" y="478.5" width="10" height="10" fill="#0a82b4" stroke="#7890a0" stroke-width="0.7"/><rect x="871.5" y="438.5" width="10" height="10" fill="#0a82b4" stroke="#7890a0" stroke-width="0.7"/><rect x="951.5" y="438.5" width="10" height="10" fill="#0a82b4" stroke="#7890a0" stroke-width="0.7"/><circle cx="916.5" cy="443.5" r="5" fill="#0000b0" stroke="#8890a0" stroke-width="0.6"/><rect x="191.5" y="438.5" width="10" height="10" fill="#0000b0" stroke="#7890a0" stroke-width="0.7"/><rect x="1031.5" y="438.5" width="10" height="10" fill="#c8102e" stroke="#7890a0" stroke-width="0.7"/><circle cx="196.5" cy="433.5" r="5" fill="none" stroke="#cc0000" stroke-width="1"/><path d="M191.5 433.5h10M196.5 428.5v10" stroke="#cc0000" stroke-width="1"/><path d="M96 533.5h40M116.5 513v40" stroke="#7a0a0a" stroke-width="1"/><g opacity="0.82"><circle cx="911" cy="364.7" r="38.3" fill="none" stroke="#7d90a2" stroke-width="1.6" opacity="0.75"/><circle cx="911" cy="364.7" r="36.3" fill="none" stroke="#5f7386" stroke-width="2.6"/><circle cx="911" cy="364.7" r="34.2" fill="none" stroke="#7a8ea0" stroke-width="1.2" opacity="0.8"/><circle cx="911" cy="364.7" r="32.6" fill="none" stroke="#4a5c6c" stroke-width="2.2"/><circle cx="911" cy="364.7" r="30.8" fill="none" stroke="#26323c" stroke-width="1.6" opacity="0.8"/></g><path d="M910.3 365.2 L910.3 388.8 L915.6 383.8 L920.3 394.6 L924.6 392.7 L920.1 382.3 L927.3 382 Z" fill="#fff" stroke="#fff" stroke-width="2.6" stroke-linejoin="round"/><path d="M910.3 365.2 L910.3 388.8 L915.6 383.8 L920.3 394.6 L924.6 392.7 L920.1 382.3 L927.3 382 Z" fill="#fff" stroke="#000" stroke-width="1.2" stroke-linejoin="round"/></g></svg><svg class="a" style="left:95px;top:132px;" width="1044" height="23" viewBox="95 132 1044 23"><rect x="76" y="148" width="1" height="7" fill="#505050"/><rect x="86" y="152" width="1" height="3" fill="#505050"/><text transform="translate(76 141) scale(0.9 1)" text-anchor="middle" font-family="Liberation Sans" font-size="9.5" fill="#000" stroke="#fff" stroke-width="1.6" paint-order="stroke">-4</text><rect x="96" y="148" width="1" height="7" fill="#505050"/><rect x="106" y="152" width="1" height="3" fill="#505050"/><text transform="translate(96 141) scale(0.9 1)" text-anchor="middle" font-family="Liberation Sans" font-size="9.5" fill="#000" stroke="#fff" stroke-width="1.6" paint-order="stroke">-2</text><rect x="116" y="148" width="1" height="7" fill="#505050"/><rect x="126" y="152" width="1" height="3" fill="#505050"/><text transform="translate(116 141) scale(0.9 1)" text-anchor="middle" font-family="Liberation Sans" font-size="9.5" fill="#000" stroke="#fff" stroke-width="1.6" paint-order="stroke">0</text><rect x="136" y="148" width="1" height="7" fill="#505050"/><rect x="146" y="152" width="1" height="3" fill="#505050"/><text transform="translate(136 141) scale(0.9 1)" text-anchor="middle" font-family="Liberation Sans" font-size="9.5" fill="#000" stroke="#fff" stroke-width="1.6" paint-order="stroke">2</text><rect x="156" y="148" width="1" height="7" fill="#505050"/><rect x="166" y="152" width="1" height="3" fill="#505050"/><text transform="translate(156 141) scale(0.9 1)" text-anchor="middle" font-family="Liberation Sans" font-size="9.5" fill="#000" stroke="#fff" stroke-width="1.6" paint-order="stroke">4</text><rect x="176" y="148" width="1" height="7" fill="#505050"/><rect x="186" y="152" width="1" height="3" fill="#505050"/><text transform="translate(176 141) scale(0.9 1)" text-anchor="middle" font-family="Liberation Sans" font-size="9.5" fill="#000" stroke="#fff" stroke-width="1.6" paint-order="stroke">6</text><rect x="196" y="148" width="1" height="7" fill="#505050"/><rect x="206" y="152" width="1" height="3" fill="#505050"/><text transform="translate(196 141) scale(0.9 1)" text-anchor="middle" font-family="Liberation Sans" font-size="9.5" fill="#000" stroke="#fff" stroke-width="1.6" paint-order="stroke">8</text><rect x="216" y="148" width="1" height="7" fill="#505050"/><rect x="226" y="152" width="1" height="3" fill="#505050"/><text transform="translate(216 141) scale(0.9 1)" text-anchor="middle" font-family="Liberation Sans" font-size="9.5" fill="#000" stroke="#fff" stroke-width="1.6" paint-order="stroke">10</text><rect x="236" y="148" width="1" height="7" fill="#505050"/><rect x="246" y="152" width="1" height="3" fill="#505050"/><text transform="translate(236 141) scale(0.9 1)" text-anchor="middle" font-family="Liberation Sans" font-size="9.5" fill="#000" stroke="#fff" stroke-width="1.6" paint-order="stroke">12</text><rect x="256" y="148" width="1" height="7" fill="#505050"/><rect x="266" y="152" width="1" height="3" fill="#505050"/><text transform="translate(256 141) scale(0.9 1)" text-anchor="middle" font-family="Liberation Sans" font-size="9.5" fill="#000" stroke="#fff" stroke-width="1.6" paint-order="stroke">14</text><rect x="276" y="148" width="1" height="7" fill="#505050"/><rect x="286" y="152" width="1" height="3" fill="#505050"/><text transform="translate(276 141) scale(0.9 1)" text-anchor="middle" font-family="Liberation Sans" font-size="9.5" fill="#000" stroke="#fff" stroke-width="1.6" paint-order="stroke">16</text><rect x="296" y="148" width="1" height="7" fill="#505050"/><rect x="306" y="152" width="1" height="3" fill="#505050"/><text transform="translate(296 141) scale(0.9 1)" text-anchor="middle" font-family="Liberation Sans" font-size="9.5" fill="#000" stroke="#fff" stroke-width="1.6" paint-order="stroke">18</text><rect x="316" y="148" width="1" height="7" fill="#505050"/><rect x="326" y="152" width="1" height="3" fill="#505050"/><text transform="translate(316 141) scale(0.9 1)" text-anchor="middle" font-family="Liberation Sans" font-size="9.5" fill="#000" stroke="#fff" stroke-width="1.6" paint-order="stroke">20</text><rect x="336" y="148" width="1" height="7" fill="#505050"/><rect x="346" y="152" width="1" height="3" fill="#505050"/><text transform="translate(336 141) scale(0.9 1)" text-anchor="middle" font-family="Liberation Sans" font-size="9.5" fill="#000" stroke="#fff" stroke-width="1.6" paint-order="stroke">22</text><rect x="356" y="148" width="1" height="7" fill="#505050"/><rect x="366" y="152" width="1" height="3" fill="#505050"/><text transform="translate(356 141) scale(0.9 1)" text-anchor="middle" font-family="Liberation Sans" font-size="9.5" fill="#000" stroke="#fff" stroke-width="1.6" paint-order="stroke">24</text><rect x="376" y="148" width="1" height="7" fill="#505050"/><rect x="386" y="152" width="1" height="3" fill="#505050"/><text transform="translate(376 141) scale(0.9 1)" text-anchor="middle" font-family="Liberation Sans" font-size="9.5" fill="#000" stroke="#fff" stroke-width="1.6" paint-order="stroke">26</text><rect x="396" y="148" width="1" height="7" fill="#505050"/><rect x="406" y="152" width="1" height="3" fill="#505050"/><text transform="translate(396 141) scale(0.9 1)" text-anchor="middle" font-family="Liberation Sans" font-size="9.5" fill="#000" stroke="#fff" stroke-width="1.6" paint-order="stroke">28</text><rect x="416" y="148" width="1" height="7" fill="#505050"/><rect x="426" y="152" width="1" height="3" fill="#505050"/><text transform="translate(416 141) scale(0.9 1)" text-anchor="middle" font-family="Liberation Sans" font-size="9.5" fill="#000" stroke="#fff" stroke-width="1.6" paint-order="stroke">30</text><rect x="436" y="148" width="1" height="7" fill="#505050"/><rect x="446" y="152" width="1" height="3" fill="#505050"/><text transform="translate(436 141) scale(0.9 1)" text-anchor="middle" font-family="Liberation Sans" font-size="9.5" fill="#000" stroke="#fff" stroke-width="1.6" paint-order="stroke">32</text><rect x="456" y="148" width="1" height="7" fill="#505050"/><rect x="466" y="152" width="1" height="3" fill="#505050"/><text transform="translate(456 141) scale(0.9 1)" text-anchor="middle" font-family="Liberation Sans" font-size="9.5" fill="#000" stroke="#fff" stroke-width="1.6" paint-order="stroke">34</text><rect x="476" y="148" width="1" height="7" fill="#505050"/><rect x="486" y="152" width="1" height="3" fill="#505050"/><text transform="translate(476 141) scale(0.9 1)" text-anchor="middle" font-family="Liberation Sans" font-size="9.5" fill="#000" stroke="#fff" stroke-width="1.6" paint-order="stroke">36</text><rect x="496" y="148" width="1" height="7" fill="#505050"/><rect x="506" y="152" width="1" height="3" fill="#505050"/><text transform="translate(496 141) scale(0.9 1)" text-anchor="middle" font-family="Liberation Sans" font-size="9.5" fill="#000" stroke="#fff" stroke-width="1.6" paint-order="stroke">38</text><rect x="516" y="148" width="1" height="7" fill="#505050"/><rect x="526" y="152" width="1" height="3" fill="#505050"/><text transform="translate(516 141) scale(0.9 1)" text-anchor="middle" font-family="Liberation Sans" font-size="9.5" fill="#000" stroke="#fff" stroke-width="1.6" paint-order="stroke">40</text><rect x="536" y="148" width="1" height="7" fill="#505050"/><rect x="546" y="152" width="1" height="3" fill="#505050"/><text transform="translate(536 141) scale(0.9 1)" text-anchor="middle" font-family="Liberation Sans" font-size="9.5" fill="#000" stroke="#fff" stroke-width="1.6" paint-order="stroke">42</text><rect x="556" y="148" width="1" height="7" fill="#505050"/><rect x="566" y="152" width="1" height="3" fill="#505050"/><text transform="translate(556 141) scale(0.9 1)" text-anchor="middle" font-family="Liberation Sans" font-size="9.5" fill="#000" stroke="#fff" stroke-width="1.6" paint-order="stroke">44</text><rect x="576" y="148" width="1" height="7" fill="#505050"/><rect x="586" y="152" width="1" height="3" fill="#505050"/><text transform="translate(576 141) scale(0.9 1)" text-anchor="middle" font-family="Liberation Sans" font-size="9.5" fill="#000" stroke="#fff" stroke-width="1.6" paint-order="stroke">46</text><rect x="596" y="148" width="1" height="7" fill="#505050"/><rect x="606" y="152" width="1" height="3" fill="#505050"/><text transform="translate(596 141) scale(0.9 1)" text-anchor="middle" font-family="Liberation Sans" font-size="9.5" fill="#000" stroke="#fff" stroke-width="1.6" paint-order="stroke">48</text><rect x="616" y="148" width="1" height="7" fill="#505050"/><rect x="626" y="152" width="1" height="3" fill="#505050"/><text transform="translate(616 141) scale(0.9 1)" text-anchor="middle" font-family="Liberation Sans" font-size="9.5" fill="#000" stroke="#fff" stroke-width="1.6" paint-order="stroke">50</text><rect x="636" y="148" width="1" height="7" fill="#505050"/><rect x="646" y="152" width="1" height="3" fill="#505050"/><text transform="translate(636 141) scale(0.9 1)" text-anchor="middle" font-family="Liberation Sans" font-size="9.5" fill="#000" stroke="#fff" stroke-width="1.6" paint-order="stroke">52</text><rect x="656" y="148" width="1" height="7" fill="#505050"/><rect x="666" y="152" width="1" height="3" fill="#505050"/><text transform="translate(656 141) scale(0.9 1)" text-anchor="middle" font-family="Liberation Sans" font-size="9.5" fill="#000" stroke="#fff" stroke-width="1.6" paint-order="stroke">54</text><rect x="676" y="148" width="1" height="7" fill="#505050"/><rect x="686" y="152" width="1" height="3" fill="#505050"/><text transform="translate(676 141) scale(0.9 1)" text-anchor="middle" font-family="Liberation Sans" font-size="9.5" fill="#000" stroke="#fff" stroke-width="1.6" paint-order="stroke">56</text><rect x="696" y="148" width="1" height="7" fill="#505050"/><rect x="706" y="152" width="1" height="3" fill="#505050"/><text transform="translate(696 141) scale(0.9 1)" text-anchor="middle" font-family="Liberation Sans" font-size="9.5" fill="#000" stroke="#fff" stroke-width="1.6" paint-order="stroke">58</text><rect x="716" y="148" width="1" height="7" fill="#505050"/><rect x="726" y="152" width="1" height="3" fill="#505050"/><text transform="translate(716 141) scale(0.9 1)" text-anchor="middle" font-family="Liberation Sans" font-size="9.5" fill="#000" stroke="#fff" stroke-width="1.6" paint-order="stroke">60</text><rect x="736" y="148" width="1" height="7" fill="#505050"/><rect x="746" y="152" width="1" height="3" fill="#505050"/><text transform="translate(736 141) scale(0.9 1)" text-anchor="middle" font-family="Liberation Sans" font-size="9.5" fill="#000" stroke="#fff" stroke-width="1.6" paint-order="stroke">62</text><rect x="756" y="148" width="1" height="7" fill="#505050"/><rect x="766" y="152" width="1" height="3" fill="#505050"/><text transform="translate(756 141) scale(0.9 1)" text-anchor="middle" font-family="Liberation Sans" font-size="9.5" fill="#000" stroke="#fff" stroke-width="1.6" paint-order="stroke">64</text><rect x="776" y="148" width="1" height="7" fill="#505050"/><rect x="786" y="152" width="1" height="3" fill="#505050"/><text transform="translate(776 141) scale(0.9 1)" text-anchor="middle" font-family="Liberation Sans" font-size="9.5" fill="#000" stroke="#fff" stroke-width="1.6" paint-order="stroke">66</text><rect x="796" y="148" width="1" height="7" fill="#505050"/><rect x="806" y="152" width="1" height="3" fill="#505050"/><text transform="translate(796 141) scale(0.9 1)" text-anchor="middle" font-family="Liberation Sans" font-size="9.5" fill="#000" stroke="#fff" stroke-width="1.6" paint-order="stroke">68</text><rect x="816" y="148" width="1" height="7" fill="#505050"/><rect x="826" y="152" width="1" height="3" fill="#505050"/><text transform="translate(816 141) scale(0.9 1)" text-anchor="middle" font-family="Liberation Sans" font-size="9.5" fill="#000" stroke="#fff" stroke-width="1.6" paint-order="stroke">70</text><rect x="836" y="148" width="1" height="7" fill="#505050"/><rect x="846" y="152" width="1" height="3" fill="#505050"/><text transform="translate(836 141) scale(0.9 1)" text-anchor="middle" font-family="Liberation Sans" font-size="9.5" fill="#000" stroke="#fff" stroke-width="1.6" paint-order="stroke">72</text><rect x="856" y="148" width="1" height="7" fill="#505050"/><rect x="866" y="152" width="1" height="3" fill="#505050"/><text transform="translate(856 141) scale(0.9 1)" text-anchor="middle" font-family="Liberation Sans" font-size="9.5" fill="#000" stroke="#fff" stroke-width="1.6" paint-order="stroke">74</text><rect x="876" y="148" width="1" height="7" fill="#505050"/><rect x="886" y="152" width="1" height="3" fill="#505050"/><text transform="translate(876 141) scale(0.9 1)" text-anchor="middle" font-family="Liberation Sans" font-size="9.5" fill="#000" stroke="#fff" stroke-width="1.6" paint-order="stroke">76</text><rect x="896" y="148" width="1" height="7" fill="#505050"/><rect x="906" y="152" width="1" height="3" fill="#505050"/><text transform="translate(896 141) scale(0.9 1)" text-anchor="middle" font-family="Liberation Sans" font-size="9.5" fill="#000" stroke="#fff" stroke-width="1.6" paint-order="stroke">78</text><rect x="916" y="148" width="1" height="7" fill="#505050"/><rect x="926" y="152" width="1" height="3" fill="#505050"/><text transform="translate(916 141) scale(0.9 1)" text-anchor="middle" font-family="Liberation Sans" font-size="9.5" fill="#000" stroke="#fff" stroke-width="1.6" paint-order="stroke">80</text><rect x="936" y="148" width="1" height="7" fill="#505050"/><rect x="946" y="152" width="1" height="3" fill="#505050"/><text transform="translate(936 141) scale(0.9 1)" text-anchor="middle" font-family="Liberation Sans" font-size="9.5" fill="#000" stroke="#fff" stroke-width="1.6" paint-order="stroke">82</text><rect x="956" y="148" width="1" height="7" fill="#505050"/><rect x="966" y="152" width="1" height="3" fill="#505050"/><text transform="translate(956 141) scale(0.9 1)" text-anchor="middle" font-family="Liberation Sans" font-size="9.5" fill="#000" stroke="#fff" stroke-width="1.6" paint-order="stroke">84</text><rect x="976" y="148" width="1" height="7" fill="#505050"/><rect x="986" y="152" width="1" height="3" fill="#505050"/><text transform="translate(976 141) scale(0.9 1)" text-anchor="middle" font-family="Liberation Sans" font-size="9.5" fill="#000" stroke="#fff" stroke-width="1.6" paint-order="stroke">86</text><rect x="996" y="148" width="1" height="7" fill="#505050"/><rect x="1006" y="152" width="1" height="3" fill="#505050"/><text transform="translate(996 141) scale(0.9 1)" text-anchor="middle" font-family="Liberation Sans" font-size="9.5" fill="#000" stroke="#fff" stroke-width="1.6" paint-order="stroke">88</text><rect x="1016" y="148" width="1" height="7" fill="#505050"/><rect x="1026" y="152" width="1" height="3" fill="#505050"/><text transform="translate(1016 141) scale(0.9 1)" text-anchor="middle" font-family="Liberation Sans" font-size="9.5" fill="#000" stroke="#fff" stroke-width="1.6" paint-order="stroke">90</text><rect x="1036" y="148" width="1" height="7" fill="#505050"/><rect x="1046" y="152" width="1" height="3" fill="#505050"/><text transform="translate(1036 141) scale(0.9 1)" text-anchor="middle" font-family="Liberation Sans" font-size="9.5" fill="#000" stroke="#fff" stroke-width="1.6" paint-order="stroke">92</text><rect x="1056" y="148" width="1" height="7" fill="#505050"/><rect x="1066" y="152" width="1" height="3" fill="#505050"/><text transform="translate(1056 141) scale(0.9 1)" text-anchor="middle" font-family="Liberation Sans" font-size="9.5" fill="#000" stroke="#fff" stroke-width="1.6" paint-order="stroke">94</text><rect x="1076" y="148" width="1" height="7" fill="#505050"/><rect x="1086" y="152" width="1" height="3" fill="#505050"/><text transform="translate(1076 141) scale(0.9 1)" text-anchor="middle" font-family="Liberation Sans" font-size="9.5" fill="#000" stroke="#fff" stroke-width="1.6" paint-order="stroke">96</text><rect x="1096" y="148" width="1" height="7" fill="#505050"/><rect x="1106" y="152" width="1" height="3" fill="#505050"/><text transform="translate(1096 141) scale(0.9 1)" text-anchor="middle" font-family="Liberation Sans" font-size="9.5" fill="#000" stroke="#fff" stroke-width="1.6" paint-order="stroke">98</text><rect x="1116" y="148" width="1" height="7" fill="#505050"/><rect x="1126" y="152" width="1" height="3" fill="#505050"/><text transform="translate(1116 141) scale(0.9 1)" text-anchor="middle" font-family="Liberation Sans" font-size="9.5" fill="#000" stroke="#fff" stroke-width="1.6" paint-order="stroke">100</text><rect x="1136" y="148" width="1" height="7" fill="#505050"/><rect x="1146" y="152" width="1" height="3" fill="#505050"/><text transform="translate(1136 141) scale(0.9 1)" text-anchor="middle" font-family="Liberation Sans" font-size="9.5" fill="#000" stroke="#fff" stroke-width="1.6" paint-order="stroke">102</text></svg><svg class="a" style="left:72px;top:155px;" width="23" height="577" viewBox="72 155 23 577"><rect x="88" y="753" width="7" height="1" fill="#505050"/><rect x="92" y="743" width="3" height="1" fill="#505050"/><text transform="translate(81 753.5) rotate(-90) scale(0.9 1)" text-anchor="middle" font-family="Liberation Sans" font-size="9.5" fill="#000" stroke="#fff" stroke-width="1.6" paint-order="stroke">-22</text><rect x="88" y="733" width="7" height="1" fill="#505050"/><rect x="92" y="723" width="3" height="1" fill="#505050"/><text transform="translate(81 733.5) rotate(-90) scale(0.9 1)" text-anchor="middle" font-family="Liberation Sans" font-size="9.5" fill="#000" stroke="#fff" stroke-width="1.6" paint-order="stroke">-20</text><rect x="88" y="713" width="7" height="1" fill="#505050"/><rect x="92" y="703" width="3" height="1" fill="#505050"/><text transform="translate(81 713.5) rotate(-90) scale(0.9 1)" text-anchor="middle" font-family="Liberation Sans" font-size="9.5" fill="#000" stroke="#fff" stroke-width="1.6" paint-order="stroke">-18</text><rect x="88" y="693" width="7" height="1" fill="#505050"/><rect x="92" y="683" width="3" height="1" fill="#505050"/><text transform="translate(81 693.5) rotate(-90) scale(0.9 1)" text-anchor="middle" font-family="Liberation Sans" font-size="9.5" fill="#000" stroke="#fff" stroke-width="1.6" paint-order="stroke">-16</text><rect x="88" y="673" width="7" height="1" fill="#505050"/><rect x="92" y="663" width="3" height="1" fill="#505050"/><text transform="translate(81 673.5) rotate(-90) scale(0.9 1)" text-anchor="middle" font-family="Liberation Sans" font-size="9.5" fill="#000" stroke="#fff" stroke-width="1.6" paint-order="stroke">-14</text><rect x="88" y="653" width="7" height="1" fill="#505050"/><rect x="92" y="643" width="3" height="1" fill="#505050"/><text transform="translate(81 653.5) rotate(-90) scale(0.9 1)" text-anchor="middle" font-family="Liberation Sans" font-size="9.5" fill="#000" stroke="#fff" stroke-width="1.6" paint-order="stroke">-12</text><rect x="88" y="633" width="7" height="1" fill="#505050"/><rect x="92" y="623" width="3" height="1" fill="#505050"/><text transform="translate(81 633.5) rotate(-90) scale(0.9 1)" text-anchor="middle" font-family="Liberation Sans" font-size="9.5" fill="#000" stroke="#fff" stroke-width="1.6" paint-order="stroke">-10</text><rect x="88" y="613" width="7" height="1" fill="#505050"/><rect x="92" y="603" width="3" height="1" fill="#505050"/><text transform="translate(81 613.5) rotate(-90) scale(0.9 1)" text-anchor="middle" font-family="Liberation Sans" font-size="9.5" fill="#000" stroke="#fff" stroke-width="1.6" paint-order="stroke">-8</text><rect x="88" y="593" width="7" height="1" fill="#505050"/><rect x="92" y="583" width="3" height="1" fill="#505050"/><text transform="translate(81 593.5) rotate(-90) scale(0.9 1)" text-anchor="middle" font-family="Liberation Sans" font-size="9.5" fill="#000" stroke="#fff" stroke-width="1.6" paint-order="stroke">-6</text><rect x="88" y="573" width="7" height="1" fill="#505050"/><rect x="92" y="563" width="3" height="1" fill="#505050"/><text transform="translate(81 573.5) rotate(-90) scale(0.9 1)" text-anchor="middle" font-family="Liberation Sans" font-size="9.5" fill="#000" stroke="#fff" stroke-width="1.6" paint-order="stroke">-4</text><rect x="88" y="553" width="7" height="1" fill="#505050"/><rect x="92" y="543" width="3" height="1" fill="#505050"/><text transform="translate(81 553.5) rotate(-90) scale(0.9 1)" text-anchor="middle" font-family="Liberation Sans" font-size="9.5" fill="#000" stroke="#fff" stroke-width="1.6" paint-order="stroke">-2</text><rect x="88" y="533" width="7" height="1" fill="#505050"/><rect x="92" y="523" width="3" height="1" fill="#505050"/><text transform="translate(81 533.5) rotate(-90) scale(0.9 1)" text-anchor="middle" font-family="Liberation Sans" font-size="9.5" fill="#000" stroke="#fff" stroke-width="1.6" paint-order="stroke">0</text><rect x="88" y="513" width="7" height="1" fill="#505050"/><rect x="92" y="503" width="3" height="1" fill="#505050"/><text transform="translate(81 513.5) rotate(-90) scale(0.9 1)" text-anchor="middle" font-family="Liberation Sans" font-size="9.5" fill="#000" stroke="#fff" stroke-width="1.6" paint-order="stroke">2</text><rect x="88" y="493" width="7" height="1" fill="#505050"/><rect x="92" y="483" width="3" height="1" fill="#505050"/><text transform="translate(81 493.5) rotate(-90) scale(0.9 1)" text-anchor="middle" font-family="Liberation Sans" font-size="9.5" fill="#000" stroke="#fff" stroke-width="1.6" paint-order="stroke">4</text><rect x="88" y="473" width="7" height="1" fill="#505050"/><rect x="92" y="463" width="3" height="1" fill="#505050"/><text transform="translate(81 473.5) rotate(-90) scale(0.9 1)" text-anchor="middle" font-family="Liberation Sans" font-size="9.5" fill="#000" stroke="#fff" stroke-width="1.6" paint-order="stroke">6</text><rect x="88" y="453" width="7" height="1" fill="#505050"/><rect x="92" y="443" width="3" height="1" fill="#505050"/><text transform="translate(81 453.5) rotate(-90) scale(0.9 1)" text-anchor="middle" font-family="Liberation Sans" font-size="9.5" fill="#000" stroke="#fff" stroke-width="1.6" paint-order="stroke">8</text><rect x="88" y="433" width="7" height="1" fill="#505050"/><rect x="92" y="423" width="3" height="1" fill="#505050"/><text transform="translate(81 433.5) rotate(-90) scale(0.9 1)" text-anchor="middle" font-family="Liberation Sans" font-size="9.5" fill="#000" stroke="#fff" stroke-width="1.6" paint-order="stroke">10</text><rect x="88" y="413" width="7" height="1" fill="#505050"/><rect x="92" y="403" width="3" height="1" fill="#505050"/><text transform="translate(81 413.5) rotate(-90) scale(0.9 1)" text-anchor="middle" font-family="Liberation Sans" font-size="9.5" fill="#000" stroke="#fff" stroke-width="1.6" paint-order="stroke">12</text><rect x="88" y="393" width="7" height="1" fill="#505050"/><rect x="92" y="383" width="3" height="1" fill="#505050"/><text transform="translate(81 393.5) rotate(-90) scale(0.9 1)" text-anchor="middle" font-family="Liberation Sans" font-size="9.5" fill="#000" stroke="#fff" stroke-width="1.6" paint-order="stroke">14</text><rect x="88" y="373" width="7" height="1" fill="#505050"/><rect x="92" y="363" width="3" height="1" fill="#505050"/><text transform="translate(81 373.5) rotate(-90) scale(0.9 1)" text-anchor="middle" font-family="Liberation Sans" font-size="9.5" fill="#000" stroke="#fff" stroke-width="1.6" paint-order="stroke">16</text><rect x="88" y="353" width="7" height="1" fill="#505050"/><rect x="92" y="343" width="3" height="1" fill="#505050"/><text transform="translate(81 353.5) rotate(-90) scale(0.9 1)" text-anchor="middle" font-family="Liberation Sans" font-size="9.5" fill="#000" stroke="#fff" stroke-width="1.6" paint-order="stroke">18</text><rect x="88" y="333" width="7" height="1" fill="#505050"/><rect x="92" y="323" width="3" height="1" fill="#505050"/><text transform="translate(81 333.5) rotate(-90) scale(0.9 1)" text-anchor="middle" font-family="Liberation Sans" font-size="9.5" fill="#000" stroke="#fff" stroke-width="1.6" paint-order="stroke">20</text><rect x="88" y="313" width="7" height="1" fill="#505050"/><rect x="92" y="303" width="3" height="1" fill="#505050"/><text transform="translate(81 313.5) rotate(-90) scale(0.9 1)" text-anchor="middle" font-family="Liberation Sans" font-size="9.5" fill="#000" stroke="#fff" stroke-width="1.6" paint-order="stroke">22</text><rect x="88" y="293" width="7" height="1" fill="#505050"/><rect x="92" y="283" width="3" height="1" fill="#505050"/><text transform="translate(81 293.5) rotate(-90) scale(0.9 1)" text-anchor="middle" font-family="Liberation Sans" font-size="9.5" fill="#000" stroke="#fff" stroke-width="1.6" paint-order="stroke">24</text><rect x="88" y="273" width="7" height="1" fill="#505050"/><rect x="92" y="263" width="3" height="1" fill="#505050"/><text transform="translate(81 273.5) rotate(-90) scale(0.9 1)" text-anchor="middle" font-family="Liberation Sans" font-size="9.5" fill="#000" stroke="#fff" stroke-width="1.6" paint-order="stroke">26</text><rect x="88" y="253" width="7" height="1" fill="#505050"/><rect x="92" y="243" width="3" height="1" fill="#505050"/><text transform="translate(81 253.5) rotate(-90) scale(0.9 1)" text-anchor="middle" font-family="Liberation Sans" font-size="9.5" fill="#000" stroke="#fff" stroke-width="1.6" paint-order="stroke">28</text><rect x="88" y="233" width="7" height="1" fill="#505050"/><rect x="92" y="223" width="3" height="1" fill="#505050"/><text transform="translate(81 233.5) rotate(-90) scale(0.9 1)" text-anchor="middle" font-family="Liberation Sans" font-size="9.5" fill="#000" stroke="#fff" stroke-width="1.6" paint-order="stroke">30</text><rect x="88" y="213" width="7" height="1" fill="#505050"/><rect x="92" y="203" width="3" height="1" fill="#505050"/><text transform="translate(81 213.5) rotate(-90) scale(0.9 1)" text-anchor="middle" font-family="Liberation Sans" font-size="9.5" fill="#000" stroke="#fff" stroke-width="1.6" paint-order="stroke">32</text><rect x="88" y="193" width="7" height="1" fill="#505050"/><rect x="92" y="183" width="3" height="1" fill="#505050"/><text transform="translate(81 193.5) rotate(-90) scale(0.9 1)" text-anchor="middle" font-family="Liberation Sans" font-size="9.5" fill="#000" stroke="#fff" stroke-width="1.6" paint-order="stroke">34</text><rect x="88" y="173" width="7" height="1" fill="#505050"/><rect x="92" y="163" width="3" height="1" fill="#505050"/><text transform="translate(81 173.5) rotate(-90) scale(0.9 1)" text-anchor="middle" font-family="Liberation Sans" font-size="9.5" fill="#000" stroke="#fff" stroke-width="1.6" paint-order="stroke">36</text><rect x="88" y="153" width="7" height="1" fill="#505050"/><rect x="92" y="143" width="3" height="1" fill="#505050"/><text transform="translate(81 153.5) rotate(-90) scale(0.9 1)" text-anchor="middle" font-family="Liberation Sans" font-size="9.5" fill="#000" stroke="#fff" stroke-width="1.6" paint-order="stroke">38</text></svg><div class="a" style="left:72px;top:748px;width:1081px;height:2px;background:#c4c4c4;"></div><div class="a" style="left:72px;top:750px;width:1081px;height:20px;background:#fff;"></div><div class="a" style="left:72px;top:770px;width:1081px;height:1px;background:#cfcfcf;"></div><div class="a" style="left:72px;top:771px;width:1081px;height:27px;background:#ececec;"></div><div class="t" style="left:76.5px;top:751px;font-size:13.3px;color:#1010d0;-webkit-text-stroke:0.25px #1010d0;"><i>Kommando:</i> preferences</div><div class="t" style="left:73px;top:779px;font-size:13px;color:#000;-webkit-text-stroke:0.15px #000;">Kommando:</div><div class="a" style="left:148px;top:776px;width:978px;height:18px;background:#fff;"></div><div class="a" style="left:1127px;top:771px;width:25px;height:26px;background:linear-gradient(#f6f6f6,#e4e4e4);border:1px solid #bdbdbd;box-sizing:border-box;"></div><div class="a" style="left:1132px;top:779px;width:14px;height:11px;border:1px solid #111;border-top:3px solid #111;box-sizing:border-box;background:#fff;"></div><div class="a" style="left:1099px;top:732px;width:54px;height:16px;background:#e8e8e8;"></div><div class="t" style="right:347px;top:734px;font-size:12px;color:#111;">1 &lt; 10</div><div class="a" style="left:280px;top:736px;width:634px;height:9px;border-radius:5px;background:#7d7d7d;"></div><div class="a" style="left:1143px;top:283px;width:8px;height:322px;border-radius:4px;background:#7d7d7d;"></div><div class="a" style="left:0;top:798px;width:1500px;height:46px;background:#dcdcdc;"></div><div class="a" style="left:0;top:798px;width:1500px;height:1px;background:#c8c8c8;"></div><div class="t" style="left:2px;top:807px;font-size:9.5px;color:#111;letter-spacing:0.35px;">79.4325,16.7454</div><div class="t" style="left:2px;top:827px;font-size:9.5px;color:#111;letter-spacing:0.35px;">@71.4325,6.7454</div><div class="a" style="left:253px;top:802px;width:1px;height:40px;background:#8a8a8a;"></div><div class="t" style="left:256px;top:807px;font-size:9.5px;color:#111;letter-spacing:0.35px;">81.1784&lt;12°</div><div class="t" style="left:256px;top:827px;font-size:9.5px;color:#111;letter-spacing:0.35px;">@71.7503&lt;5°</div><div class="t" style="right:800px;top:812px;font-size:9.5px;color:#111;letter-spacing:0.35px;text-align:right;">Element oder Bereich selektieren</div><div class="t" style="right:800px;top:823px;font-size:9.5px;color:#111;letter-spacing:0.35px;text-align:right;">Element oder Referenzpunkt verschieben</div><div class="t" style="left:949px;top:812px;font-size:9.5px;color:#111;letter-spacing:0.35px;">Selektierte Objekte:</div><div class="t" style="left:949px;top:823px;font-size:9.5px;color:#111;letter-spacing:0.35px;">3 Objekte auf 2 Layer.</div><div class="a" style="left:506px;top:819px;width:6px;height:6px;border-radius:3px;background:#c4c4c4;"></div><div class="a" style="left:940px;top:819px;width:6px;height:6px;border-radius:3px;background:#c4c4c4;"></div><div class="a" style="left:1269px;top:819px;width:6px;height:6px;border-radius:3px;background:#c4c4c4;"></div><svg class="a" style="left:716px;top:805px;" width="22" height="33" viewBox="0 0 22 33"><path d="M11 1.5C5 1.5 2 5 2 11v11c0 6 4 10 9 10s9-4 9-10V11c0-6-3-9.5-9-9.5z" fill="#fff" stroke="#555" stroke-width="1"/><path d="M2 13.5h18" stroke="#555" stroke-width="1"/><path d="M11 2v11.5" stroke="#555" stroke-width="0.8"/><rect x="9.3" y="4" width="3.4" height="7" rx="1.7" fill="#fff" stroke="#555" stroke-width="0.8"/></svg><div class="a" style="left:1153px;top:108px;width:2px;height:690px;background:#bdbdbd;"></div><div class="a" style="left:1155px;top:108px;width:300px;height:22px;background:linear-gradient(#ececec,#e2e2e2);"></div><div class="t" style="left:1322px;top:114px;font-size:11px;transform:translateX(-50%);color:#222;">Layerliste</div><svg class="a" style="left:1156px;top:110px;" width="36" height="16" viewBox="0 0 36 16"><circle cx="8" cy="8" r="7" fill="#6e6e6e"/><path d="M5.2 5.2l5.6 5.6M10.8 5.2l-5.6 5.6" stroke="#e8e8e8" stroke-width="1.8"/><circle cx="26" cy="8" r="7" fill="#6e6e6e"/><rect x="22.3" y="7.3" width="5.5" height="4.5" fill="none" stroke="#e8e8e8" stroke-width="1.1"/><path d="M24.3 7.3V4.8h5v4.5h-1.5" fill="none" stroke="#e8e8e8" stroke-width="1.1"/></svg><div class="a" style="left:1155px;top:130px;width:300px;height:26px;background:#c0c0c0;"></div><div class="a" style="left:1156.8px;top:131.5px;width:57.3px;height:23.3px;background:linear-gradient(#f9f9f9,#ebebeb);"></div><div class="a" style="left:1216.7px;top:131.5px;width:57.3px;height:23.3px;background:linear-gradient(#f9f9f9,#ebebeb);"></div><div class="a" style="left:1276.6px;top:131.5px;width:57.3px;height:23.3px;background:linear-gradient(#f9f9f9,#ebebeb);"></div><div class="a" style="left:1336.5px;top:131.5px;width:57.3px;height:23.3px;background:linear-gradient(#f9f9f9,#ebebeb);"></div><div class="a" style="left:1396.4px;top:131.5px;width:57.3px;height:23.3px;background:linear-gradient(#f9f9f9,#ebebeb);"></div><div class="a" style="left:1155px;top:156px;width:299px;height:642px;background:#fff;border-left:1px solid #bcbcbc;box-sizing:border-box;"></div><svg class="a" style="left:1176px;top:136px;" width="18" height="14" viewBox="-9 -7 18 14"><path d="M-7.8 0.2C-6.5-3.5-3.5-5.6 0-5.6S6.5-3.5 7.8 0.2C6.5 3.8 3.5 5.6 0 5.6S-6.5 3.8-7.8 0.2z" fill="#000"/><path d="M-4.8-0.6C-4.6 2.6-2.5 4 0 4S4.6 2.6 4.8-0.6C3.8 1.6 2 2.6 0 2.6S-3.8 1.6-4.8-0.6z" fill="#fff"/><path d="M-4.8-0.6C-4.3 1.3-3.2 2.4-2 2.8L-2.8-1.2z M4.8-0.6C4.3 1.3 3.2 2.4 2 2.8L2.8-1.2z" fill="#fff"/><circle cx="-0.8" cy="-1.3" r="0.8" fill="#888"/></svg><svg class="a" style="left:1236px;top:136px;" width="18" height="14" viewBox="-9 -7 18 14"><path d="M-7.8 0.2C-6.5-3.5-3.5-5.6 0-5.6S6.5-3.5 7.8 0.2C6.5 3.8 3.5 5.6 0 5.6S-6.5 3.8-7.8 0.2z" fill="#a8a8a8"/><path d="M-4.8-0.6C-4.6 2.6-2.5 4 0 4S4.6 2.6 4.8-0.6C3.8 1.6 2 2.6 0 2.6S-3.8 1.6-4.8-0.6z" fill="#fff"/><path d="M-4.8-0.6C-4.3 1.3-3.2 2.4-2 2.8L-2.8-1.2z M4.8-0.6C4.3 1.3 3.2 2.4 2 2.8L2.8-1.2z" fill="#fff"/><circle cx="-0.8" cy="-1.3" r="0.8" fill="#888"/></svg><svg class="a" style="left:1298px;top:136px;" width="14" height="14" viewBox="0 0 14 14"><path d="M5.2 0.5h3.6v4.7h4.7v3.6H8.8v4.7H5.2V8.8H0.5V5.2h4.7z" fill="#e00000" stroke="#900" stroke-width="0.4"/></svg><svg class="a" style="left:1357px;top:140px;" width="16" height="6" viewBox="0 0 16 6"><rect x="1.5" y="1" width="13" height="4" fill="#e00000" stroke="#900" stroke-width="0.4"/></svg><svg class="a" style="left:0;top:0;" width="1500" height="844" viewBox="0 0 1500 844" ><line x1="1418.5" y1="149.5" x2="1432" y2="136" stroke="#c8961e" stroke-width="3.2" stroke-linecap="butt"/><line x1="1418.5" y1="149.5" x2="1420.525" y2="147.475" stroke="#5a4020" stroke-width="2"/><line x1="1429.57" y1="138.43" x2="1432" y2="136" stroke="#e02020" stroke-width="3.4"/></svg><div class="a" style="left:1161px;top:163px;width:16px;height:9px;background:#fff;border:1px solid #111;box-sizing:border-box;"></div><div class="t" style="left:1183px;top:160px;font-size:13px;color:#111;">0</div><svg class="a" style="left:1414px;top:160px;" width="18" height="14" viewBox="-9 -7 18 14"><path d="M-7.8 0.2C-6.5-3.5-3.5-5.6 0-5.6S6.5-3.5 7.8 0.2C6.5 3.8 3.5 5.6 0 5.6S-6.5 3.8-7.8 0.2z" fill="#000"/><path d="M-4.8-0.6C-4.6 2.6-2.5 4 0 4S4.6 2.6 4.8-0.6C3.8 1.6 2 2.6 0 2.6S-3.8 1.6-4.8-0.6z" fill="#fff"/><path d="M-4.8-0.6C-4.3 1.3-3.2 2.4-2 2.8L-2.8-1.2z M4.8-0.6C4.3 1.3 3.2 2.4 2 2.8L2.8-1.2z" fill="#fff"/><circle cx="-0.8" cy="-1.3" r="0.8" fill="#888"/></svg><svg class="a" style="left:1438px;top:160px;" width="14" height="14" viewBox="0 0 14 14"><path d="M3.5 6.5V4.5a3.5 3.5 0 0 1 7 0V6.5" fill="none" stroke="#b8b8b8" stroke-width="1.6"/><rect x="2" y="6.5" width="10" height="7" fill="#b6b6b6"/></svg><div class="a" style="left:1161px;top:183px;width:16px;height:9px;background:#ff0000;border:1px solid #111;box-sizing:border-box;"></div><div class="t" style="left:1183px;top:180px;font-size:13px;color:#111;">Center</div><svg class="a" style="left:1414px;top:180px;" width="18" height="14" viewBox="-9 -7 18 14"><path d="M-7.8 0.2C-6.5-3.5-3.5-5.6 0-5.6S6.5-3.5 7.8 0.2C6.5 3.8 3.5 5.6 0 5.6S-6.5 3.8-7.8 0.2z" fill="#000"/><path d="M-4.8-0.6C-4.6 2.6-2.5 4 0 4S4.6 2.6 4.8-0.6C3.8 1.6 2 2.6 0 2.6S-3.8 1.6-4.8-0.6z" fill="#fff"/><path d="M-4.8-0.6C-4.3 1.3-3.2 2.4-2 2.8L-2.8-1.2z M4.8-0.6C4.3 1.3 3.2 2.4 2 2.8L2.8-1.2z" fill="#fff"/><circle cx="-0.8" cy="-1.3" r="0.8" fill="#888"/></svg><svg class="a" style="left:1438px;top:180px;" width="14" height="14" viewBox="0 0 14 14"><path d="M3.5 6.5V4.5a3.5 3.5 0 0 1 7 0V6.5" fill="none" stroke="#b8b8b8" stroke-width="1.6"/><rect x="2" y="6.5" width="10" height="7" fill="#b6b6b6"/></svg><div class="a" style="left:1161px;top:203px;width:16px;height:9px;background:#000;border:1px solid #111;box-sizing:border-box;"></div><div class="t" style="left:1183px;top:200px;font-size:13px;color:#111;">Hidden</div><svg class="a" style="left:1414px;top:200px;" width="18" height="14" viewBox="-9 -7 18 14"><path d="M-7.8 0.2C-6.5-3.5-3.5-5.6 0-5.6S6.5-3.5 7.8 0.2C6.5 3.8 3.5 5.6 0 5.6S-6.5 3.8-7.8 0.2z" fill="#000"/><path d="M-4.8-0.6C-4.6 2.6-2.5 4 0 4S4.6 2.6 4.8-0.6C3.8 1.6 2 2.6 0 2.6S-3.8 1.6-4.8-0.6z" fill="#fff"/><path d="M-4.8-0.6C-4.3 1.3-3.2 2.4-2 2.8L-2.8-1.2z M4.8-0.6C4.3 1.3 3.2 2.4 2 2.8L2.8-1.2z" fill="#fff"/><circle cx="-0.8" cy="-1.3" r="0.8" fill="#888"/></svg><svg class="a" style="left:1438px;top:200px;" width="14" height="14" viewBox="0 0 14 14"><path d="M3.5 6.5V4.5a3.5 3.5 0 0 1 7 0V6.5" fill="none" stroke="#b8b8b8" stroke-width="1.6"/><rect x="2" y="6.5" width="10" height="7" fill="#b6b6b6"/></svg><div class="a" style="left:1161px;top:223px;width:16px;height:9px;background:#fff;border:1px solid #111;box-sizing:border-box;"></div><div class="t" style="left:1183px;top:220px;font-size:13px;color:#111;">Visible</div><svg class="a" style="left:1414px;top:220px;" width="18" height="14" viewBox="-9 -7 18 14"><path d="M-7.8 0.2C-6.5-3.5-3.5-5.6 0-5.6S6.5-3.5 7.8 0.2C6.5 3.8 3.5 5.6 0 5.6S-6.5 3.8-7.8 0.2z" fill="#000"/><path d="M-4.8-0.6C-4.6 2.6-2.5 4 0 4S4.6 2.6 4.8-0.6C3.8 1.6 2 2.6 0 2.6S-3.8 1.6-4.8-0.6z" fill="#fff"/><path d="M-4.8-0.6C-4.3 1.3-3.2 2.4-2 2.8L-2.8-1.2z M4.8-0.6C4.3 1.3 3.2 2.4 2 2.8L2.8-1.2z" fill="#fff"/><circle cx="-0.8" cy="-1.3" r="0.8" fill="#888"/></svg><svg class="a" style="left:1438px;top:220px;" width="14" height="14" viewBox="0 0 14 14"><path d="M3.5 6.5V4.5a3.5 3.5 0 0 1 7 0V6.5" fill="none" stroke="#b8b8b8" stroke-width="1.6"/><rect x="2" y="6.5" width="10" height="7" fill="#b6b6b6"/></svg><svg class="a" style="left:0;top:0;" width="1500" height="844" viewBox="0 0 1500 844" ><line x1="1395" y1="231.5" x2="1406.5" y2="221" stroke="#c8961e" stroke-width="3.2" stroke-linecap="butt"/><line x1="1395" y1="231.5" x2="1396.725" y2="229.925" stroke="#5a4020" stroke-width="2"/><line x1="1404.43" y1="222.89" x2="1406.5" y2="221" stroke="#e02020" stroke-width="3.4"/></svg><div class="a" style="left:1454px;top:108px;width:1px;height:690px;background:#bcbcbc;"></div><div class="a" style="left:1455px;top:108px;width:45px;height:690px;background:linear-gradient(90deg,#f2f2f2,#c8c8c8);"></div><svg class="a" style="left:0;top:0;" width="1500" height="108" viewBox="0 0 1500 108"><defs>
<linearGradient id="gBlue" x1="0" y1="0" x2="0" y2="1"><stop offset="0" stop-color="#9cc4f4"/><stop offset="0.5" stop-color="#6a9edc"/><stop offset="1" stop-color="#7ab0ee"/></linearGradient>
<linearGradient id="gFloppy" x1="0" y1="0" x2="1" y2="0"><stop offset="0" stop-color="#8ab8f8"/><stop offset="0.5" stop-color="#5c98f0"/><stop offset="1" stop-color="#3a7ae8"/></linearGradient>
<linearGradient id="gPage" x1="0" y1="0" x2="1" y2="1"><stop offset="0" stop-color="#ffffff"/><stop offset="1" stop-color="#e6e6e6"/></linearGradient>
<linearGradient id="gFold" x1="0" y1="0" x2="0" y2="1"><stop offset="0" stop-color="#8cb4e4"/><stop offset="1" stop-color="#5a8ed0"/></linearGradient>
<linearGradient id="gUndo" x1="0" y1="0" x2="1" y2="1"><stop offset="0" stop-color="#8ed47a"/><stop offset="1" stop-color="#2e9a3e"/></linearGradient>
<linearGradient id="gRedo" x1="1" y1="0" x2="0" y2="1"><stop offset="0" stop-color="#c4e4b4"/><stop offset="1" stop-color="#80c090"/></linearGradient>
<radialGradient id="gGlow"><stop offset="0" stop-color="#ffffe0"/><stop offset="0.35" stop-color="#f2ec30"/><stop offset="1" stop-color="#f2ec30" stop-opacity="0"/></radialGradient>
<linearGradient id="gPrinter" x1="0" y1="0" x2="0" y2="1"><stop offset="0" stop-color="#f4f4f4"/><stop offset="1" stop-color="#c8c8c8"/></linearGradient>
</defs><rect x="7" y="32" width="2" height="2" fill="#a4a4a4"/><rect x="7" y="38" width="2" height="2" fill="#a4a4a4"/><rect x="7" y="44" width="2" height="2" fill="#a4a4a4"/><rect x="7" y="50" width="2" height="2" fill="#a4a4a4"/><rect x="7" y="56" width="2" height="2" fill="#a4a4a4"/><rect x="88" y="32" width="2" height="2" fill="#a4a4a4"/><rect x="88" y="38" width="2" height="2" fill="#a4a4a4"/><rect x="88" y="44" width="2" height="2" fill="#a4a4a4"/><rect x="88" y="50" width="2" height="2" fill="#a4a4a4"/><rect x="88" y="56" width="2" height="2" fill="#a4a4a4"/><rect x="403" y="32" width="2" height="2" fill="#a4a4a4"/><rect x="403" y="38" width="2" height="2" fill="#a4a4a4"/><rect x="403" y="44" width="2" height="2" fill="#a4a4a4"/><rect x="403" y="50" width="2" height="2" fill="#a4a4a4"/><rect x="403" y="56" width="2" height="2" fill="#a4a4a4"/><rect x="708" y="32" width="2" height="2" fill="#a4a4a4"/><rect x="708" y="38" width="2" height="2" fill="#a4a4a4"/><rect x="708" y="44" width="2" height="2" fill="#a4a4a4"/><rect x="708" y="50" width="2" height="2" fill="#a4a4a4"/><rect x="708" y="56" width="2" height="2" fill="#a4a4a4"/><rect x="187.0" y="27" width="1" height="1" fill="#6a6a6a"/><rect x="187.0" y="30" width="1" height="1" fill="#6a6a6a"/><rect x="187.0" y="33" width="1" height="1" fill="#6a6a6a"/><rect x="187.0" y="36" width="1" height="1" fill="#6a6a6a"/><rect x="187.0" y="39" width="1" height="1" fill="#6a6a6a"/><rect x="187.0" y="42" width="1" height="1" fill="#6a6a6a"/><rect x="187.0" y="45" width="1" height="1" fill="#6a6a6a"/><rect x="187.0" y="48" width="1" height="1" fill="#6a6a6a"/><rect x="187.0" y="51" width="1" height="1" fill="#6a6a6a"/><rect x="187.0" y="54" width="1" height="1" fill="#6a6a6a"/><rect x="187.0" y="57" width="1" height="1" fill="#6a6a6a"/><rect x="187.0" y="60" width="1" height="1" fill="#6a6a6a"/><rect x="187.0" y="63" width="1" height="1" fill="#6a6a6a"/><rect x="289.0" y="27" width="1" height="1" fill="#6a6a6a"/><rect x="289.0" y="30" width="1" height="1" fill="#6a6a6a"/><rect x="289.0" y="33" width="1" height="1" fill="#6a6a6a"/><rect x="289.0" y="36" width="1" height="1" fill="#6a6a6a"/><rect x="289.0" y="39" width="1" height="1" fill="#6a6a6a"/><rect x="289.0" y="42" width="1" height="1" fill="#6a6a6a"/><rect x="289.0" y="45" width="1" height="1" fill="#6a6a6a"/><rect x="289.0" y="48" width="1" height="1" fill="#6a6a6a"/><rect x="289.0" y="51" width="1" height="1" fill="#6a6a6a"/><rect x="289.0" y="54" width="1" height="1" fill="#6a6a6a"/><rect x="289.0" y="57" width="1" height="1" fill="#6a6a6a"/><rect x="289.0" y="60" width="1" height="1" fill="#6a6a6a"/><rect x="289.0" y="63" width="1" height="1" fill="#6a6a6a"/><rect x="345.0" y="27" width="1" height="1" fill="#6a6a6a"/><rect x="345.0" y="30" width="1" height="1" fill="#6a6a6a"/><rect x="345.0" y="33" width="1" height="1" fill="#6a6a6a"/><rect x="345.0" y="36" width="1" height="1" fill="#6a6a6a"/><rect x="345.0" y="39" width="1" height="1" fill="#6a6a6a"/><rect x="345.0" y="42" width="1" height="1" fill="#6a6a6a"/><rect x="345.0" y="45" width="1" height="1" fill="#6a6a6a"/><rect x="345.0" y="48" width="1" height="1" fill="#6a6a6a"/><rect x="345.0" y="51" width="1" height="1" fill="#6a6a6a"/><rect x="345.0" y="54" width="1" height="1" fill="#6a6a6a"/><rect x="345.0" y="57" width="1" height="1" fill="#6a6a6a"/><rect x="345.0" y="60" width="1" height="1" fill="#6a6a6a"/><rect x="345.0" y="63" width="1" height="1" fill="#6a6a6a"/><rect x="502.0" y="27" width="1" height="1" fill="#6a6a6a"/><rect x="502.0" y="30" width="1" height="1" fill="#6a6a6a"/><rect x="502.0" y="33" width="1" height="1" fill="#6a6a6a"/><rect x="502.0" y="36" width="1" height="1" fill="#6a6a6a"/><rect x="502.0" y="39" width="1" height="1" fill="#6a6a6a"/><rect x="502.0" y="42" width="1" height="1" fill="#6a6a6a"/><rect x="502.0" y="45" width="1" height="1" fill="#6a6a6a"/><rect x="502.0" y="48" width="1" height="1" fill="#6a6a6a"/><rect x="502.0" y="51" width="1" height="1" fill="#6a6a6a"/><rect x="502.0" y="54" width="1" height="1" fill="#6a6a6a"/><rect x="502.0" y="57" width="1" height="1" fill="#6a6a6a"/><rect x="502.0" y="60" width="1" height="1" fill="#6a6a6a"/><rect x="502.0" y="63" width="1" height="1" fill="#6a6a6a"/><rect x="558.0" y="27" width="1" height="1" fill="#6a6a6a"/><rect x="558.0" y="30" width="1" height="1" fill="#6a6a6a"/><rect x="558.0" y="33" width="1" height="1" fill="#6a6a6a"/><rect x="558.0" y="36" width="1" height="1" fill="#6a6a6a"/><rect x="558.0" y="39" width="1" height="1" fill="#6a6a6a"/><rect x="558.0" y="42" width="1" height="1" fill="#6a6a6a"/><rect x="558.0" y="45" width="1" height="1" fill="#6a6a6a"/><rect x="558.0" y="48" width="1" height="1" fill="#6a6a6a"/><rect x="558.0" y="51" width="1" height="1" fill="#6a6a6a"/><rect x="558.0" y="54" width="1" height="1" fill="#6a6a6a"/><rect x="558.0" y="57" width="1" height="1" fill="#6a6a6a"/><rect x="558.0" y="60" width="1" height="1" fill="#6a6a6a"/><rect x="558.0" y="63" width="1" height="1" fill="#6a6a6a"/><rect x="854.0" y="27" width="1" height="1" fill="#6a6a6a"/><rect x="854.0" y="30" width="1" height="1" fill="#6a6a6a"/><rect x="854.0" y="33" width="1" height="1" fill="#6a6a6a"/><rect x="854.0" y="36" width="1" height="1" fill="#6a6a6a"/><rect x="854.0" y="39" width="1" height="1" fill="#6a6a6a"/><rect x="854.0" y="42" width="1" height="1" fill="#6a6a6a"/><rect x="854.0" y="45" width="1" height="1" fill="#6a6a6a"/><rect x="854.0" y="48" width="1" height="1" fill="#6a6a6a"/><rect x="854.0" y="51" width="1" height="1" fill="#6a6a6a"/><rect x="854.0" y="54" width="1" height="1" fill="#6a6a6a"/><rect x="854.0" y="57" width="1" height="1" fill="#6a6a6a"/><rect x="854.0" y="60" width="1" height="1" fill="#6a6a6a"/><rect x="854.0" y="63" width="1" height="1" fill="#6a6a6a"/><rect x="911.0" y="27" width="1" height="1" fill="#6a6a6a"/><rect x="911.0" y="30" width="1" height="1" fill="#6a6a6a"/><rect x="911.0" y="33" width="1" height="1" fill="#6a6a6a"/><rect x="911.0" y="36" width="1" height="1" fill="#6a6a6a"/><rect x="911.0" y="39" width="1" height="1" fill="#6a6a6a"/><rect x="911.0" y="42" width="1" height="1" fill="#6a6a6a"/><rect x="911.0" y="45" width="1" height="1" fill="#6a6a6a"/><rect x="911.0" y="48" width="1" height="1" fill="#6a6a6a"/><rect x="911.0" y="51" width="1" height="1" fill="#6a6a6a"/><rect x="911.0" y="54" width="1" height="1" fill="#6a6a6a"/><rect x="911.0" y="57" width="1" height="1" fill="#6a6a6a"/><rect x="911.0" y="60" width="1" height="1" fill="#6a6a6a"/><rect x="911.0" y="63" width="1" height="1" fill="#6a6a6a"/><rect x="12" y="25" width="43" height="42" rx="5" fill="#b5b5b5"/><rect x="805" y="25" width="43" height="43" rx="5" fill="#b6b6b6"/><rect x="862" y="25" width="43" height="43" rx="5" fill="#b6b6b6"/><path d="M27.5 36 L27.5 53 L31.5 49.2 L34.8 56.2 L37.3 55 L34.2 48.2 L39.5 48 Z" fill="#fff" stroke="#1a1a1a" stroke-width="1.1" stroke-linejoin="round"/><rect x="101.5" y="32.5" width="24" height="27" rx="1.5" fill="url(#gPage)" stroke="#8a8a8a" stroke-width="1"/><rect x="102" y="58.5" width="23" height="1.5" fill="#9a9a9a"/><circle cx="121.7" cy="37.7" r="6.5" fill="url(#gGlow)"/><path d="M144.5 34 L152 34 L149 57.5 L146 57.5 Z" fill="#9a9a9a" stroke="#6a6a6a" stroke-width="0.8"/><path d="M151.5 32.5 L172.5 32.5 L171 43 L148.5 43 Z" fill="#f8f8f8" stroke="#7a7a7a" stroke-width="0.8"/><path d="M152 36 H169 M151.5 39 H168" stroke="#b4b4b4" stroke-width="1.3"/><path d="M151 43 L175.5 43 L172 57.5 L147.5 57.5 Z" fill="url(#gFold)" stroke="#3c6cb0" stroke-width="0.8"/><rect x="203.5" y="33.5" width="24.5" height="24.5" rx="3" fill="url(#gFloppy)" stroke="#2a2a9a" stroke-width="1.2"/><rect x="207" y="34.3" width="17.7" height="11" fill="#f4f6ff"/><rect x="209" y="48" width="12" height="9.5" fill="#e0e0e8"/><rect x="210.7" y="50.8" width="1.8" height="3.5" fill="#1a3ad8"/><rect x="221.3" y="48" width="1.4" height="9" fill="#1a5ae8"/><rect x="250.2" y="33.5" width="24.5" height="24.5" rx="3" fill="url(#gFloppy)" stroke="#2a2a9a" stroke-width="1.2"/><rect x="253.7" y="34.3" width="17.7" height="11" fill="#f4f6ff"/><rect x="255.7" y="48" width="12" height="9.5" fill="#e0e0e8"/><rect x="257.4" y="50.8" width="1.8" height="3.5" fill="#1a3ad8"/><rect x="268.0" y="48" width="1.4" height="9" fill="#1a5ae8"/><path d="M259.3 51 L261 45.5 L274 32.5 L277.5 36 L264.5 49 Z" fill="#f6b820" stroke="#a03010" stroke-width="0.9" stroke-linejoin="round"/><path d="M259.3 51 L260.3 47.5 L262.8 50 Z" fill="#202020"/><path d="M272.5 34 L276 37.5" stroke="#e05030" stroke-width="2.5"/><path d="M318 37 L318 45 M311.3 39.6 L315.5 45 M324.7 39.6 L320.5 45" stroke="#000" stroke-width="5.2" stroke-linecap="round"/><circle cx="318" cy="37" r="3.6" fill="#000"/><circle cx="311.3" cy="39.6" r="3.6" fill="#000"/><circle cx="324.7" cy="39.6" r="3.6" fill="#000"/><path d="M318 37 L318 45 M311.3 39.6 L315.5 45 M324.7 39.6 L320.5 45" stroke="#f8a820" stroke-width="2.4" stroke-linecap="round"/><circle cx="318" cy="37" r="2.3" fill="#f8a820"/><circle cx="311.3" cy="39.6" r="2.3" fill="#f8a820"/><circle cx="324.7" cy="39.6" r="2.3" fill="#f8a820"/><rect x="306" y="44" width="24.5" height="14.5" rx="2.8" fill="#000"/><path d="M307.5 45.6 Q318 43.5 329 45.6" stroke="#f8a820" stroke-width="1.6" fill="none"/><text x="0" y="0" text-anchor="middle" font-family="Liberation Sans" font-weight="bold" font-size="13" fill="#fff" transform="translate(318.3 57.2) scale(0.78 0.86)">SVG</text><rect x="364.5" y="32" width="19" height="13" rx="1" fill="#ececec" stroke="#a8a8a8" stroke-width="0.9"/><path d="M373 36 H381 M373 39 H381" stroke="#c8c8c8" stroke-width="1"/><rect x="360.5" y="43" width="27" height="14.2" rx="2.2" fill="url(#gPrinter)" stroke="#8c8c8c" stroke-width="1"/><rect x="362" y="47.5" width="24" height="3.2" fill="#cfcfcf"/><circle cx="362.8" cy="49" r="0.7" fill="#555"/><path d="M373.5 45 L381.5 52" stroke="#7a7a7a" stroke-width="3.2" stroke-linecap="round"/><path d="M373.5 45 L381.5 52" stroke="#d4d4d4" stroke-width="1.4" stroke-linecap="round"/><circle cx="369.3" cy="40.7" r="6.6" fill="#f0f0f0" stroke="#b4b4b4" stroke-width="1"/><circle cx="369.3" cy="40.7" r="5" fill="#c4d8f0" stroke="#4a7ac4" stroke-width="1.1"/><path d="M365.5 40 A4 4 0 0 1 373 39.5" stroke="#fff" stroke-width="1" fill="none" opacity="0.8"/><path d="M414.7 37.3 L414.7 51.7 L427.7 51.7 L423 46.3 C427 41.5 434 41 437 45.5 C440 50 434 56 427.3 57.5 C436 58.5 443 53 442.7 44.3 C442.5 35.5 433 31 425 35 C422.5 36.5 420.5 38.5 418.7 40.8 Z" fill="url(#gUndo)" stroke="#18702a" stroke-width="0.9" stroke-linejoin="round"/><g transform="translate(904 0) scale(-1 1)"><path d="M414.7 37.3 L414.7 51.7 L427.7 51.7 L423 46.3 C427 41.5 434 41 437 45.5 C440 50 434 56 427.3 57.5 C436 58.5 443 53 442.7 44.3 C442.5 35.5 433 31 425 35 C422.5 36.5 420.5 38.5 418.7 40.8 Z" fill="url(#gRedo)" stroke="#6aaa80" stroke-width="0.9" stroke-linejoin="round" transform="translate(0 0)"/></g><ellipse cx="532" cy="57" rx="11" ry="1.5" fill="#ffffff" opacity="0.8"/><ellipse cx="525" cy="57" rx="5" ry="1.3" fill="#7a7a7a" opacity="0.6"/><g transform="translate(531 43.8) rotate(-45)"><rect x="-13" y="-4.3" width="26" height="8.6" fill="#d81818" stroke="#801010" stroke-width="0.7"/><rect x="-9" y="-1" width="22" height="2.2" fill="#fff"/><rect x="-13" y="-4.3" width="5" height="8.6" fill="#f0f0f0" stroke="#808080" stroke-width="0.7"/><rect x="11.5" y="-4.3" width="1.6" height="8.6" fill="#666"/></g><path d="M587.5 46 L588 32 L590.5 30.5 L590.5 46 Z" fill="#f0f0f0" stroke="#707070" stroke-width="0.8"/><path d="M589.5 45.5 L601 37 L601.5 39.5 L590 47 Z" fill="#f0f0f0" stroke="#707070" stroke-width="0.8"/><ellipse cx="578.5" cy="48" rx="5" ry="3.3" fill="none" stroke="#e02828" stroke-width="2.2"/><ellipse cx="589.3" cy="55" rx="3.3" ry="5" fill="none" stroke="#e02828" stroke-width="2.2"/><path d="M583 46.5 L587 45.5 L588.5 50" stroke="#e02828" stroke-width="2" fill="none"/><path d="M573.5 57.6 H580 M576.7 54.5 V61" stroke="#000" stroke-width="1.2"/><rect x="618.5" y="30.5" width="21" height="24.5" rx="1.5" fill="#f8f8f8" stroke="#b8b8b8" stroke-width="0.9"/><rect x="622" y="37" width="5" height="0.9" fill="#c8c8c8"/><rect x="622" y="39.8" width="5" height="0.9" fill="#c8c8c8"/><rect x="622" y="42.6" width="5" height="0.9" fill="#c8c8c8"/><rect x="622" y="45.4" width="5" height="0.9" fill="#c8c8c8"/><rect x="622" y="48.2" width="5" height="0.9" fill="#c8c8c8"/><path d="M627 36.5 H647.5 V57 L643 61.5 H627 Z" fill="url(#gPage)" stroke="#909090" stroke-width="0.9"/><path d="M643 61.5 V57 H647.5 Z" fill="#b0b0b0"/><rect x="631" y="43" width="14" height="1" fill="#c0c0c0"/><rect x="631" y="45.8" width="13" height="1" fill="#c0c0c0"/><rect x="631" y="48.6" width="12" height="1" fill="#c0c0c0"/><rect x="631" y="51.4" width="14" height="1" fill="#c0c0c0"/><path d="M619 57 H626 M622.5 53.5 V60.5" stroke="#000" stroke-width="1.3"/><rect x="666" y="33" width="26.5" height="27.5" rx="1.5" fill="#c98a20" stroke="#9a6410" stroke-width="0.8"/><rect x="668.8" y="34.5" width="20.5" height="24" fill="#f6f6f6"/><rect x="672.3" y="40.4" width="14" height="1" fill="#c4c4c4"/><rect x="672.3" y="43.2" width="14" height="1" fill="#c4c4c4"/><rect x="672.3" y="46" width="12" height="1" fill="#c4c4c4"/><rect x="672.3" y="48.8" width="14" height="1" fill="#c4c4c4"/><rect x="672.3" y="51.6" width="9" height="1" fill="#c4c4c4"/><path d="M683 58.3 L689.3 52 V58.3 Z" fill="#a8a8a8"/><rect x="675.5" y="30" width="7.5" height="3" rx="0.8" fill="#8a8a7a"/><rect x="673" y="32.5" width="12.5" height="4.8" rx="1.5" fill="#9a9a8a" stroke="#6a6a5a" stroke-width="0.6"/><path d="M723 56.3 H745" stroke="#ff0000" stroke-width="1.6"/><path d="M724.3 55.5 L725.5 49.5 L739.5 35.5 L744.3 40.3 L730.3 54.3 Z" fill="#e02020" stroke="#6a3a10" stroke-width="0.9" stroke-linejoin="round"/><path d="M724.3 55.5 L726 50 L729.8 53.8 Z" fill="#f0d0a0"/><path d="M724.3 55.5 L725 53 L726.8 54.8 Z" fill="#101010"/><path d="M737.5 38.5 L741.3 42.3" stroke="#c0c0c0" stroke-width="1.6"/><rect x="765.7" y="35.3" width="28.6" height="22" rx="1" fill="#00007a" stroke="#202020" stroke-width="1"/><path d="M769.3 53.7 L791 39" fill="none" stroke="#fff" stroke-width="1.3"/><path d="M791 39 L791 53.7 L769.3 53.7" fill="none" stroke="#fff" stroke-width="1.4" stroke-dasharray="2.6 1.8"/><path d="M816.6 55 A13.3 13.3 0 0 0 835.4 36.2" fill="none" stroke="#000" stroke-width="2.4"/><path d="M816.6 55 A13.3 13.3 0 0 1 835.4 36.2" fill="none" stroke="#000" stroke-width="2.5" shape-rendering="crispEdges"/><path d="M812 59.6 L840 32" stroke="#0000ff" stroke-width="1.3"/><rect x="869.8" y="32.8" width="2.4" height="2.4" fill="#000"/><rect x="869.8" y="40.8" width="2.4" height="2.4" fill="#000"/><rect x="869.8" y="48.8" width="2.4" height="2.4" fill="#000"/><rect x="869.8" y="56.8" width="2.4" height="2.4" fill="#000"/><rect x="877.8" y="32.8" width="2.4" height="2.4" fill="#000"/><rect x="877.8" y="40.8" width="2.4" height="2.4" fill="#000"/><rect x="877.8" y="48.8" width="2.4" height="2.4" fill="#000"/><rect x="877.8" y="56.8" width="2.4" height="2.4" fill="#000"/><rect x="885.8" y="32.8" width="2.4" height="2.4" fill="#000"/><rect x="885.8" y="40.8" width="2.4" height="2.4" fill="#000"/><rect x="885.8" y="48.8" width="2.4" height="2.4" fill="#000"/><rect x="885.8" y="56.8" width="2.4" height="2.4" fill="#000"/><rect x="893.8" y="32.8" width="2.4" height="2.4" fill="#000"/><rect x="893.8" y="40.8" width="2.4" height="2.4" fill="#000"/><rect x="893.8" y="48.8" width="2.4" height="2.4" fill="#000"/><rect x="893.8" y="56.8" width="2.4" height="2.4" fill="#000"/><path d="M945.0 50.8 L953.4 58.6" stroke="#5c5c5c" stroke-width="3.8" stroke-linecap="round"/><path d="M945.8 51.099999999999994 L952.6 58.1" stroke="#9a9a9a" stroke-width="1" stroke-linecap="round"/><circle cx="936.3" cy="41.8" r="11.1" fill="#f2f2ec" stroke="#a4a49c" stroke-width="0.9"/><circle cx="936.3" cy="41.8" r="9.4" fill="url(#gBlue)" stroke="#c8c8c0" stroke-width="0.8"/><path d="M934.5 36.4 H938 V40.3 H941.7 V43.6 H938 V47.5 H934.5 V43.6 H930.6 V40.3 H934.5 Z" fill="#fff" stroke="#3a64a8" stroke-width="0.7"/><path d="M990.6 50.8 L999.0 58.6" stroke="#5c5c5c" stroke-width="3.8" stroke-linecap="round"/><path d="M991.4 51.099999999999994 L998.2 58.1" stroke="#9a9a9a" stroke-width="1" stroke-linecap="round"/><circle cx="981.9" cy="41.8" r="11.1" fill="#f2f2ec" stroke="#a4a49c" stroke-width="0.9"/><circle cx="981.9" cy="41.8" r="9.4" fill="url(#gBlue)" stroke="#c8c8c0" stroke-width="0.8"/><rect x="976" y="40.3" width="11.9" height="3.3" fill="#fff" stroke="#3a64a8" stroke-width="0.7"/><path d="M1036.8 50.8 L1045.1999999999998 58.6" stroke="#5c5c5c" stroke-width="3.8" stroke-linecap="round"/><path d="M1037.6 51.099999999999994 L1044.3999999999999 58.1" stroke="#9a9a9a" stroke-width="1" stroke-linecap="round"/><circle cx="1028.1" cy="41.8" r="11.1" fill="#f2f2ec" stroke="#a4a49c" stroke-width="0.9"/><circle cx="1028.1" cy="41.8" r="9.4" fill="url(#gBlue)" stroke="#c8c8c0" stroke-width="0.8"/><path d="M1022.0999999999999 39.3 V35.8 H1025.6" fill="none" stroke="#fff" stroke-width="2.2"/><path d="M1022.0999999999999 44.3 V47.8 H1025.6" fill="none" stroke="#fff" stroke-width="2.2"/><path d="M1034.1 39.3 V35.8 H1030.6" fill="none" stroke="#fff" stroke-width="2.2"/><path d="M1034.1 44.3 V47.8 H1030.6" fill="none" stroke="#fff" stroke-width="2.2"/><path d="M1082.7 50.8 L1091.1 58.6" stroke="#5c5c5c" stroke-width="3.8" stroke-linecap="round"/><path d="M1083.5 51.099999999999994 L1090.3 58.1" stroke="#9a9a9a" stroke-width="1" stroke-linecap="round"/><circle cx="1074" cy="41.8" r="11.1" fill="#f2f2ec" stroke="#a4a49c" stroke-width="0.9"/><circle cx="1074" cy="41.8" r="9.4" fill="url(#gBlue)" stroke="#c8c8c0" stroke-width="0.8"/><path d="M1068 39.3 V35.8 H1071.5" fill="none" stroke="#ff0000" stroke-width="2.2"/><path d="M1068 44.3 V47.8 H1071.5" fill="none" stroke="#ff0000" stroke-width="2.2"/><path d="M1080 39.3 V35.8 H1076.5" fill="none" stroke="#ff0000" stroke-width="2.2"/><path d="M1080 44.3 V47.8 H1076.5" fill="none" stroke="#ff0000" stroke-width="2.2"/><path d="M1128.7 50.8 L1137.1 58.6" stroke="#5c5c5c" stroke-width="3.8" stroke-linecap="round"/><path d="M1129.5 51.099999999999994 L1136.3 58.1" stroke="#9a9a9a" stroke-width="1" stroke-linecap="round"/><circle cx="1120" cy="41.8" r="11.1" fill="#f2f2ec" stroke="#a4a49c" stroke-width="0.9"/><circle cx="1120" cy="41.8" r="9.4" fill="url(#gBlue)" stroke="#c8c8c0" stroke-width="0.8"/><path d="M1113.5 41.8 L1119 36.8 V39.5 H1127 V44.3 H1119 V47 Z" fill="#fff" stroke="#3a64a8" stroke-width="0.6"/><rect x="1154.5" y="30.8" width="27.3" height="17.2" rx="1" fill="#fff" stroke="#6e8ec0" stroke-width="1"/><path d="M1176.9 53.6 L1185.3000000000002 61.400000000000006" stroke="#5c5c5c" stroke-width="3.8" stroke-linecap="round"/><path d="M1177.7 53.900000000000006 L1184.5000000000002 60.900000000000006" stroke="#9a9a9a" stroke-width="1" stroke-linecap="round"/><circle cx="1168.2" cy="44.6" r="9.6" fill="#f2f2ec" stroke="#a4a49c" stroke-width="0.9"/><circle cx="1168.2" cy="44.6" r="7.8" fill="url(#gBlue)" stroke="#c8c8c0" stroke-width="0.8"/><path d="M1221.7 51.7 L1230.1 59.50000000000001" stroke="#5c5c5c" stroke-width="3.8" stroke-linecap="round"/><path d="M1222.5 52.0 L1229.3 59.00000000000001" stroke="#9a9a9a" stroke-width="1" stroke-linecap="round"/><circle cx="1213" cy="42.7" r="11.1" fill="#f2f2ec" stroke="#a4a49c" stroke-width="0.9"/><circle cx="1213" cy="42.7" r="9.4" fill="url(#gBlue)" stroke="#c8c8c0" stroke-width="0.8"/><path d="M1213 29.5 L1216 33.5 H1214.3 V41.2 H1222 V39.5 L1226 42.7 L1222 46 V44.3 H1214.3 V52 H1216 L1213 56 L1210 52 H1211.7 V44.3 H1204 V46 L1200 42.7 L1204 39.5 V41.2 H1211.7 V33.5 H1210 Z" fill="#fff" stroke="#3a64a8" stroke-width="0.6"/><rect x="7" y="77" width="2" height="2" fill="#a4a4a4"/><rect x="7" y="83" width="2" height="2" fill="#a4a4a4"/><rect x="7" y="89" width="2" height="2" fill="#a4a4a4"/><rect x="7" y="95" width="2" height="2" fill="#a4a4a4"/><rect x="67.0" y="72" width="1" height="1" fill="#6a6a6a"/><rect x="67.0" y="75" width="1" height="1" fill="#6a6a6a"/><rect x="67.0" y="78" width="1" height="1" fill="#6a6a6a"/><rect x="67.0" y="81" width="1" height="1" fill="#6a6a6a"/><rect x="67.0" y="84" width="1" height="1" fill="#6a6a6a"/><rect x="67.0" y="87" width="1" height="1" fill="#6a6a6a"/><rect x="67.0" y="90" width="1" height="1" fill="#6a6a6a"/><rect x="67.0" y="93" width="1" height="1" fill="#6a6a6a"/><rect x="67.0" y="96" width="1" height="1" fill="#6a6a6a"/><rect x="67.0" y="99" width="1" height="1" fill="#6a6a6a"/><rect x="67.0" y="102" width="1" height="1" fill="#6a6a6a"/><rect x="15" y="73" width="43" height="31" rx="5" fill="url(#gTb2btn)" stroke="#8c8c8c" stroke-width="2"/><defs><linearGradient id="gTb2btn" x1="0" y1="0" x2="0" y2="1"><stop offset="0" stop-color="#f6f6f6"/><stop offset="0.5" stop-color="#f2f2f2"/><stop offset="1" stop-color="#d8d8d8"/></linearGradient></defs><path d="M31 79 L31 93 L34.3 90 L37 95.7 L39.3 94.7 L36.7 89 L40.8 88.8 Z" fill="#fff" stroke="#1a1a1a" stroke-width="1" stroke-linejoin="round"/></svg><svg class="a" style="left:0;top:108px;" width="72" height="690" viewBox="0 108 72 690"><defs><linearGradient id="gBtn" x1="0" y1="0" x2="0" y2="1"><stop offset="0" stop-color="#e2e2e2"/><stop offset="0.45" stop-color="#f2f2f2"/><stop offset="1" stop-color="#f7f7f7"/></linearGradient><pattern id="hatch" width="3" height="3" patternUnits="userSpaceOnUse" patternTransform="rotate(45)"><rect width="3" height="3" fill="#f4f4f4"/><rect width="1" height="3" fill="#555"/></pattern></defs><rect x="7" y="116" width="2" height="2" fill="#a8a8a8"/><rect x="13" y="116" width="2" height="2" fill="#a8a8a8"/><rect x="19" y="116" width="2" height="2" fill="#a8a8a8"/><rect x="25" y="116" width="2" height="2" fill="#a8a8a8"/><rect x="31" y="116" width="2" height="2" fill="#a8a8a8"/><rect x="37" y="116" width="2" height="2" fill="#a8a8a8"/><rect x="43" y="116" width="2" height="2" fill="#a8a8a8"/><rect x="49" y="116" width="2" height="2" fill="#a8a8a8"/><rect x="55" y="116" width="2" height="2" fill="#a8a8a8"/><rect x="61" y="116" width="2" height="2" fill="#a8a8a8"/><rect x="1.5" y="122.5" width="34" height="34" fill="url(#gBtn)" stroke="#9c9c9c" stroke-width="1.2"/><rect x="36.5" y="122.5" width="34" height="34" fill="url(#gBtn)" stroke="#9c9c9c" stroke-width="1.2"/><rect x="1.5" y="157.5" width="34" height="34" fill="url(#gBtn)" stroke="#9c9c9c" stroke-width="1.2"/><rect x="36.5" y="157.5" width="34" height="34" fill="url(#gBtn)" stroke="#9c9c9c" stroke-width="1.2"/><rect x="1.5" y="192.5" width="34" height="34" fill="url(#gBtn)" stroke="#9c9c9c" stroke-width="1.2"/><rect x="36.5" y="192.5" width="34" height="34" fill="url(#gBtn)" stroke="#9c9c9c" stroke-width="1.2"/><rect x="1.5" y="227.5" width="34" height="34" fill="url(#gBtn)" stroke="#9c9c9c" stroke-width="1.2"/><rect x="36.5" y="227.5" width="34" height="34" fill="url(#gBtn)" stroke="#9c9c9c" stroke-width="1.2"/><rect x="1.5" y="262.5" width="34" height="34" fill="url(#gBtn)" stroke="#9c9c9c" stroke-width="1.2"/><path d="M27 152 L32 152 L32 147 Z" fill="#000"/><path d="M62 152 L67 152 L67 147 Z" fill="#000"/><path d="M27 187 L32 187 L32 182 Z" fill="#000"/><path d="M62 187 L67 187 L67 182 Z" fill="#000"/><path d="M27 222 L32 222 L32 217 Z" fill="#000"/><path d="M62 222 L67 222 L67 217 Z" fill="#000"/><path d="M27 257 L32 257 L32 252 Z" fill="#000"/><path d="M62 257 L67 257 L67 252 Z" fill="#000"/><path d="M27 292 L32 292 L32 287 Z" fill="#000"/><path d="M8.0 131.5h7M11.5 128.0v7" stroke="#000" stroke-width="1.3"/><path d="M22.0 140.5h7M25.5 137.0v7" stroke="#000" stroke-width="1.3"/><path d="M9.0 146.5h7M12.5 143.0v7" stroke="#000" stroke-width="1.3"/><path d="M41.7 144.8 L65 133.9" fill="none" stroke="#1a1a1a" stroke-width="1.2"/><path d="M7.6 183 A19.5 19.5 0 0 1 27.2 163.8" fill="none" stroke="#1a1a1a" stroke-width="1.2"/><circle cx="52.3" cy="173.4" r="10" fill="none" stroke="#1a1a1a" stroke-width="1.2"/><ellipse cx="18" cy="209" rx="14.5" ry="6" transform="rotate(-45 18 209)" fill="none" stroke="#1a1a1a" stroke-width="1.2"/><path d="M48 218 C44 212 40 200 43 199 C47 198 54 206 57 210 C60 214 65 221 64.5 206 C64 196 59 200 56 205 C53 212 51 219 48 218 Z" fill="none" stroke="#1a1a1a" stroke-width="1.2"/><path d="M27.4 247.4 H13.5 A4.2 4.2 0 0 1 13.5 239" fill="none" stroke="#1a1a1a" stroke-width="1.2"/><path d="M41.5 238 L44.5 232.5 L50.5 232.5 L53.7 238 L50.5 243.5 L44.5 243.5 Z" fill="none" stroke="#1a1a1a" stroke-width="1.2"/><path d="M55.5 245.4 L60.6 236.3 L65.8 245.4 Z" fill="none" stroke="#1a1a1a" stroke-width="1.2"/><rect x="41" y="248.7" width="15" height="7" fill="none" stroke="#1a1a1a" stroke-width="1.2"/><path d="M7.5 286.5 V277 L13 272 H28.3 V286.5 Z" fill="url(#hatch)" stroke="#1a1a1a" stroke-width="1.2"/><circle cx="20.5" cy="279.7" r="2.8" fill="#f4f4f4" stroke="#1a1a1a" stroke-width="1.1"/><rect x="1.5" y="305.5" width="34" height="34" fill="url(#gBtn)" stroke="#9c9c9c" stroke-width="1.2"/><rect x="36.5" y="305.5" width="34" height="34" fill="url(#gBtn)" stroke="#9c9c9c" stroke-width="1.2"/><rect x="1.5" y="340.5" width="34" height="34" fill="url(#gBtn)" stroke="#9c9c9c" stroke-width="1.2"/><path d="M62 335 L67 335 L67 330 Z" fill="#000"/><text x="18.2" y="331.8" text-anchor="middle" font-family="Liberation Serif" font-size="27" fill="#000">A</text><path d="M43.5 314 V330 M61.5 314 V330 M44 316.5 H61" stroke="#000" stroke-width="1.2"/><path d="M44 316.5 L48 314.6 V318.4 Z M61 316.5 L57 314.6 V318.4 Z" fill="#000"/><rect x="7.2" y="348.8" width="21.4" height="16.2" fill="#fff" stroke="#000" stroke-width="1.5"/><path d="M10 363 L10 359 L13.5 356 L16.5 358.5 L20.5 354 L25.5 360 V363 Z" fill="#000"/><circle cx="24.5" cy="352.5" r="1.6" fill="#000"/><rect x="1.5" y="384.0" width="34" height="34" fill="url(#gBtn)" stroke="#9c9c9c" stroke-width="1.2"/><rect x="36.5" y="384.0" width="34" height="34" fill="url(#gBtn)" stroke="#9c9c9c" stroke-width="1.2"/><rect x="1.5" y="419.0" width="34" height="34" fill="url(#gBtn)" stroke="#9c9c9c" stroke-width="1.2"/><rect x="36.5" y="419.0" width="34" height="34" fill="url(#gBtn)" stroke="#9c9c9c" stroke-width="1.2"/><path d="M27 413.5 L32 413.5 L32 408.5 Z" fill="#000"/><path d="M62 448.5 L67 448.5 L67 443.5 Z" fill="#000"/><path d="M5.5 393 V412.5 H24.3 Z M9.3 402.8 V408.5 H15 Z" fill="none" stroke="#1a1a1a" stroke-width="1.2"/><path d="M10 388.5 L19.5 397.5" stroke="#d82020" stroke-width="3.2"/><path d="M18.5 396.5 L21 399" stroke="#6a4010" stroke-width="2"/><path d="M26 387 V389 M26 389 L23 405 M26 389 L29 405" fill="none" stroke="#1a1a1a" stroke-width="1.2"/><circle cx="26" cy="389" r="1.2" fill="#1a1a1a"/><rect x="41.5" y="396" width="23.5" height="7.5" rx="1.2" fill="#fff" stroke="#555" stroke-width="1"/><rect x="44.0" y="396.5" width="0.7" height="2.5" fill="#666"/><rect x="46.4" y="396.5" width="0.7" height="1.5" fill="#666"/><rect x="48.8" y="396.5" width="0.7" height="2.5" fill="#666"/><rect x="51.2" y="396.5" width="0.7" height="1.5" fill="#666"/><rect x="53.6" y="396.5" width="0.7" height="2.5" fill="#666"/><rect x="56.0" y="396.5" width="0.7" height="1.5" fill="#666"/><rect x="58.4" y="396.5" width="0.7" height="2.5" fill="#666"/><rect x="60.8" y="396.5" width="0.7" height="1.5" fill="#666"/><rect x="63.2" y="396.5" width="0.7" height="2.5" fill="#666"/><rect x="7.5" y="425.5" width="17.4" height="12.5" fill="#fdf2c4" stroke="#333" stroke-width="1"/><circle cx="22" cy="437" r="7.1" fill="#fdf2c4" fill-opacity="0.9" stroke="#333" stroke-width="1"/><path d="M7.5 438 V425.5 H24.9 V438 Z" fill="none" stroke="#333" stroke-width="1"/><circle cx="7.8" cy="438" r="1.4" fill="#ff2020"/><path d="M41.5 433.8 L58.6 423.8" stroke="#ff2a2a" stroke-width="1.3"/><path d="M51.5 429.8 V442 L54 439.5 L56.3 444.5 L58.3 443.6 L56 438.8 L59.3 438.6 Z" fill="#fff" stroke="#444" stroke-width="0.9" stroke-linejoin="round"/><rect x="1.5" y="461.5" width="34" height="34" fill="url(#gBtn)" stroke="#9c9c9c" stroke-width="1.2"/><path d="M27 491 L32 491 L32 486 Z" fill="#000"/><path d="M7.1 471.5 L19 467 L28.4 471.5 L28.4 483.5 L16.5 488.8 L7.1 483.5 Z M7.1 471.5 L16.5 476.5 L28.4 471.5 M16.5 476.5 V488.8" fill="none" stroke="#1a1a1a" stroke-width="1.2" stroke-linejoin="round"/></svg><svg class="a" style="left:1455px;top:108px;" width="45" height="690" viewBox="1455 108 45 690"><rect x="1462.0" y="116" width="2" height="2" fill="#a8a8a8"/><rect x="1467.9" y="116" width="2" height="2" fill="#a8a8a8"/><rect x="1473.8" y="116" width="2" height="2" fill="#a8a8a8"/><rect x="1479.7" y="116" width="2" height="2" fill="#a8a8a8"/><rect x="1485.6" y="116" width="2" height="2" fill="#a8a8a8"/><rect x="1456.5" y="120" width="50" height="43" rx="5" fill="#b8b8b8"/><rect x="1456.5" y="417" width="50" height="43" rx="5" fill="#b8b8b8"/><rect x="1458" y="261" width="1" height="1" fill="#777"/><rect x="1461" y="261" width="1" height="1" fill="#777"/><rect x="1464" y="261" width="1" height="1" fill="#777"/><rect x="1467" y="261" width="1" height="1" fill="#777"/><rect x="1470" y="261" width="1" height="1" fill="#777"/><rect x="1473" y="261" width="1" height="1" fill="#777"/><rect x="1476" y="261" width="1" height="1" fill="#777"/><rect x="1479" y="261" width="1" height="1" fill="#777"/><rect x="1482" y="261" width="1" height="1" fill="#777"/><rect x="1485" y="261" width="1" height="1" fill="#777"/><rect x="1488" y="261" width="1" height="1" fill="#777"/><rect x="1491" y="261" width="1" height="1" fill="#777"/><rect x="1494" y="261" width="1" height="1" fill="#777"/><rect x="1497" y="261" width="1" height="1" fill="#777"/><rect x="1458" y="409" width="1" height="1" fill="#777"/><rect x="1461" y="409" width="1" height="1" fill="#777"/><rect x="1464" y="409" width="1" height="1" fill="#777"/><rect x="1467" y="409" width="1" height="1" fill="#777"/><rect x="1470" y="409" width="1" height="1" fill="#777"/><rect x="1473" y="409" width="1" height="1" fill="#777"/><rect x="1476" y="409" width="1" height="1" fill="#777"/><rect x="1479" y="409" width="1" height="1" fill="#777"/><rect x="1482" y="409" width="1" height="1" fill="#777"/><rect x="1485" y="409" width="1" height="1" fill="#777"/><rect x="1488" y="409" width="1" height="1" fill="#777"/><rect x="1491" y="409" width="1" height="1" fill="#777"/><rect x="1494" y="409" width="1" height="1" fill="#777"/><rect x="1497" y="409" width="1" height="1" fill="#777"/><rect x="1463.5" y="127.5" width="27" height="27" fill="#fff" stroke="#333" stroke-width="1"/><rect x="1463.5" y="127.5" width="27" height="4.5" fill="#000"/><rect x="1465" y="128.5" width="3" height="3" fill="#fff"/><rect x="1463.5" y="174.5" width="27" height="27" fill="#fff" stroke="#333" stroke-width="1"/><rect x="1463.5" y="174.5" width="27" height="4.5" fill="#000"/><rect x="1465" y="175.5" width="3" height="3" fill="#fff"/><rect x="1463.5" y="221.0" width="27" height="27" fill="#fff" stroke="#333" stroke-width="1"/><rect x="1463.5" y="221.0" width="27" height="4.5" fill="#000"/><rect x="1465" y="222.0" width="3" height="3" fill="#fff"/><rect x="1463.5" y="276.5" width="27" height="27" fill="#fff" stroke="#333" stroke-width="1"/><rect x="1463.5" y="276.5" width="27" height="4.5" fill="#000"/><rect x="1465" y="277.5" width="3" height="3" fill="#fff"/><rect x="1463.5" y="322.5" width="27" height="27" fill="#fff" stroke="#333" stroke-width="1"/><rect x="1463.5" y="322.5" width="27" height="4.5" fill="#000"/><rect x="1465" y="323.5" width="3" height="3" fill="#fff"/><rect x="1463.5" y="368.5" width="27" height="27" fill="#fff" stroke="#333" stroke-width="1"/><rect x="1463.5" y="368.5" width="27" height="4.5" fill="#000"/><rect x="1465" y="369.5" width="3" height="3" fill="#fff"/><rect x="1463.5" y="424.5" width="27" height="27" fill="#fff" stroke="#333" stroke-width="1"/><rect x="1463.5" y="424.5" width="27" height="4.5" fill="#000"/><rect x="1465" y="425.5" width="3" height="3" fill="#fff"/><rect x="1463.5" y="471.5" width="27" height="27" fill="#fff" stroke="#333" stroke-width="1"/><rect x="1463.5" y="471.5" width="27" height="4.5" fill="#000"/><rect x="1465" y="472.5" width="3" height="3" fill="#fff"/><path d="M1470 139 L1476 136.5 V148.5 L1470 151 Z" fill="#888" stroke="#444" stroke-width="0.7"/><path d="M1472.5 138 L1484 135 V147 L1472.5 150 Z" fill="#fff" stroke="#444" stroke-width="0.8"/><path d="M1476 146.5 L1481 139 L1481 146 Z" fill="none" stroke="#ff3030" stroke-width="0.9"/><rect x="1469.5" y="183.5" width="9" height="7" fill="#fdf2c4" stroke="#444" stroke-width="0.8"/><circle cx="1479" cy="191" r="4.5" fill="#fdf2c4" stroke="#444" stroke-width="0.8"/><rect x="1468.5" y="230.0" width="17" height="12" rx="2" fill="#f4f4f4" stroke="#b8c8e0" stroke-width="0.9"/><rect x="1467" y="284.0" width="3.5" height="2.5" fill="#000"/><rect x="1473" y="283.7" width="13" height="3" fill="#fff" stroke="#444" stroke-width="0.7"/><rect x="1467" y="288.5" width="3.5" height="2.5" fill="#000"/><rect x="1473" y="288.2" width="13" height="3" fill="#fff" stroke="#444" stroke-width="0.7"/><rect x="1467" y="293.0" width="3.5" height="2.5" fill="#000"/><rect x="1473" y="292.7" width="13" height="3" fill="#fff" stroke="#444" stroke-width="0.7"/><path d="M1471 331 H1483 L1478.5 337 V344 L1475.5 342.5 V337 Z" fill="#b0b0b0" stroke="#555" stroke-width="0.7"/><path d="M1469 377 L1474 381 V388 L1469 392 Z" fill="#fff" stroke="#555" stroke-width="0.8"/><rect x="1474" y="380.5" width="10" height="8" rx="1" fill="#aaa" stroke="#555" stroke-width="0.7"/><path d="M1467 384.5 H1488" stroke="#f07070" stroke-width="0.6" stroke-dasharray="1.5 1"/><rect x="1467" y="432.0" width="12" height="0.8" fill="#999"/><rect x="1467" y="435.2" width="11" height="0.8" fill="#999"/><rect x="1467" y="438.4" width="12" height="0.8" fill="#999"/><rect x="1467" y="441.6" width="13" height="0.8" fill="#999"/><path d="M1464 447.5 H1490" stroke="#444" stroke-width="0.7"/><rect x="1472" y="448.5" width="14" height="1" fill="#666"/><rect x="1470.5" y="480" width="13" height="15" rx="1" fill="#c98a20" stroke="#8a5a10" stroke-width="0.6"/><rect x="1472" y="481.5" width="10" height="12" fill="#f4f4f4"/><rect x="1474.5" y="478.5" width="5" height="3" fill="#888"/><path d="M1478 493 L1482 489 V493 Z" fill="#88a8d0"/></svg><svg class="a" style="left:74px;top:110px;" width="40" height="20" viewBox="74 110 40 20"><path d="M79 116 L87 124 M87 116 L79 124" stroke="#555" stroke-width="1.1"/><circle cx="102" cy="118.5" r="5.4" fill="#fafafa" stroke="#1e3a8a" stroke-width="2.2"/><path d="M99.5 117 H104 M101.5 115 V121" stroke="#c8a0a0" stroke-width="0.6"/><path d="M102.5 119 L106.8 123.6" stroke="#f0a020" stroke-width="2.2"/><circle cx="107.2" cy="124" r="1.2" fill="#e06060"/></svg><svg class="a" style="left:72px;top:132px;" width="1081" height="616" viewBox="72 132 1081 616"><path d="M905.5 145.3 L917 145.3 L911.3 151.2 Z" fill="#000" stroke="#fff" stroke-width="0.6" paint-order="stroke"/><path d="M85.2 360.2 L85.2 371.8 L91.2 366 Z" fill="#000" stroke="#fff" stroke-width="0.6" paint-order="stroke"/></svg></body></html>
